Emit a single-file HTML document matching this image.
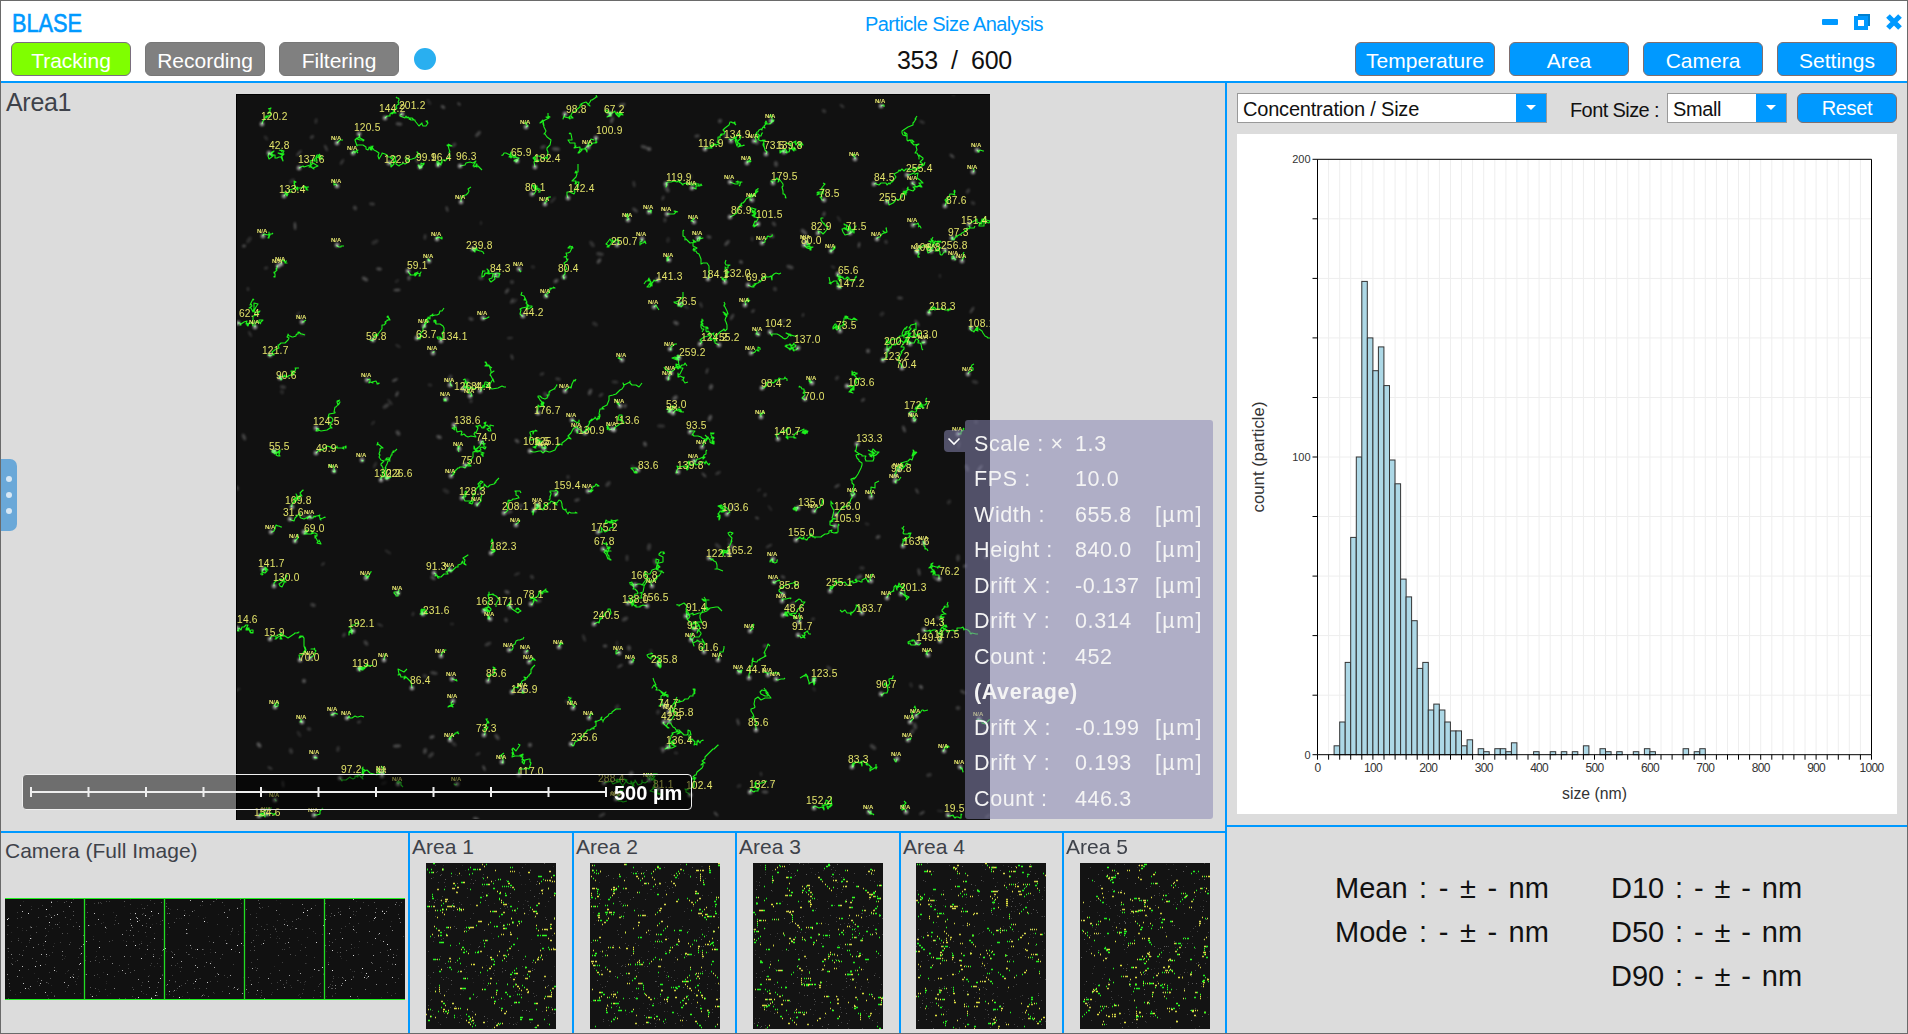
<!DOCTYPE html>
<html><head><meta charset="utf-8"><style>
*{margin:0;padding:0;box-sizing:border-box}
html,body{width:1908px;height:1034px;overflow:hidden;background:#dcdcdc;font-family:"Liberation Sans", sans-serif}
.a{position:absolute}
.t{position:absolute;white-space:pre;line-height:1}
.btn{position:absolute;border-radius:6px;color:#fff;font-size:21px;text-align:center;line-height:35px}
</style></head><body>
<div class="a" style="left:0;top:0;width:1908px;height:81px;background:#fff"></div><div class="a" style="left:0;top:81px;width:1908px;height:2px;background:#0099ff"></div><div class="t" style="left:12px;top:10.5px;font-size:25px;color:#0099ff;-webkit-text-stroke:0.6px #0099ff;transform:scaleX(0.87);transform-origin:0 0">BLASE</div><div class="t" style="left:865px;top:13.5px;font-size:20px;color:#0099ff;letter-spacing:-0.55px">Particle Size Analysis</div><div class="t" style="left:897px;top:48px;font-size:25px;color:#111;letter-spacing:-0.3px">353  /  600</div><div class="btn" style="left:11px;top:42px;width:120px;height:34px;background:#7fff00;border:1px solid #7a6e7e">Tracking</div><div class="btn" style="left:145px;top:42px;width:120px;height:34px;background:#808080;border:1px solid #777">Recording</div><div class="btn" style="left:279px;top:42px;width:120px;height:34px;background:#808080;border:1px solid #777">Filtering</div><div class="a" style="left:414px;top:48px;width:22px;height:22px;border-radius:50%;background:#29aff0"></div><div class="btn" style="left:1355px;top:42px;width:140px;height:34px;background:#0099ff;border:1px solid #806e6e">Temperature</div><div class="btn" style="left:1509px;top:42px;width:120px;height:34px;background:#0099ff;border:1px solid #806e6e">Area</div><div class="btn" style="left:1643px;top:42px;width:120px;height:34px;background:#0099ff;border:1px solid #806e6e">Camera</div><div class="btn" style="left:1777px;top:42px;width:120px;height:34px;background:#0099ff;border:1px solid #806e6e">Settings</div><div class="a" style="left:1822px;top:19px;width:16px;height:6px;border-radius:1px;background:#0099ff"></div><div class="a" style="left:1858px;top:14px;width:12px;height:12px;background:#0080d0"></div><div class="a" style="left:1854px;top:16px;width:14px;height:14px;background:#0099ff"></div><div class="a" style="left:1858px;top:20px;width:6px;height:6px;background:#fff"></div><svg class="a" style="left:1884px;top:12px" width="20" height="20"><path d="M4 4L16 16M16 4L4 16" stroke="#0099ff" stroke-width="5.2"/></svg><div class="t" style="left:6px;top:90px;font-size:25px;color:#3e424a;letter-spacing:-0.3px">Area1</div><div class="a" style="left:1px;top:459px;width:16px;height:72px;background:#6aa8d8;border-radius:0 7px 7px 0"></div><div class="a" style="left:6px;top:476px;width:6px;height:6px;border-radius:50%;background:#d8e8f5"></div><div class="a" style="left:6px;top:492px;width:6px;height:6px;border-radius:50%;background:#d8e8f5"></div><div class="a" style="left:6px;top:508px;width:6px;height:6px;border-radius:50%;background:#d8e8f5"></div><div class="a" id="img" style="left:236px;top:94px;width:754px;height:726px;background:#111;border-top:1px solid #000;border-left:1px solid #000;overflow:hidden"><svg width="754" height="725" style="position:absolute;left:-1px;top:-1px"><defs><filter id="bl" x="-50%" y="-50%" width="200%" height="200%"><feGaussianBlur stdDeviation="1.2"/></filter></defs><g fill="#fff" filter="url(#bl)"><ellipse cx="341" cy="406" rx="2.9" ry="1.5" transform="rotate(166 341 406)" opacity="0.22"/><ellipse cx="139" cy="371" rx="3.6" ry="1.1" transform="rotate(113 139 371)" opacity="0.16"/><ellipse cx="68" cy="587" rx="2.1" ry="2.0" transform="rotate(125 68 587)" opacity="0.29"/><ellipse cx="493" cy="446" rx="2.0" ry="1.5" transform="rotate(28 493 446)" opacity="0.11"/><ellipse cx="143" cy="175" rx="2.9" ry="1.4" transform="rotate(5 143 175)" opacity="0.27"/><ellipse cx="391" cy="464" rx="3.3" ry="1.5" transform="rotate(90 391 464)" opacity="0.16"/><ellipse cx="752" cy="722" rx="3.4" ry="1.3" transform="rotate(151 752 722)" opacity="0.15"/><ellipse cx="218" cy="51" rx="2.8" ry="1.8" transform="rotate(138 218 51)" opacity="0.18"/><ellipse cx="722" cy="614" rx="2.4" ry="1.9" transform="rotate(0 722 614)" opacity="0.19"/><ellipse cx="739" cy="288" rx="3.3" ry="1.8" transform="rotate(13 739 288)" opacity="0.15"/><ellipse cx="66" cy="241" rx="3.5" ry="1.1" transform="rotate(174 66 241)" opacity="0.15"/><ellipse cx="76" cy="43" rx="2.4" ry="1.6" transform="rotate(143 76 43)" opacity="0.19"/><ellipse cx="144" cy="531" rx="3.3" ry="1.1" transform="rotate(24 144 531)" opacity="0.18"/><ellipse cx="161" cy="196" rx="3.6" ry="1.3" transform="rotate(175 161 196)" opacity="0.28"/><ellipse cx="159" cy="286" rx="3.3" ry="1.1" transform="rotate(154 159 286)" opacity="0.30"/><ellipse cx="161" cy="187" rx="2.7" ry="1.3" transform="rotate(139 161 187)" opacity="0.11"/><ellipse cx="68" cy="422" rx="3.2" ry="1.4" transform="rotate(44 68 422)" opacity="0.19"/><ellipse cx="723" cy="351" rx="3.7" ry="1.2" transform="rotate(103 723 351)" opacity="0.13"/><ellipse cx="685" cy="593" rx="2.4" ry="1.7" transform="rotate(45 685 593)" opacity="0.29"/><ellipse cx="148" cy="689" rx="3.2" ry="1.4" transform="rotate(159 148 689)" opacity="0.12"/><ellipse cx="29" cy="698" rx="3.4" ry="1.3" transform="rotate(43 29 698)" opacity="0.26"/><ellipse cx="450" cy="213" rx="3.4" ry="1.1" transform="rotate(32 450 213)" opacity="0.15"/><ellipse cx="422" cy="618" rx="2.6" ry="1.9" transform="rotate(111 422 618)" opacity="0.14"/><ellipse cx="12" cy="195" rx="2.1" ry="1.2" transform="rotate(80 12 195)" opacity="0.17"/><ellipse cx="431" cy="95" rx="3.8" ry="2.0" transform="rotate(65 431 95)" opacity="0.23"/><ellipse cx="521" cy="424" rx="2.1" ry="1.0" transform="rotate(25 521 424)" opacity="0.28"/><ellipse cx="529" cy="698" rx="3.3" ry="1.5" transform="rotate(4 529 698)" opacity="0.25"/><ellipse cx="240" cy="725" rx="3.1" ry="1.7" transform="rotate(14 240 725)" opacity="0.28"/><ellipse cx="556" cy="510" rx="3.8" ry="1.4" transform="rotate(143 556 510)" opacity="0.24"/><ellipse cx="679" cy="632" rx="3.6" ry="1.9" transform="rotate(75 679 632)" opacity="0.21"/><ellipse cx="471" cy="277" rx="3.2" ry="1.1" transform="rotate(105 471 277)" opacity="0.23"/><ellipse cx="749" cy="638" rx="2.8" ry="1.7" transform="rotate(131 749 638)" opacity="0.22"/><ellipse cx="332" cy="608" rx="3.5" ry="1.0" transform="rotate(15 332 608)" opacity="0.22"/><ellipse cx="363" cy="167" rx="3.0" ry="1.6" transform="rotate(126 363 167)" opacity="0.28"/><ellipse cx="193" cy="8" rx="3.4" ry="1.2" transform="rotate(54 193 8)" opacity="0.13"/><ellipse cx="683" cy="478" rx="3.8" ry="1.3" transform="rotate(80 683 478)" opacity="0.23"/><ellipse cx="150" cy="312" rx="3.8" ry="1.9" transform="rotate(145 150 312)" opacity="0.18"/><ellipse cx="440" cy="229" rx="3.0" ry="1.8" transform="rotate(25 440 229)" opacity="0.27"/><ellipse cx="536" cy="689" rx="2.3" ry="1.5" transform="rotate(50 536 689)" opacity="0.16"/><ellipse cx="161" cy="300" rx="3.0" ry="1.3" transform="rotate(113 161 300)" opacity="0.27"/><ellipse cx="740" cy="328" rx="2.1" ry="1.9" transform="rotate(13 740 328)" opacity="0.11"/><ellipse cx="534" cy="414" rx="3.6" ry="1.0" transform="rotate(56 534 414)" opacity="0.13"/><ellipse cx="343" cy="18" rx="2.5" ry="1.1" transform="rotate(149 343 18)" opacity="0.11"/><ellipse cx="474" cy="324" rx="3.3" ry="1.8" transform="rotate(113 474 324)" opacity="0.29"/><ellipse cx="516" cy="145" rx="2.4" ry="1.0" transform="rotate(86 516 145)" opacity="0.19"/><ellipse cx="538" cy="130" rx="2.7" ry="1.7" transform="rotate(49 538 130)" opacity="0.20"/><ellipse cx="463" cy="548" rx="3.6" ry="1.9" transform="rotate(71 463 548)" opacity="0.12"/><ellipse cx="703" cy="524" rx="2.9" ry="1.6" transform="rotate(23 703 524)" opacity="0.28"/><ellipse cx="284" cy="412" rx="3.6" ry="1.9" transform="rotate(158 284 412)" opacity="0.19"/><ellipse cx="491" cy="149" rx="3.6" ry="1.6" transform="rotate(130 491 149)" opacity="0.24"/><ellipse cx="161" cy="652" rx="4.0" ry="1.5" transform="rotate(176 161 652)" opacity="0.26"/><ellipse cx="242" cy="660" rx="2.7" ry="1.1" transform="rotate(154 242 660)" opacity="0.19"/><ellipse cx="415" cy="557" rx="2.1" ry="1.8" transform="rotate(88 415 557)" opacity="0.11"/><ellipse cx="603" cy="125" rx="3.6" ry="1.1" transform="rotate(60 603 125)" opacity="0.13"/><ellipse cx="389" cy="525" rx="3.4" ry="1.9" transform="rotate(151 389 525)" opacity="0.20"/><ellipse cx="716" cy="62" rx="3.1" ry="1.3" transform="rotate(40 716 62)" opacity="0.25"/><ellipse cx="482" cy="379" rx="3.1" ry="1.3" transform="rotate(152 482 379)" opacity="0.18"/><ellipse cx="637" cy="653" rx="3.7" ry="2.0" transform="rotate(37 637 653)" opacity="0.20"/><ellipse cx="432" cy="146" rx="3.0" ry="1.6" transform="rotate(96 432 146)" opacity="0.11"/><ellipse cx="731" cy="374" rx="3.6" ry="1.6" transform="rotate(72 731 374)" opacity="0.20"/><ellipse cx="521" cy="48" rx="2.8" ry="2.0" transform="rotate(97 521 48)" opacity="0.28"/><ellipse cx="203" cy="343" rx="2.9" ry="1.8" transform="rotate(23 203 343)" opacity="0.28"/><ellipse cx="359" cy="230" rx="3.2" ry="1.9" transform="rotate(34 359 230)" opacity="0.13"/><ellipse cx="588" cy="17" rx="2.5" ry="1.7" transform="rotate(35 588 17)" opacity="0.16"/><ellipse cx="268" cy="449" rx="3.5" ry="1.1" transform="rotate(19 268 449)" opacity="0.20"/><ellipse cx="189" cy="143" rx="2.9" ry="1.4" transform="rotate(95 189 143)" opacity="0.18"/><ellipse cx="399" cy="116" rx="3.3" ry="1.6" transform="rotate(37 399 116)" opacity="0.21"/><ellipse cx="642" cy="443" rx="2.5" ry="1.7" transform="rotate(154 642 443)" opacity="0.26"/><ellipse cx="681" cy="229" rx="3.8" ry="1.2" transform="rotate(57 681 229)" opacity="0.30"/><ellipse cx="669" cy="97" rx="3.5" ry="1.3" transform="rotate(43 669 97)" opacity="0.12"/><ellipse cx="627" cy="306" rx="2.3" ry="1.4" transform="rotate(142 627 306)" opacity="0.24"/><ellipse cx="13" cy="146" rx="3.8" ry="2.0" transform="rotate(123 13 146)" opacity="0.12"/><ellipse cx="381" cy="550" rx="3.4" ry="1.2" transform="rotate(91 381 550)" opacity="0.11"/><ellipse cx="80" cy="27" rx="3.0" ry="1.6" transform="rotate(99 80 27)" opacity="0.13"/><ellipse cx="139" cy="148" rx="4.0" ry="1.9" transform="rotate(151 139 148)" opacity="0.12"/><ellipse cx="47" cy="690" rx="3.5" ry="1.3" transform="rotate(83 47 690)" opacity="0.19"/><ellipse cx="389" cy="312" rx="2.0" ry="1.7" transform="rotate(108 389 312)" opacity="0.27"/><ellipse cx="137" cy="329" rx="2.8" ry="1.2" transform="rotate(133 137 329)" opacity="0.13"/><ellipse cx="386" cy="11" rx="3.6" ry="1.7" transform="rotate(161 386 11)" opacity="0.27"/><ellipse cx="475" cy="293" rx="3.0" ry="2.0" transform="rotate(108 475 293)" opacity="0.26"/><ellipse cx="195" cy="661" rx="3.6" ry="1.8" transform="rotate(134 195 661)" opacity="0.18"/><ellipse cx="676" cy="638" rx="3.5" ry="1.8" transform="rotate(125 676 638)" opacity="0.18"/><ellipse cx="545" cy="51" rx="2.9" ry="1.0" transform="rotate(62 545 51)" opacity="0.17"/><ellipse cx="482" cy="452" rx="3.9" ry="1.7" transform="rotate(42 482 452)" opacity="0.17"/><ellipse cx="497" cy="413" rx="2.8" ry="2.0" transform="rotate(96 497 413)" opacity="0.23"/><ellipse cx="529" cy="552" rx="2.0" ry="1.6" transform="rotate(176 529 552)" opacity="0.25"/><ellipse cx="194" cy="291" rx="2.4" ry="1.4" transform="rotate(9 194 291)" opacity="0.12"/><ellipse cx="189" cy="657" rx="3.0" ry="2.0" transform="rotate(99 189 657)" opacity="0.21"/><ellipse cx="750" cy="463" rx="2.2" ry="1.6" transform="rotate(146 750 463)" opacity="0.25"/><ellipse cx="34" cy="674" rx="2.9" ry="1.2" transform="rotate(29 34 674)" opacity="0.20"/><ellipse cx="461" cy="42" rx="2.8" ry="1.5" transform="rotate(170 461 42)" opacity="0.22"/><ellipse cx="276" cy="207" rx="3.1" ry="1.3" transform="rotate(118 276 207)" opacity="0.24"/><ellipse cx="223" cy="10" rx="2.1" ry="1.2" transform="rotate(44 223 10)" opacity="0.25"/><ellipse cx="294" cy="651" rx="2.1" ry="2.0" transform="rotate(135 294 651)" opacity="0.29"/><ellipse cx="55" cy="657" rx="3.0" ry="2.0" transform="rotate(77 55 657)" opacity="0.15"/><ellipse cx="395" cy="680" rx="2.9" ry="2.0" transform="rotate(130 395 680)" opacity="0.26"/><ellipse cx="455" cy="83" rx="2.9" ry="1.2" transform="rotate(112 455 83)" opacity="0.11"/><ellipse cx="398" cy="90" rx="3.3" ry="1.5" transform="rotate(80 398 90)" opacity="0.15"/><ellipse cx="439" cy="304" rx="3.1" ry="2.0" transform="rotate(140 439 304)" opacity="0.29"/><ellipse cx="554" cy="173" rx="3.8" ry="1.8" transform="rotate(20 554 173)" opacity="0.22"/><ellipse cx="271" cy="197" rx="3.1" ry="1.6" transform="rotate(123 271 197)" opacity="0.23"/><ellipse cx="568" cy="138" rx="4.0" ry="1.9" transform="rotate(45 568 138)" opacity="0.28"/><ellipse cx="30" cy="44" rx="2.9" ry="1.6" transform="rotate(49 30 44)" opacity="0.12"/><ellipse cx="408" cy="53" rx="3.4" ry="1.6" transform="rotate(16 408 53)" opacity="0.23"/><ellipse cx="281" cy="347" rx="2.7" ry="1.7" transform="rotate(38 281 347)" opacity="0.27"/><ellipse cx="56" cy="87" rx="3.2" ry="1.8" transform="rotate(146 56 87)" opacity="0.14"/><ellipse cx="320" cy="187" rx="2.7" ry="1.7" transform="rotate(146 320 187)" opacity="0.30"/><ellipse cx="245" cy="398" rx="3.8" ry="1.4" transform="rotate(134 245 398)" opacity="0.17"/><ellipse cx="73" cy="635" rx="2.2" ry="1.6" transform="rotate(14 73 635)" opacity="0.20"/><ellipse cx="517" cy="217" rx="2.2" ry="1.2" transform="rotate(140 517 217)" opacity="0.23"/><ellipse cx="62" cy="220" rx="3.4" ry="1.3" transform="rotate(130 62 220)" opacity="0.13"/><ellipse cx="270" cy="526" rx="2.2" ry="1.7" transform="rotate(66 270 526)" opacity="0.21"/><ellipse cx="693" cy="681" rx="2.9" ry="1.8" transform="rotate(164 693 681)" opacity="0.16"/><ellipse cx="239" cy="290" rx="3.8" ry="1.2" transform="rotate(168 239 290)" opacity="0.17"/><ellipse cx="276" cy="263" rx="2.8" ry="1.2" transform="rotate(71 276 263)" opacity="0.21"/><ellipse cx="601" cy="392" rx="3.1" ry="1.2" transform="rotate(151 601 392)" opacity="0.25"/><ellipse cx="664" cy="204" rx="3.0" ry="1.5" transform="rotate(4 664 204)" opacity="0.21"/><ellipse cx="729" cy="472" rx="2.1" ry="1.5" transform="rotate(145 729 472)" opacity="0.26"/><ellipse cx="63" cy="59" rx="3.8" ry="1.1" transform="rotate(133 63 59)" opacity="0.23"/><ellipse cx="108" cy="541" rx="2.5" ry="1.2" transform="rotate(117 108 541)" opacity="0.25"/><ellipse cx="393" cy="554" rx="2.7" ry="2.0" transform="rotate(71 393 554)" opacity="0.23"/><ellipse cx="372" cy="390" rx="3.4" ry="1.9" transform="rotate(130 372 390)" opacity="0.18"/><ellipse cx="623" cy="483" rx="3.6" ry="1.8" transform="rotate(154 623 483)" opacity="0.28"/><ellipse cx="722" cy="464" rx="3.4" ry="1.8" transform="rotate(94 722 464)" opacity="0.18"/><ellipse cx="317" cy="106" rx="4.0" ry="1.4" transform="rotate(133 317 106)" opacity="0.13"/><ellipse cx="154" cy="308" rx="3.9" ry="1.1" transform="rotate(53 154 308)" opacity="0.16"/><ellipse cx="87" cy="470" rx="2.4" ry="1.1" transform="rotate(140 87 470)" opacity="0.19"/><ellipse cx="440" cy="659" rx="2.2" ry="1.2" transform="rotate(7 440 659)" opacity="0.14"/><ellipse cx="177" cy="520" rx="2.4" ry="1.2" transform="rotate(107 177 520)" opacity="0.16"/><ellipse cx="130" cy="549" rx="3.1" ry="1.8" transform="rotate(56 130 549)" opacity="0.20"/><ellipse cx="196" cy="643" rx="2.7" ry="1.5" transform="rotate(165 196 643)" opacity="0.29"/><ellipse cx="364" cy="160" rx="3.9" ry="1.8" transform="rotate(9 364 160)" opacity="0.18"/><ellipse cx="398" cy="374" rx="4.0" ry="1.7" transform="rotate(49 398 374)" opacity="0.15"/><ellipse cx="8" cy="343" rx="3.6" ry="1.7" transform="rotate(67 8 343)" opacity="0.22"/><ellipse cx="119" cy="114" rx="2.5" ry="1.9" transform="rotate(58 119 114)" opacity="0.20"/><ellipse cx="480" cy="720" rx="3.1" ry="1.2" transform="rotate(48 480 720)" opacity="0.25"/><ellipse cx="1" cy="596" rx="3.6" ry="1.1" transform="rotate(152 1 596)" opacity="0.15"/><ellipse cx="540" cy="70" rx="2.9" ry="2.0" transform="rotate(86 540 70)" opacity="0.22"/><ellipse cx="646" cy="220" rx="2.8" ry="1.9" transform="rotate(142 646 220)" opacity="0.12"/><ellipse cx="623" cy="151" rx="3.1" ry="1.2" transform="rotate(98 623 151)" opacity="0.27"/><ellipse cx="235" cy="225" rx="2.6" ry="1.5" transform="rotate(14 235 225)" opacity="0.24"/><ellipse cx="271" cy="498" rx="2.8" ry="1.5" transform="rotate(19 271 498)" opacity="0.29"/><ellipse cx="626" cy="474" rx="2.8" ry="1.7" transform="rotate(2 626 474)" opacity="0.15"/><ellipse cx="425" cy="332" rx="4.0" ry="1.8" transform="rotate(2 425 332)" opacity="0.14"/><ellipse cx="465" cy="211" rx="3.1" ry="1.3" transform="rotate(68 465 211)" opacity="0.17"/><ellipse cx="296" cy="483" rx="2.4" ry="1.7" transform="rotate(46 296 483)" opacity="0.17"/><ellipse cx="713" cy="408" rx="2.7" ry="1.8" transform="rotate(130 713 408)" opacity="0.12"/><ellipse cx="106" cy="68" rx="3.4" ry="1.2" transform="rotate(122 106 68)" opacity="0.18"/><ellipse cx="631" cy="430" rx="2.5" ry="1.2" transform="rotate(16 631 430)" opacity="0.12"/><ellipse cx="307" cy="53" rx="2.9" ry="1.5" transform="rotate(166 307 53)" opacity="0.23"/><ellipse cx="578" cy="595" rx="2.7" ry="1.4" transform="rotate(69 578 595)" opacity="0.10"/><ellipse cx="302" cy="507" rx="3.6" ry="1.7" transform="rotate(177 302 507)" opacity="0.22"/><ellipse cx="14" cy="240" rx="3.3" ry="1.1" transform="rotate(62 14 240)" opacity="0.18"/><ellipse cx="384" cy="572" rx="3.2" ry="1.2" transform="rotate(149 384 572)" opacity="0.25"/><ellipse cx="681" cy="397" rx="3.0" ry="1.1" transform="rotate(63 681 397)" opacity="0.24"/><ellipse cx="744" cy="374" rx="3.7" ry="1.2" transform="rotate(129 744 374)" opacity="0.29"/><ellipse cx="473" cy="143" rx="2.5" ry="1.6" transform="rotate(15 473 143)" opacity="0.24"/><ellipse cx="248" cy="674" rx="2.9" ry="1.1" transform="rotate(65 248 674)" opacity="0.29"/><ellipse cx="102" cy="655" rx="3.1" ry="1.6" transform="rotate(98 102 655)" opacity="0.15"/><ellipse cx="686" cy="719" rx="3.2" ry="1.1" transform="rotate(147 686 719)" opacity="0.26"/><ellipse cx="218" cy="650" rx="3.1" ry="1.8" transform="rotate(43 218 650)" opacity="0.14"/><ellipse cx="413" cy="55" rx="2.4" ry="2.0" transform="rotate(6 413 55)" opacity="0.29"/><ellipse cx="496" cy="223" rx="3.5" ry="1.4" transform="rotate(121 496 223)" opacity="0.22"/><ellipse cx="606" cy="12" rx="2.9" ry="1.1" transform="rotate(36 606 12)" opacity="0.18"/><ellipse cx="429" cy="126" rx="2.5" ry="1.6" transform="rotate(94 429 126)" opacity="0.17"/><ellipse cx="484" cy="27" rx="2.3" ry="2.0" transform="rotate(121 484 27)" opacity="0.22"/><ellipse cx="354" cy="298" rx="3.4" ry="1.8" transform="rotate(112 354 298)" opacity="0.25"/><ellipse cx="366" cy="721" rx="3.7" ry="1.4" transform="rotate(151 366 721)" opacity="0.19"/><ellipse cx="427" cy="656" rx="3.1" ry="1.4" transform="rotate(95 427 656)" opacity="0.28"/><ellipse cx="242" cy="40" rx="3.8" ry="1.7" transform="rotate(131 242 40)" opacity="0.22"/><ellipse cx="567" cy="221" rx="2.1" ry="1.1" transform="rotate(107 567 221)" opacity="0.19"/><ellipse cx="379" cy="288" rx="3.4" ry="1.5" transform="rotate(9 379 288)" opacity="0.15"/><ellipse cx="231" cy="287" rx="2.1" ry="1.9" transform="rotate(42 231 287)" opacity="0.29"/><ellipse cx="502" cy="628" rx="3.6" ry="1.2" transform="rotate(76 502 628)" opacity="0.25"/><ellipse cx="427" cy="655" rx="3.6" ry="1.1" transform="rotate(18 427 655)" opacity="0.21"/><ellipse cx="717" cy="0" rx="2.6" ry="1.3" transform="rotate(44 717 0)" opacity="0.11"/><ellipse cx="675" cy="591" rx="2.7" ry="1.6" transform="rotate(72 675 591)" opacity="0.11"/><ellipse cx="23" cy="651" rx="3.0" ry="1.9" transform="rotate(55 23 651)" opacity="0.30"/><ellipse cx="356" cy="150" rx="3.8" ry="1.9" transform="rotate(53 356 150)" opacity="0.14"/><ellipse cx="632" cy="257" rx="2.3" ry="1.9" transform="rotate(85 632 257)" opacity="0.30"/><ellipse cx="152" cy="458" rx="3.8" ry="1.1" transform="rotate(34 152 458)" opacity="0.12"/><ellipse cx="547" cy="227" rx="3.7" ry="1.7" transform="rotate(162 547 227)" opacity="0.13"/><ellipse cx="525" cy="680" rx="2.2" ry="1.2" transform="rotate(80 525 680)" opacity="0.16"/><ellipse cx="536" cy="142" rx="2.5" ry="1.7" transform="rotate(33 536 142)" opacity="0.26"/><ellipse cx="281" cy="480" rx="3.2" ry="1.2" transform="rotate(159 281 480)" opacity="0.16"/><ellipse cx="699" cy="484" rx="3.3" ry="1.1" transform="rotate(50 699 484)" opacity="0.30"/><ellipse cx="332" cy="383" rx="2.1" ry="1.6" transform="rotate(96 332 383)" opacity="0.16"/><ellipse cx="189" cy="582" rx="2.6" ry="1.8" transform="rotate(16 189 582)" opacity="0.15"/><ellipse cx="210" cy="397" rx="3.8" ry="2.0" transform="rotate(34 210 397)" opacity="0.11"/><ellipse cx="348" cy="544" rx="3.9" ry="1.5" transform="rotate(69 348 544)" opacity="0.14"/><ellipse cx="419" cy="468" rx="3.3" ry="1.8" transform="rotate(65 419 468)" opacity="0.20"/><ellipse cx="381" cy="613" rx="3.0" ry="2.0" transform="rotate(123 381 613)" opacity="0.13"/><ellipse cx="588" cy="120" rx="2.5" ry="1.4" transform="rotate(109 588 120)" opacity="0.25"/><ellipse cx="593" cy="574" rx="3.0" ry="1.2" transform="rotate(42 593 574)" opacity="0.22"/><ellipse cx="376" cy="26" rx="3.4" ry="1.6" transform="rotate(107 376 26)" opacity="0.27"/><ellipse cx="136" cy="110" rx="3.0" ry="1.4" transform="rotate(3 136 110)" opacity="0.19"/><ellipse cx="198" cy="579" rx="3.8" ry="1.6" transform="rotate(13 198 579)" opacity="0.21"/><ellipse cx="597" cy="173" rx="2.6" ry="1.0" transform="rotate(26 597 173)" opacity="0.16"/><ellipse cx="468" cy="381" rx="3.2" ry="1.1" transform="rotate(48 468 381)" opacity="0.26"/><ellipse cx="129" cy="185" rx="3.4" ry="1.8" transform="rotate(29 129 185)" opacity="0.26"/><ellipse cx="46" cy="298" rx="2.4" ry="2.0" transform="rotate(66 46 298)" opacity="0.11"/><ellipse cx="369" cy="552" rx="2.3" ry="1.5" transform="rotate(178 369 552)" opacity="0.25"/><ellipse cx="30" cy="174" rx="2.3" ry="1.4" transform="rotate(160 30 174)" opacity="0.16"/><ellipse cx="320" cy="55" rx="4.0" ry="1.8" transform="rotate(6 320 55)" opacity="0.25"/><ellipse cx="173" cy="184" rx="2.5" ry="1.5" transform="rotate(99 173 184)" opacity="0.29"/><ellipse cx="274" cy="244" rx="3.2" ry="1.0" transform="rotate(177 274 244)" opacity="0.18"/><ellipse cx="490" cy="42" rx="3.4" ry="1.9" transform="rotate(62 490 42)" opacity="0.22"/><ellipse cx="668" cy="335" rx="3.7" ry="1.4" transform="rotate(71 668 335)" opacity="0.26"/><ellipse cx="162" cy="252" rx="3.1" ry="1.2" transform="rotate(33 162 252)" opacity="0.14"/><ellipse cx="162" cy="339" rx="2.9" ry="2.0" transform="rotate(56 162 339)" opacity="0.24"/><ellipse cx="650" cy="148" rx="2.1" ry="1.7" transform="rotate(69 650 148)" opacity="0.17"/><ellipse cx="207" cy="13" rx="2.5" ry="1.4" transform="rotate(33 207 13)" opacity="0.28"/><ellipse cx="539" cy="195" rx="2.3" ry="1.9" transform="rotate(65 539 195)" opacity="0.17"/><ellipse cx="577" cy="525" rx="2.0" ry="1.3" transform="rotate(163 577 525)" opacity="0.18"/><ellipse cx="63" cy="640" rx="3.5" ry="1.5" transform="rotate(59 63 640)" opacity="0.11"/><ellipse cx="297" cy="173" rx="2.3" ry="1.6" transform="rotate(7 297 173)" opacity="0.11"/><ellipse cx="235" cy="307" rx="2.3" ry="1.7" transform="rotate(98 235 307)" opacity="0.15"/><ellipse cx="547" cy="483" rx="2.4" ry="1.3" transform="rotate(26 547 483)" opacity="0.24"/><ellipse cx="306" cy="280" rx="2.5" ry="1.3" transform="rotate(156 306 280)" opacity="0.17"/><ellipse cx="163" cy="30" rx="3.3" ry="1.6" transform="rotate(4 163 30)" opacity="0.26"/><ellipse cx="736" cy="216" rx="3.8" ry="1.2" transform="rotate(121 736 216)" opacity="0.24"/><ellipse cx="503" cy="692" rx="2.5" ry="1.6" transform="rotate(156 503 692)" opacity="0.12"/><ellipse cx="322" cy="285" rx="2.8" ry="1.3" transform="rotate(11 322 285)" opacity="0.20"/><ellipse cx="211" cy="115" rx="3.0" ry="1.2" transform="rotate(72 211 115)" opacity="0.23"/><ellipse cx="181" cy="67" rx="2.8" ry="1.2" transform="rotate(62 181 67)" opacity="0.22"/><ellipse cx="529" cy="401" rx="2.0" ry="1.4" transform="rotate(126 529 401)" opacity="0.17"/><ellipse cx="47" cy="293" rx="3.0" ry="1.6" transform="rotate(10 47 293)" opacity="0.19"/><ellipse cx="245" cy="184" rx="2.7" ry="1.9" transform="rotate(4 245 184)" opacity="0.21"/><ellipse cx="197" cy="484" rx="2.9" ry="1.6" transform="rotate(33 197 484)" opacity="0.29"/><ellipse cx="273" cy="418" rx="3.5" ry="1.6" transform="rotate(170 273 418)" opacity="0.22"/><ellipse cx="310" cy="301" rx="3.7" ry="1.9" transform="rotate(50 310 301)" opacity="0.18"/><ellipse cx="686" cy="28" rx="3.0" ry="1.3" transform="rotate(24 686 28)" opacity="0.17"/><ellipse cx="737" cy="109" rx="2.5" ry="1.7" transform="rotate(35 737 109)" opacity="0.15"/><ellipse cx="1" cy="394" rx="2.5" ry="1.5" transform="rotate(71 1 394)" opacity="0.23"/><ellipse cx="413" cy="453" rx="3.7" ry="2.0" transform="rotate(101 413 453)" opacity="0.17"/><ellipse cx="261" cy="643" rx="3.4" ry="1.7" transform="rotate(56 261 643)" opacity="0.24"/><ellipse cx="727" cy="598" rx="3.2" ry="1.5" transform="rotate(29 727 598)" opacity="0.21"/><ellipse cx="279" cy="207" rx="3.1" ry="1.2" transform="rotate(135 279 207)" opacity="0.15"/><ellipse cx="245" cy="129" rx="2.3" ry="1.1" transform="rotate(92 245 129)" opacity="0.11"/><ellipse cx="77" cy="511" rx="2.9" ry="1.8" transform="rotate(20 77 511)" opacity="0.20"/><ellipse cx="123" cy="628" rx="2.1" ry="1.3" transform="rotate(157 123 628)" opacity="0.20"/><ellipse cx="601" cy="284" rx="2.5" ry="1.7" transform="rotate(129 601 284)" opacity="0.17"/><ellipse cx="252" cy="550" rx="3.7" ry="1.6" transform="rotate(152 252 550)" opacity="0.18"/><ellipse cx="533" cy="452" rx="3.6" ry="1.1" transform="rotate(150 533 452)" opacity="0.18"/><ellipse cx="505" cy="168" rx="2.0" ry="1.6" transform="rotate(33 505 168)" opacity="0.29"/><ellipse cx="732" cy="97" rx="2.8" ry="1.6" transform="rotate(124 732 97)" opacity="0.18"/><ellipse cx="704" cy="717" rx="3.4" ry="1.1" transform="rotate(9 704 717)" opacity="0.11"/><ellipse cx="216" cy="530" rx="2.2" ry="1.3" transform="rotate(179 216 530)" opacity="0.11"/><ellipse cx="409" cy="350" rx="2.6" ry="1.8" transform="rotate(67 409 350)" opacity="0.27"/><ellipse cx="214" cy="284" rx="3.5" ry="2.0" transform="rotate(111 214 284)" opacity="0.18"/><ellipse cx="523" cy="396" rx="2.3" ry="1.2" transform="rotate(144 523 396)" opacity="0.12"/><ellipse cx="704" cy="182" rx="2.2" ry="1.3" transform="rotate(88 704 182)" opacity="0.10"/><ellipse cx="427" cy="104" rx="2.5" ry="1.2" transform="rotate(113 427 104)" opacity="0.20"/><ellipse cx="276" cy="188" rx="2.1" ry="1.9" transform="rotate(9 276 188)" opacity="0.16"/><ellipse cx="59" cy="132" rx="4.0" ry="1.2" transform="rotate(87 59 132)" opacity="0.27"/><ellipse cx="365" cy="301" rx="2.8" ry="1.1" transform="rotate(145 365 301)" opacity="0.21"/><ellipse cx="495" cy="452" rx="3.9" ry="1.9" transform="rotate(50 495 452)" opacity="0.30"/><ellipse cx="334" cy="604" rx="2.4" ry="1.0" transform="rotate(130 334 604)" opacity="0.13"/><ellipse cx="90" cy="54" rx="3.5" ry="1.3" transform="rotate(65 90 54)" opacity="0.20"/><ellipse cx="8" cy="152" rx="2.0" ry="1.5" transform="rotate(173 8 152)" opacity="0.26"/></g><path d="M26 30L27 27L28 26L29 24L31 22L32 22L30 24L29 23L31 23L30 22L32 23L31 22L31 22L32 22L31 22L31 23L30 23L31 22L32 22L35 21L35 20L35 20L33 18L32 19L34 18L34 15L35 14L32 15M33 59L32 62L33 65L37 62L36 60L36 59L38 57L36 58L35 59L36 62L34 60L38 61L36 62L33 59L35 61L39 61L39 64L41 64L43 63L46 63L47 67L45 63L48 60L42 59L46 61L47 59L48 57L45 56L46 58L46 57L43 56L43 56M63 74L67 72L68 73L74 71L75 72L73 73L76 73L75 73L78 75L77 74L82 72L77 69L75 71L74 67L77 66L78 66L79 65L79 64L79 65L78 67L79 67L81 67L80 63L81 61L83 61L82 63L82 63L83 64L82 63L81 63L85 65L86 65L86 63L85 63L85 63L84 61L83 63L83 61L83 61L84 60M48 102L50 99L48 98L51 100L52 100L51 102L50 100L53 98L56 98L54 98L53 98L53 96L57 95L58 95L59 92L58 87L60 88L58 89L59 93L60 94L61 95L61 94L62 96L61 94L61 96L61 93L62 94L65 94L68 93L70 93L68 92L70 94L70 95L71 96L72 96L71 96L71 95L71 95L71 96L70 95L71 94L71 93L73 93M123 40L124 44L128 46L127 47L127 46L124 46L121 45L123 43L123 44L121 44L119 46L121 52L121 51L127 51L130 53L130 55L132 56L133 54L133 53L135 54L135 54L134 55L137 52L137 52L135 56L134 55L135 54L135 53L135 52L136 56L136 53L138 56L140 57L143 59L142 62L143 65L146 60L146 59L149 60L151 61L152 63L154 63L156 65M149 24L151 22L154 22L154 20L156 19L155 19L158 18L160 19L158 19L157 19L157 18L156 20L157 19L158 17L157 16L158 16L160 15L161 14L160 14L160 13L161 11L163 10L161 11L163 10L162 8L163 6L163 5L162 4L162 4L161 4L160 3M166 20L166 20L164 21L164 22L169 24L170 22L171 24L172 23L174 25L173 25L175 26L173 24L173 24L176 24L178 26L176 26L179 26L179 27L183 32L186 29L186 30L187 32L190 32L190 32L192 29L190 27L192 27M153 69L155 70L155 71L155 73L156 72L158 70L157 68L158 67L156 64L157 62L160 63L159 65L160 67L158 68L160 67L160 67L160 70L163 72L163 72L164 71L164 71L166 70L166 70L167 69L169 70L171 69L173 67L173 67L173 66L172 66L171 66L171 64L171 64L169 64L171 64L173 65L172 66L176 65L179 64L182 61L184 61L183 60L181 58L182 58M184 73L186 72L186 73L185 71L185 69L187 70L188 69L188 70L187 71L186 72L186 73L185 74L184 74L183 71L182 71L183 73L184 75M202 71L203 70L203 70L202 72L201 69L201 69L201 67L202 68L203 68L202 70L203 69L205 71L205 69L206 67L206 69L206 67L206 66L205 66L208 66L209 67L212 64L213 63L214 62L213 58L214 58L213 55L212 51L211 51L212 52L213 51L214 52L215 52L216 52L214 51L212 50M224 72L229 71L230 69L234 68L237 69L240 67L237 72L238 72L241 73L241 71L240 70L241 70L240 72L241 71L238 73L239 72L242 72L246 76M281 67L280 68L282 66L280 67L278 67L279 66L282 65L283 64L278 63L278 64L278 62L277 61L278 61L280 62L279 63L275 63L274 62L276 62L275 64L274 62L276 63L273 63L274 62L274 62L274 61L275 58L275 61L274 61L270 59L268 59L267 61L266 61L266 62M299 73L298 68L299 66L299 63L300 67L303 66L301 68L297 64L300 62L303 62L308 65L310 63L311 65L312 58L311 56L311 54L314 51L315 46L311 43L309 40L308 40L309 39L310 37L308 33L307 29L307 30L308 32L307 26L304 29L306 28L309 26L313 24L312 24L310 23L314 23L312 22L312 19M296 100L298 100L300 97L299 96L302 95L302 94L301 95L299 96L301 92L297 92L296 91L296 91L299 95L298 94L301 93L298 91L298 94L299 94L303 95L304 95L304 98L304 98L302 98M332 104L331 101L331 100L331 98L334 98L335 98L334 98L338 100L339 98L338 96L340 95L340 96L342 93L341 93L342 92L343 88L342 88L341 88L340 90L339 90L340 87L337 87L336 87L340 83L341 80L340 77L339 79L342 78L342 75L342 73L342 70M329 20L329 20L328 22L327 25L328 22L328 22L329 23L333 24L334 22L333 23L334 25L333 24L337 24L335 22L335 21L336 19L338 18L341 16L340 16L344 13L344 11L346 11L345 10L347 9L347 9L350 8L351 9L353 11L354 12L353 11L352 11L354 8L355 6L356 6L359 4L360 3L361 3L360 1M374 20L375 19L374 18L371 19L369 17L371 16L372 18L375 21L374 22L371 23L374 21L375 22L375 20L379 17L379 18L380 20L383 20L387 21L385 19L386 19L383 23L380 20L381 19L384 19L385 20L384 17L384 18L383 19L383 20L383 21L383 21L383 22L383 23L384 20L383 19M360 44L360 48L359 49L357 49L360 49L361 48L360 49L360 49L357 49L354 52L352 51L349 55L351 56L351 58L349 54L349 55L347 55L345 55L346 56L343 59L342 59L344 56L344 53L338 54L340 52L339 52L339 51L339 49L334 49L332 46L336 46L336 45L335 40L334 39L333 40M430 90L431 91L430 93L431 90L430 89L432 88L435 88L438 87L438 87L441 88L442 87L444 86L444 87L443 88L445 89L446 90L447 91L447 90L450 89L452 91L452 89L453 89L455 89L456 89L456 90L456 91L455 91L458 91L458 90L460 90L460 89L459 90L461 90L463 90L463 91L462 92M469 55L470 54L473 54L473 54L476 54L474 52L476 51L476 52L477 52L477 50L478 51L479 51L478 50L477 50L479 50L480 51L483 50L483 49L481 48L482 48L482 46L482 43L484 43L484 44L484 42L486 41L484 42L485 40L488 40L489 38L487 36L489 34L493 31L494 28L496 28L495 28L497 29L499 29L499 30L499 29L497 29L499 28L498 29L500 31M495 47L494 45L493 45L495 46L499 44L501 46L499 46L500 49L501 52L502 49L500 46L498 42L500 44L501 42L503 40L505 43L504 45L501 48L504 50L505 52L502 53L504 52L503 51L506 52L508 51L508 52M530 60L531 58L529 56L528 52L528 53L527 51L528 50L528 51L527 50L528 49L527 47L529 46L529 47L527 46L525 47L523 46L522 45L523 44L523 44L523 42L524 42L522 40L521 40L519 41L520 40L521 38L522 38L523 36L525 35L526 36L526 35L527 33L529 34L529 34L528 32L531 29L531 29L530 27L529 29L530 30L533 30L535 29L534 30L536 28L538 27M548 58L544 57L544 56L544 59L547 56L548 56L547 56L548 57L549 55L550 56L551 58L551 59L549 58L553 58L554 55L553 55L558 54L558 53L559 55L558 54L558 53L558 56L560 56L556 54L558 57L556 55L555 51L553 50L551 49L550 49L553 50L556 49L560 47L559 49L560 51L561 49L563 48L566 50L566 49L564 49L563 51L563 51L565 53L565 50L567 51L566 50M537 89L535 87L539 87L539 86L541 84L543 87L542 88L543 86L541 85L542 85L544 86L547 90L547 92L546 93L547 97L547 100L548 100L548 100L549 101L550 104L549 103M588 106L586 106L585 104L584 103L586 103L585 100L583 100L581 101L583 99L582 98L581 99L582 98L586 98L587 97L587 100L586 99L587 98L588 95L585 95L588 91L589 90L587 89M638 90L640 89L640 90L643 91L645 89L646 89L650 89L651 91L653 89L654 90L656 87L656 88L656 88L657 87L660 83L658 80L660 79L662 78L663 76L664 77L666 75L668 77L670 75L673 75L673 76L677 75L678 73L679 75L679 76L681 75L680 76L680 76L681 76L681 74L681 74L682 73L682 74L684 74L684 73L687 71L686 72L688 71L689 68L689 68M671 81L673 81L678 79L679 76L684 74L687 70L684 68L687 65L687 64L683 61L683 65L683 63L681 59L679 59L681 56L680 52L683 50L678 51L675 48L678 48L678 48L676 46L673 46L675 47L674 46L672 47L671 46L671 45L671 40L668 38L670 42L667 41L666 39L666 37L672 33L677 31L677 29L678 28L680 25L679 25L681 22M651 108L650 107L650 106L652 106L653 111L657 109L659 107L660 105L663 106L665 103L666 103L666 101L671 98L669 99L668 97L667 99L670 100L670 97L670 97L667 98L667 98L669 98L670 99L670 101L669 98L670 97L672 96L672 93L671 95L674 96L677 97L679 95L677 93L681 93L683 92L686 93L684 90L683 89L687 89L684 86L681 84L682 79L679 80L679 80L679 81M709 112L710 109L712 109L712 109L712 107L712 105L712 106L711 106L710 108L709 106L709 106L713 103L714 100L715 100L716 100L716 100L719 101L718 100L719 98L718 98L718 98L719 97L718 97L719 96M733 130L738 127L741 125L741 128L744 129L745 130L746 130L745 128L749 128L753 129L754 127L754 127L754 127L750 126L750 126L749 123L748 126L747 125L746 125L745 129L743 131L743 132L748 132L748 127L748 127L748 127L746 126L748 125L748 127L749 127M716 144L717 145L717 145L716 143L716 143L716 146L717 144L717 145L717 145L718 146L720 142L721 143L721 142L725 140L726 139L728 138L729 136L729 137L730 137L731 134L733 135L734 133L733 132L734 134L736 134L738 134L739 132M494 123L498 121L499 120L501 119L501 115L502 115L503 115L504 112L504 112L504 111L506 112L505 110L506 109L506 109L507 109L509 107L510 105L513 103L515 100L516 101L519 101L515 102L516 103L519 100L520 96L522 95L522 94M522 130L518 133L519 131L519 131L517 132L519 127L520 128L522 125L522 124L519 123L520 123L520 123L518 123L520 119L516 116L514 114L516 114L519 115L519 115L520 115L518 118L516 117L516 118L519 120L517 121L516 121L517 122L519 121L519 118L519 119L519 115L519 117M582 139L583 139L582 137L585 138L586 139L587 140L589 138L592 134L589 131L588 129L588 130L587 129L585 126L585 124L587 124L585 124M614 139L615 136L615 138L615 138L616 138L613 140L609 141L607 138L606 135L610 134L612 137L610 135L611 131L611 131L609 131L608 130L613 133L613 134L614 132L613 135L609 135L608 134L610 135L609 135L611 136L613 137L614 133L615 136L618 135L620 132L618 135L618 139L618 138L616 138L617 136M568 151L570 153L571 153L572 153L577 153L575 154L575 154L574 156L575 156L574 155L571 154L570 153L574 152L574 155L575 155L574 153M381 151L383 150L382 148L383 148L382 146L382 145L379 147L375 147L374 145L371 149L370 150L373 152L372 152L373 153L373 153L371 153L374 151L376 148L377 148L379 148L379 147L377 147L376 145M237 155L236 155L239 154L240 156L241 154L240 154L241 155L239 155L239 158L237 156L239 156L242 156L241 156L244 157L245 157L247 158L248 160M172 177L173 179L175 181L174 181L178 181L179 179L180 181L181 180L179 182L179 179L180 179L182 178L180 179L180 179L184 180L185 178L184 180L184 182L183 182L184 181M260 181L259 180L257 180L256 184L253 185L254 187L255 188L255 188L259 185L259 185L258 182L261 183L263 183L263 180L263 182L264 180L263 179L264 180L261 179L258 180L256 179L253 180L249 179L252 179L252 176L251 175L253 177L253 180L251 179L249 179L248 182L249 180L248 182L246 183L246 180L247 177L249 177L246 177M328 183L328 185L327 182L328 181L329 180L329 177L329 176L331 175L330 173L328 169L331 167L332 165L331 166L330 163L328 163L331 162L330 159L330 159L332 159L334 158L335 156L336 154L332 154L332 154L334 152L336 153L336 154L337 154L336 152M422 186L419 187L418 186L417 188L416 189L416 192L415 191L415 189L414 190L413 190L414 191L415 191L414 193L411 193L412 192L414 189L415 188L414 187L413 187L413 187L413 186L412 186L413 184L413 185L414 186L411 187L410 187L408 190M472 185L473 181L473 177L473 172L471 169L470 169L467 169L465 170L465 165L463 160L461 159L460 157L458 157L458 154L457 156L458 156L461 154L457 152L457 149L458 147L457 146L457 146L460 148L454 149L453 148L450 145L449 145L449 146L449 143L447 142L447 139L447 137L448 136M489 188L488 186L488 185L486 184L486 183L486 185L487 186L490 186L490 182L491 181L489 182L491 182L491 183L491 180L489 179L491 179L493 178L491 177L491 177L492 179L492 179L489 176L489 175L490 174L489 173L489 173L490 174L492 174L492 172L494 171L490 171L489 169L490 166L490 166M512 191L514 192L516 193L518 193L517 192L517 192L517 191L517 193L519 191L520 190L518 190L522 189L524 187L523 188L523 188L523 188L524 188L525 187L526 185L527 184L528 183L527 184L529 183L529 184L528 184L530 182L530 183L533 183L535 182L536 186L536 182L538 180L540 179L543 180L545 179M602 180L601 182L602 182L602 183L604 183L603 182L605 182L604 182L605 183L604 183L603 182L603 184L603 186L604 188L604 185L602 185L604 184L604 185L604 185L604 185L604 184L607 183L606 183L606 183L608 185L609 185L610 185L611 183L612 183L610 184L613 184L613 186L614 186L616 187L619 186L619 186L619 184L620 183L620 182L620 183L620 183L621 183M603 193L603 192L605 194L601 192L603 192L603 191L603 191L602 189L601 190L601 188L601 189L601 187L598 187L595 189L593 189L595 190L595 189L594 188L593 183M681 157L681 157L682 159L682 159L682 156L684 154L685 155L684 154L683 152L684 153L685 154L685 153L688 151L691 154L692 154L691 155L692 155L692 155L691 156L692 159L694 158L695 157L696 154L695 156L696 157L696 157L696 156L694 156L692 154L693 152L693 150L695 149L695 148L693 147L693 148M709 156L710 158L708 158L706 161L705 161L704 160L704 159L704 158L702 154L702 157L699 157L703 154L705 154L702 152L700 150L701 151L702 149L702 148L703 148L705 148L704 147L704 148L702 147L701 148L699 147L698 150L697 152L696 151L698 151L697 151L697 150L697 150L697 149L697 147L695 145L697 147L695 147L697 143M693 219L692 218L694 219L693 216L694 216L696 216L697 215L699 216L696 214L695 213L696 215L698 213L700 215L700 215L704 215L707 215L706 214L706 214L707 215L709 216L713 216L713 216L713 216L715 215L713 215L712 217L712 216L712 216L714 216L713 216M735 234L735 233L734 233L734 235L736 237L737 237L738 238L739 236L741 235L742 237L739 236L741 233L742 233L741 235L743 235L746 237L747 239L749 242L751 243L752 244L755 244L755 243M2 229L4 229L5 231L4 231L5 230L8 228L11 227L10 230L13 229L12 232L11 231L14 229L17 229L17 232L16 229L17 226L17 223L17 222L21 221L24 217L19 219L18 217L19 215L20 213L22 210L18 209L18 215L17 217L17 218L15 214L13 214L16 212L15 210L14 211L17 205L18 206M137 246L134 246L137 247L137 244L140 243L142 241L141 242L138 241L142 240L146 235L146 231L148 231L148 231L150 229L150 229L149 228L152 226L151 226L154 226L153 224L151 223L152 222L153 225L153 226L151 226M181 244L182 245L182 244L184 245L185 242L183 244L186 242L183 240L185 239L187 237L187 237L187 235L187 233L189 233L189 231L191 228L193 228L191 225L191 225L192 224L192 223L194 225L194 222L196 221L197 220L196 222L199 221L201 221L203 220L204 217L206 217L206 217L208 214M205 247L205 245L205 244L204 243L203 243L203 243L201 243L201 243L202 245L205 245L205 245L204 244L205 245L207 244L207 243L206 239L208 237L208 234L207 232L204 230L203 230L200 230L199 228L200 227L200 229L199 228L200 227L199 226L198 227L198 228L198 226M287 222L286 222L284 220L285 216L284 215L286 214L291 213L291 210L292 213L290 215L292 215L294 214L296 213L296 212L294 212L293 212L290 209L291 208L289 205L289 204L288 206L290 206L288 202L285 201L286 198M444 210L443 211L446 208L447 211L445 213L445 212L444 212L442 212L442 210L439 209L438 208L440 208L442 207L447 203L447 201L447 198M464 250L466 248L464 246L468 243L472 242L474 241L474 244L475 244L475 246L474 245L478 245L477 245L480 245L480 242L484 238L487 236L488 235L489 237L491 235L491 231L490 228L490 228L489 226L490 223L491 222L489 221L489 219L487 218L491 221L488 220L492 220L491 217L488 211L488 212L489 210L488 208M483 251L479 249L479 247L478 247L480 245L481 247L480 246L480 245L479 243L477 240L478 239L476 240L476 240L474 240L474 239L473 240L473 241L474 239L472 237L471 238L470 237L470 234L470 234L471 233L472 234L472 235L470 233L468 233L466 231L466 229L466 227L466 227L467 227L466 226L467 226L466 226L466 225L466 227L465 228L467 230L465 230L465 233L466 235L468 235L466 238M534 238L534 239L536 242L536 240L541 240L543 241L546 243L547 244L549 245L551 244L554 240L555 242L550 239L558 242L560 242L562 241M562 254L560 256L557 256L558 257L557 254L555 254L555 252L554 250L556 252L558 249L558 251L560 251L559 253L558 253L556 254L555 253L555 254L555 255L552 254L553 254L553 255L555 255L556 255L555 254L556 254L557 254L557 255L557 254L557 253L557 255L555 254L554 256L553 254L552 254L549 252L550 252L550 253L550 251L551 252L551 251L553 251L554 250M604 237L604 233L601 236L600 235L601 232L600 231L600 230L599 230L597 233L597 235L600 232L599 234L601 234L602 232L606 232L608 229L608 232L608 230L607 228L608 226L608 224L611 224L609 223L609 222L610 225L610 222L612 223L611 224L613 225L614 225L616 226L618 224L621 226L617 225M651 256L651 255L651 251L651 246L651 245L650 248L653 249L653 248L654 250L654 249L653 248L655 246L657 245L661 245L664 242L668 242L668 244L668 241L670 241L670 239L667 242L667 242L666 240L667 237L669 234L670 235L669 235L671 233L671 232M674 250L673 250L673 250L675 249L673 247L670 246L671 243L674 241L673 241L675 239L672 241L673 240L672 237L669 238L671 239L673 240L673 237L675 235L675 234L673 234L675 231L679 230L680 229L680 232L680 236L678 235L679 239L680 241L683 240L685 239L682 241L683 240L681 241L680 241L682 241L682 241L680 242M647 266L646 266L646 265L647 266L651 263L651 260L651 257L652 257L653 256L652 255L654 254L655 254L654 253L653 253L655 253L656 251L657 251L660 250L660 250L659 251L662 249L664 246L667 248L668 249L669 248L669 247L670 246L670 244L672 244L672 245L673 242L674 242L674 242L675 243L677 242L679 243L679 243L681 242L679 243M666 274L665 270L663 269L663 266L663 265L662 264L664 262L666 258L665 258L668 255L668 253L665 253L667 250L670 245L671 246L671 248L673 248L672 247L673 248L672 246L670 247L670 248L671 246L672 249L672 248L676 249L678 249L680 245L681 245L683 247L682 248L682 249L684 249L685 250L686 255L687 256M34 261L32 261L34 262L36 261L38 260L38 261L37 260L36 258L40 255L43 254L42 251L43 251L45 249L48 249L49 249L50 248L52 246L53 244L51 243L52 241L52 240L53 242L54 242L56 243L57 243L60 242L60 242L60 241L61 240L62 240L62 238L62 238L63 239L63 238L64 239L65 240L66 240L69 241M44 284L45 286L46 285L43 283L44 282L46 283L48 282L49 281L48 282L49 283L49 282L52 283L52 282L55 281L56 281L57 281L56 281L57 281L58 280L58 278L56 280L56 279L55 277L59 277L60 274L59 274L63 274M443 264L443 263L444 263L441 262L442 261L443 262L444 263L441 263L442 264L439 264L441 266L436 264L439 263L441 264L441 265L443 266L442 265L443 271L440 270L440 274L440 271L442 273L443 273L443 271L444 273L445 272L443 273L445 274L447 274L444 280L442 281L442 282L443 283L442 281L442 281L442 279L442 283L444 282L448 284L448 283L447 286L446 286L447 286L449 289L452 288M227 295L229 292L230 295L229 293L228 292L228 289L232 288L231 293L231 293L232 293L235 295L235 293L239 295L241 293L243 294L249 293L252 293L256 295L262 294L266 292L268 293L270 293M244 297L245 297L247 291L248 293L249 288L250 288L253 289L252 290L254 292L254 293L250 290L252 292L254 291L254 290L257 285L258 288L255 282L254 281L255 279L258 277L255 279L255 277L253 271L251 271L250 268L249 268L251 270L249 272L253 272L256 274M526 294L528 294L531 291L530 289L533 288L535 288L537 289L540 287L539 286L542 286L543 284L545 285L547 285L548 285L549 283L549 284L549 284L551 285L551 287M611 292L612 292L614 293L617 292L618 294L617 294L618 292L618 292L618 296L616 296L615 295L614 297L613 298L615 298L617 299L614 298L617 295L616 295L616 294L616 295L618 292L619 291L621 288L619 288L620 285L624 284L623 285L620 286L621 285L621 285L620 283L618 281L619 281L616 281L616 277L617 281L620 280L621 279L621 280L618 278L616 281M569 305L569 306L566 304L569 301L569 300L567 299L568 298L569 297L568 297L568 295L566 295L566 295L565 293L563 293L564 293L563 292M675 320L675 322L674 321L673 319L676 317L678 318L679 318L679 318L680 318L681 315L679 315L680 313L681 313L682 314L683 313L682 314L682 313L681 313L681 313L683 311L684 310L684 309L685 311L684 312L686 311L685 309L686 312L686 312L685 312L685 313L688 314L687 313L686 312L684 313L682 313L682 311L683 312L686 311L687 311L689 311L691 309L690 307L690 305L691 304M434 317L436 315L438 312L434 313L433 315L433 315L433 316L434 317L432 318L434 318L432 315L435 316L436 316L437 315L437 315L435 316L433 316L430 315M218 331L219 336L216 334L220 333L221 338L221 338L225 337L226 338L225 341L226 341L228 340L230 342L232 343L232 343L235 342L240 343L238 340L239 338L240 339L242 334L240 332L243 332L242 332L244 331L246 334L248 334L247 333L248 333L248 332L249 333L249 331L249 330L248 329L250 328L249 331L252 332L251 331L253 333L254 333L254 334L255 337L253 337L251 335L254 334L254 331L258 332M302 319L301 318L302 315L302 311L304 313L305 312L307 312L308 313L308 313L307 310L308 309L307 308L306 311L305 310L306 308L305 307L304 306L303 304L302 303L302 302L302 302L304 302L306 304L309 305L311 304L312 302L311 301L313 301L313 298L314 298L313 298L313 298L314 297L318 295L319 295L318 295L319 294L321 291L320 291M80 334L83 335L81 335L80 337L82 337L82 336L85 337L91 336L94 334L96 334L94 332L95 331L95 330L95 329L92 329L96 328L97 326L96 324L94 323L92 324L93 320L99 319L99 318L98 318L99 313L100 313L104 308L103 310L102 311L101 308L103 307L101 307L104 306M378 336L379 334L378 335L379 334L378 334L381 332L384 330L388 329L387 327L384 325L385 327L386 324L386 321L383 321L382 326L385 326M454 338L454 337L455 337L459 337L456 341L457 340L457 339L457 341L458 342L460 342L460 342L462 342L465 343L466 344L468 345L469 345L468 347L470 346L470 345L472 343L473 345L474 346L474 348L475 349L475 349L478 350L477 350L477 349L478 350L478 347L477 347L478 350L477 348L476 349L476 347L477 345L478 344L477 343L475 344L477 344L476 343L475 341L475 339L477 340L478 339L474 339M542 345L540 341L540 340L541 341L545 338L549 337L550 336L553 334L551 335L551 337L551 338L551 342L552 345L550 343L553 343L557 343L560 344L558 344L558 341L561 338L564 337L568 335L568 337L572 337L569 340L567 339L567 337L566 339L570 339L569 337L570 338L568 338L570 336L570 339L572 339M621 350L620 356L619 357L622 359L626 361L626 362L628 362L630 362L629 364L630 367L634 367L637 367L638 364L638 364L637 361L634 362L636 363L633 360L637 360L638 362L636 361L638 362L640 361L643 358L639 358L640 358L637 355L636 357L639 360L637 359L634 357L632 356M38 357L37 357L37 356L36 357L36 358L38 359L38 358L39 356L40 358L39 359L41 359L43 358L41 358L42 358L44 356L43 359L43 361L44 357L43 361L44 362L42 362L40 361L41 359L38 360M80 359L83 356L85 356L84 356L85 355L86 356L87 356L86 356L88 355L91 352L95 353L94 353L95 354L97 355L99 354L101 353L101 353L101 352L101 354L104 354L106 354L108 355L107 353L109 353L110 352L110 354L109 354M245 348L247 347L248 350L245 349L244 352L240 355L242 354L241 355L239 356L239 355L238 352L238 352L238 355L240 355L239 358L240 356L242 357L248 359L245 360L246 361L247 362L247 360L247 361L247 363M294 357L297 358L299 358L303 357L305 357L307 359L309 357L310 357L313 358L314 358L319 356L320 354L321 352L323 351L322 350L324 350L326 351L326 349L330 346L332 344L335 345L334 344L332 342L335 339L336 337L337 335L338 334L341 333L341 332L342 335L343 335L345 336L347 339L347 338L347 339L349 337L349 338L352 335L354 336L353 334L354 334L355 336M304 351L301 351L299 354L298 353L298 353L300 354L297 353L298 353L300 352L300 349L300 349L301 348L301 348L300 347L300 347L304 346L304 347L303 347L301 350L303 350L301 349L300 351L300 351L301 350L301 346L302 348L303 347L304 346L300 345L298 345L296 346L294 346L294 343L295 342L294 339L294 338L294 338L297 337L297 339L297 340L298 337L301 337L299 336M349 339L350 335L351 332L352 332L354 328L353 328L356 325L355 327L359 324L359 323L361 326L362 324L361 325L363 325L364 322L362 323L362 323L364 321L363 320L364 315L368 315L366 314L367 313L371 311L373 306L373 302L377 301L380 300L382 298L382 298L384 296L386 295L388 292L387 289L388 291L392 289L394 288L394 287L394 287L394 289L396 291L400 291L403 293L406 289M229 371L231 371L231 371L233 370L234 371L235 372L232 372L232 370L234 367L235 366L237 363L237 360L237 358L240 357L241 358L242 358L242 357L245 356L244 354L246 353L249 355L250 353L248 353L248 351L247 350L249 350L249 349M402 376L400 374L396 374L398 374L397 374L398 374L395 374L397 376L399 379L398 378L401 378L401 379L399 379L399 378L401 378L399 377M442 378L440 379L441 376L442 375L441 372L443 373L444 373L448 372L449 372L452 373L452 375L451 376L450 373L452 374L453 371L453 370L454 370L452 369L452 368L451 369L453 369L453 367L454 370L456 371L458 370L458 370L457 372L457 370L459 369L460 371L463 370L465 368L468 368L469 370L470 367L471 369L473 371L474 369M659 382L659 379L659 380L660 379L660 379L660 378L661 376L661 374L664 371L664 372L667 372L667 373L667 371L665 369L672 367L674 365L676 366L677 363L678 359L680 358L677 358L678 358L677 356L678 357L677 359L676 362L677 362L677 362L679 360L681 358M145 386L145 386L145 385L145 383L145 384L146 383L149 381L150 378L151 378L149 378L149 377L150 374L149 374L150 372L151 370L152 367L154 367L153 366L154 365L150 366L150 366L149 366L151 366L150 365L151 364L154 364L155 362L155 361L156 361L156 359L156 359L158 358L157 358L158 357L157 358L157 357L157 357L159 357L161 355M151 384L149 384L155 383L151 385L150 385L150 382L147 383L146 378L148 379L147 378L147 374L146 372L145 371L145 370L148 367L145 366L143 363L144 361L143 360L144 357L144 355L145 354L147 354L142 350L141 351L142 348L142 348M320 400L319 402L321 400L321 399L321 399L321 400L322 398L320 396L319 397L319 397L317 397L314 397L314 398L315 399L315 400L314 403L314 402L314 403L314 405L313 406L314 406M56 413L55 412L56 412L56 410L59 407L59 408L61 406L61 406L61 405L60 405L60 406L61 405L62 403L60 400L61 402L60 404L61 406L60 405L58 404L58 408L59 408L60 407L60 405L62 404L64 405L63 402L65 402L65 401L64 401L66 402L64 399L65 398L67 396L67 397M54 425L55 426L58 427L58 427L59 424L62 421L64 419L64 422L64 423L65 424L68 425L74 422L75 424L77 424L78 422L79 423L80 422L81 422L84 421L83 422L85 426L84 425L87 424L89 423L89 424L89 424M68 438L70 437L71 439L71 436L71 437L70 436L72 437L68 440L71 440L75 440L77 437L74 437L76 437L77 439L75 440L78 439L79 439L81 440L81 442L81 441L79 444L79 441L80 444L82 448L81 449L85 450L83 446L83 448M226 404L227 403L229 403L230 402L229 400L229 398L229 398L230 397L231 399L229 400L227 403L229 407L233 407L236 407L233 409L236 410L237 408L237 400L239 399L239 401L240 395L243 392L242 390L245 387L247 388L244 390L244 393L244 396L249 391L248 390L251 393L252 393L254 391L254 391L258 390L260 388L259 388L260 388L260 387L263 384M268 419L270 418L272 416L272 415L271 412L271 410L272 409L272 407L273 406L274 407L273 407L276 406L277 405L279 405L282 404L283 404L282 402L280 401L280 398L279 397L281 397L284 397L285 399M298 416L297 421L297 417L296 418L297 417L299 415L301 413L301 413L301 414L304 414L306 415L307 416L309 411L308 410L309 411L310 411L310 412L310 413L310 411L312 411L312 410L313 409L314 409L315 407L317 408L320 410L321 411L319 410L317 408L321 409L323 406L325 407L326 410L326 412L327 415L329 416L330 415L330 417L332 420L333 418L335 419L339 419L341 419L339 418M491 420L494 418L491 414L488 412L486 414L485 415L485 412L485 414L483 412L486 412L486 411L484 413L485 411L482 412L487 415L487 415L487 414L488 416L487 417L486 417L489 416L488 415L485 418L487 418L489 417L490 416L488 417L484 417L483 419L482 420L483 421L483 426L484 424L484 421L481 423M562 414L561 415L562 413L559 414L560 414L559 414L559 416L559 414L560 414L559 416L559 414L558 416L559 413L557 415L560 416L560 415L560 417L561 416L558 414M600 421L601 420L602 419L604 416L605 415L606 413L608 413L607 414L608 413L610 412L613 412L613 411L613 408L614 408L615 405L616 404L616 402L619 400L617 398L617 398L616 398L618 396L617 395L618 391L618 391L616 389L616 386L615 386L615 385L618 384L617 385L618 385L620 383L622 380L623 378L625 374L626 371L626 369L623 367L623 366L621 364L620 361L623 360L622 361M599 432L599 432L598 432L594 431L594 427L597 427L595 428L595 427L597 425L600 425L596 424L597 421L598 416L597 415L595 411L595 408L597 410L595 408L595 407L595 410M362 438L363 438L366 438L365 433L369 438L373 436L374 434L377 433L377 434L376 428L376 426L375 426L377 427L375 427L382 426L381 426L381 426L379 428L374 429L374 428L373 428L370 429L369 430L370 426L371 427L375 428L376 428L373 428L374 429M367 455L370 457L368 458L370 460L372 465L374 465L375 466L374 466L373 464L373 462L372 461L370 456L372 458L372 457L375 457L372 457L373 455L374 453L374 454L371 455L373 453L371 453L371 452L370 450L367 449L369 450L371 450L370 448M255 459L258 458L259 457L259 456L259 457L256 457L256 457L257 457L256 456L258 458L258 455L258 457L255 455L255 454L255 453L257 448L256 445L256 446L255 448L256 445M560 446L563 444L564 443L564 443L563 444L565 444L566 445L568 443L567 445L569 445L571 446L570 446L571 446L572 444L574 443L574 441L576 440L574 440L574 441L577 443L577 442L578 443L579 443L579 444L579 443L582 443L585 443L586 442L589 440L591 440L593 439L593 437L596 436L595 438L598 439L601 439L598 439L602 438L602 437L602 436L602 432L603 431L602 430M667 452L666 451L667 449L667 447L668 447L669 446L667 445L667 446L670 447L670 446L669 445L671 444L674 443L673 442L673 442L674 442L674 441L675 439L674 439L674 440L673 439L672 440L668 440L667 439L668 436L666 434L667 434L668 432M198 479L198 479L200 480L199 482L201 481L202 484L203 484L202 484L201 482L204 483L205 483L208 480L212 480L211 478L210 478L212 477L214 476L215 478L215 476L216 477L216 477L218 475L219 474L220 473L222 473L222 471L225 470L226 468L227 467L226 469L228 469L229 470L230 471L228 470L229 466L227 464L232 461L229 463M27 475L27 476L26 478L29 479L31 477L30 477L29 475L29 473L29 473L29 473L30 475L31 474L28 475L32 476L30 475L28 475L26 477L26 480L27 480L26 481L26 479L26 480L25 480L24 480M38 492L38 489L40 487L43 486L45 485L50 488L48 488L48 489L46 493L44 492L43 490L47 487L48 486L49 484L51 482L50 481M473 464L475 465L476 466L477 465L477 465L475 466L476 465L478 467L480 468L481 471L481 475L479 475L482 475L481 475L482 475L487 477M493 460L492 459L490 458L491 459L488 458L487 462L487 458L486 458L485 458L485 457L491 457L493 457L488 459L488 459L485 459L487 456L491 457L492 455L494 451L496 447L495 448L496 444L493 441L492 439L494 438L497 439L495 441M703 485L703 481L702 481L701 481L699 481L699 481L699 478L698 477L698 476L697 477L696 478L696 477L695 478L697 478L699 480L699 479L698 478L697 481L697 480L698 478L697 476L694 473L693 474L694 473L697 469L695 470L695 474L697 472L695 471L697 472L700 473L701 473L701 473L702 474L702 473L703 472L704 472L701 474M399 491L402 490L404 490L408 491L406 491L409 487L410 485L413 485L408 481L408 481L409 481L409 477L410 480L409 480L414 480L416 476L422 474L424 473L422 471L422 472L422 476L420 475L421 471L423 466L423 466L420 465L420 469L422 469L421 469L423 469L427 468L427 467L427 463L423 461L423 460L423 460L425 458L428 458L427 460L429 459L429 459M594 497L594 495L597 493L596 495L594 493L596 492L597 493L596 494L596 494L598 492L599 489L600 486L601 489L602 489L602 488L606 489L604 488L605 488L606 489L609 488L611 491L610 491L613 491L615 491L615 491L614 491L614 487L615 488L617 487L616 487L617 488L617 489L621 488L619 486L620 485L621 487L623 487L625 488L626 488L626 487L626 486L630 484L632 488L633 488L632 486M665 500L665 500L664 498L667 500L671 504L670 506L671 505L673 503L671 502L669 501L669 499L668 494L666 494L665 493L664 492L661 494L661 496L660 493L661 492L661 492L662 493L663 489L664 491L665 493L667 493L668 490M547 500L546 499L545 499L543 497L543 496L545 494L546 493L545 494L547 494L548 492L553 490L557 489L559 488L559 487L559 488L559 491L559 492L563 490L563 490M295 510L296 511L298 507L297 507L297 507L299 505L301 507L299 506L298 504L298 505L296 504L296 502L297 504L294 505L298 504L301 503L302 502L303 499L303 499L304 498L306 498L305 498L306 500L307 499L303 499L303 498L303 497L305 499L309 496L310 495L309 496L312 498L308 498L310 498M248 517L249 515L249 514L253 513L251 514L251 513L251 514L249 517L252 517L252 517L251 516L252 518L248 516L247 515L248 515L251 516L250 517L252 518L251 517L253 517L251 515L251 515L253 518L255 516L255 515L252 512L252 508L254 506L253 505L252 501L253 500L253 498L253 501L257 500L256 500L257 500L258 501L257 501L258 501L260 502L263 505L261 508L260 510L260 513M274 513L273 511L275 507L272 511L271 512L274 510L274 512L276 515L282 519L283 518L285 517L281 514L281 514L280 516L280 515L280 515L281 515L283 514M392 509L390 508L392 508L395 509L398 507L400 507L400 505L402 504L406 504L405 502L406 500L406 499L404 499L407 498L408 493L408 492L411 487L415 487L419 487L421 484L420 484L422 482L421 482L423 482L425 479L425 478L426 477L423 477L425 477L428 479M411 512L407 511L405 512L404 512L404 513L400 513L400 511L399 512L396 509L396 508L396 507L396 507L395 508L396 509L395 510L395 509L396 509L396 512L397 510L397 509L398 509L398 506L396 508L394 508L395 505L393 504L394 505L398 503L399 500L401 500L402 499L401 497L399 495L397 495L398 493L395 490L394 490L395 490L395 491L398 491L396 489L396 488L393 489M450 522L451 524L451 523L451 523L450 517L452 518L453 521L454 520L455 520L457 519L457 521L463 519L463 519L465 519L471 517L471 516L472 514L469 515L472 516L474 514L480 513L482 513L484 515L486 517L486 517M187 520L188 520L190 518L189 518L189 515L189 515L188 515L186 516L187 519L186 521L185 518L185 517L185 516L186 516L187 516L188 516L186 517L186 517L187 518L186 517L185 516L186 515L187 517L185 518L186 517L186 518L186 519L184 520L188 520L189 519L191 520L191 520L190 520L191 517M358 530L362 528L363 529L364 525L364 523L364 525L365 525L366 524L366 522L368 522L369 519L372 517L372 515L374 515L375 519L374 521M626 519L626 519L625 518L624 517L624 514L621 511L620 511L621 512L621 511L619 516L616 519L615 518L615 521L614 519L611 519L609 516L606 518L604 516M547 521L550 521L550 521L548 520L548 520L549 520L553 518L551 518L549 519L551 522L552 522L551 520L550 522L549 519L549 518L552 518L554 521L558 522L559 525L560 523L554 520L558 519L559 520L560 519L561 517L562 515L565 513L569 508L566 508L565 506L563 505L559 508M459 535L460 533L460 534L460 532L462 532L463 531L460 533L458 535L456 535L457 533L458 533L457 534L457 535L456 533L455 532L455 532L456 530L455 531L454 529L453 527L451 525L453 524L454 522L451 520L453 520L452 520L452 518L451 518L450 515L451 512L448 509L444 511L443 512L444 511L441 511L441 510M1 534L-0 535L-1 535L2 537L3 537L2 536L3 534L5 536L6 533L8 533L10 531L12 531L10 535L12 534L13 534L13 534L10 536L13 536L12 534L11 536L13 534L13 534L13 535L14 538L15 539L17 539L17 536L15 536L14 538L17 539M34 545L35 543L35 543L36 542L38 542L40 542L40 545L39 545L40 545L42 543L44 542L45 541L44 540L42 541L44 540L46 539L45 542L44 545L46 545L44 542L46 542L48 542L47 541L49 542L52 544L55 542L58 540L59 539L61 539L63 538L61 539L62 539L61 539L61 539M117 537L115 538L116 537L116 536L117 537L113 539L113 541L113 541L113 538L115 536L116 540L116 538L116 536L114 533L113 533L115 533L116 531L119 531L120 529L123 530L122 527M562 541L562 542L564 542L565 544L567 543L569 544L568 543L566 541L567 542L568 542L568 541L568 543L569 541L569 540L568 539L572 537L571 537L573 540L575 540L575 540M688 536L689 537L692 537L692 537L694 536L694 537L695 539L694 538L694 538L695 537L697 536L700 536L702 539L705 541L705 539L705 540L707 537L708 536L709 534L709 535L711 536L711 538L713 537L717 536L718 537L719 537L721 537L721 534L722 534L722 534L725 534L725 534L727 533L728 536L728 535L729 535L732 536L734 538L734 539L735 540L736 539L740 540L742 540M704 547L704 547L703 547L705 546L704 545L704 544L707 540L705 540L703 539L705 536L704 536L705 535L706 533L706 533L708 535L707 534L707 533L710 531L711 533L710 533L707 530L706 525L704 523L705 522L707 524L708 523L705 523L705 521L708 520L710 520L708 519L706 517L706 516L708 514L709 512L708 513L712 513L712 511L711 511L712 508M681 549L679 551L675 551L674 549L672 549L673 550L673 550L672 548L674 547L675 547L677 547L676 546L678 546L680 550L683 551L685 549M468 558L465 554L468 554L468 551L469 549L468 549L466 545L468 548L464 548L461 546L461 547L457 549L458 552L456 546L458 543L463 543L465 540L465 539L462 535L462 536L461 539L464 534L463 531L461 529L457 528L460 530L457 530L458 528L462 528L465 528L466 529L464 524L464 521L466 518L468 514L472 514L470 513L470 507L468 507L466 505L469 506L470 506L473 506L470 506L468 503M64 566L63 561L65 561L67 560L67 559L69 556L70 559L69 558L70 556L69 553L69 555L68 552L68 548L68 546L68 544L67 543L67 542L63 544L64 542L66 542L64 542L64 542L64 543L67 542M123 575L125 573L122 574L124 577L123 576L126 574L126 573L129 574L128 573L127 574L127 576L126 574L125 574L125 574L125 575L126 576L126 576L127 575L127 574L128 575L128 575L129 574L130 572L131 570L130 570L131 572L133 572L131 572L130 573L130 571L132 571L134 572L134 572L137 571M422 570L422 572L424 571L423 573L422 570L421 569L423 565L423 566L425 570L424 573L424 574L424 574L425 571L425 573L422 570L421 568L422 569L424 566L424 566L425 570L424 566L423 564L420 563L416 562L416 563L418 562L415 563L415 565L412 563L411 561L413 560L415 560L415 559L417 560M252 587L253 585L253 584L253 583L254 582L252 581L252 581L254 581L257 581L259 579L258 576L259 575L259 576L259 577L259 574L257 573L258 575L258 574L259 574M276 598L276 597L278 594L279 593L282 594L282 592L283 590L285 592L284 590L285 590L286 587L288 586L290 585L289 586L289 584L288 583L291 584L292 582L293 582L293 581L295 579L295 576L295 575L296 575L296 574L299 571M176 594L175 588L173 586L170 583L169 584L168 585L169 582L169 583L165 583L164 580L162 581L163 581L163 580L162 575L166 577L168 578L171 575M513 584L513 580L514 579L514 576L514 577L513 576L514 574L514 573L516 572L516 570L516 569L517 566L517 564L516 567L520 568L521 568L522 566L523 566L524 566L523 566L524 565L528 563L528 563L529 562L528 563L530 562L529 561L529 559L528 559L529 557L531 553L532 550L534 552M578 586L577 586L580 584L579 584L577 584L577 587L578 591L579 589L578 590L579 586L578 587L576 588L574 589L573 590L573 588L572 585L571 582L568 582L571 582L572 583L570 580L569 581L564 584M645 600L646 602L646 601L648 599L651 599L652 596L651 592L650 589L649 589L648 591L652 591L652 592L654 589L653 587L653 585L657 584L656 585L657 582L658 582M428 612L429 611L424 611L424 612L423 612L425 611L426 610L426 607L425 606L425 602L427 601L426 599L425 598L428 600L429 599L429 600L432 601L432 603L428 600L429 601L428 602L428 601L428 600L430 598L429 599L427 599L426 598L423 596L420 596L421 594L418 591L416 594L418 591L420 591L418 587L417 584M428 628L427 629L430 632L433 634L432 634L430 632L431 631L432 629L435 629L435 629L435 630L437 633L439 634L440 636L443 636L446 639L448 641L451 641L452 640L452 638L452 636L454 637L455 641L453 641L453 645L453 646L455 646L456 645L459 648L458 651L460 650L461 651L461 648L461 647L462 648L462 646L464 649L465 647L467 646L467 647M433 627L435 626L436 625L437 623L440 619L439 618L437 615L438 617L436 618L437 615L439 613L439 612L440 611L438 609L444 608L444 607L443 606L443 608L447 607L449 605L450 605L452 605L454 602L455 602L457 602L457 600L458 600L459 599L458 598L459 597L459 595L457 595L458 596L458 599L459 596M520 636L520 633L519 631L521 629L519 626L517 624L516 623L518 623L517 620L515 617L515 615L518 614L519 613L518 610L519 605L522 603L524 605L525 606L529 604L533 604L535 604L532 600L532 601L530 599L530 596L530 597L532 599L532 602L529 602L525 600L525 600L524 598L526 596L530 597L528 594M248 641L249 640L249 636L248 635L248 635L251 635L252 633L250 633L250 631L249 632L250 631L252 627L253 629L252 629L252 629L250 625L252 625M335 650L337 652L338 651L339 648L341 647L344 645L346 643L347 642L348 641L348 640L349 639L351 637L351 636L354 636L355 635L356 635L356 634L357 634L358 635L358 633L360 632L360 631L360 630L360 627L359 628L359 628L364 626L365 625L366 623L365 624L366 626L367 626L367 628L367 627L369 624L372 622L373 620L376 619L376 618L380 615L380 615L381 615L383 615L385 615M432 653L429 655L432 654L436 654L440 652L439 652L437 651L436 651L437 649L437 650L436 650L435 648L438 646L438 651L435 648L436 649L434 649L433 652L434 653L433 648L434 646L435 643L435 642L437 640L436 639L440 638L442 638L444 639L441 640L443 639L444 639L444 638L443 638L441 637L440 638L443 638L444 638M616 673L618 671L617 673L616 671L617 669L623 668L618 669L617 671L620 668L624 669L625 668L626 672L626 670L626 667L629 668L632 670L630 669L630 670L631 671L632 671L633 671L636 674L634 674L634 677L635 676L637 675L640 673L640 675L641 673L640 675L640 670M104 684L106 687L106 686L110 686L114 683L115 684L117 685L119 684L119 682L122 683L121 683L121 681L122 683L122 680L127 685L126 683L127 682L127 681L128 677L127 680L127 682L128 680L126 680L127 673L126 675L129 676L128 676L127 675L129 677L127 678L131 676L132 677L133 678L134 679L141 681L141 679L143 676L141 674M283 681L283 676L284 675L290 675L291 674L293 675L295 669L294 668L294 665L293 665L289 666L288 670L286 668L288 666L286 665L286 666L287 663L285 663L285 661L287 660L287 661L285 662L286 662L284 661L284 662L283 662L279 662L276 663L277 658L276 659L276 659L278 661L278 661L276 655L276 656L277 654L280 657L282 654L284 651L282 650M368 689L371 688L372 688L375 687L377 690L379 689L383 688L379 686L384 686L381 685L381 687L383 688L384 686L385 684L384 688L387 692L388 690L391 686L388 685L392 689L395 690L395 687L396 690L397 692L397 688L398 692L397 691L395 694L394 694L398 692L397 690L399 688L399 686L402 691L405 690L406 689L406 686L406 688L409 689L412 687M454 701L452 699L450 698L450 696L449 695L452 696L452 695L454 694L458 693L458 687L459 685L456 685L460 684L457 683L459 681L460 681L461 678L466 674L467 672L467 670L466 670L465 671L467 669L469 669L466 667L469 665L469 663L470 662L472 660L475 657L477 655L478 655L482 651L482 652M422 695L421 698L422 700L425 701L424 700L423 699L421 700L423 700L418 698L414 697L418 694L417 693L417 694L419 694L419 691L419 689L420 689L419 689L419 685L418 686L415 686L418 683L417 680L421 680L421 680L422 681M514 698L515 695L515 695L516 697L518 698L519 697L522 697L522 696L523 694L523 695L522 694L522 695L518 693L520 691L519 690L519 689L520 688L519 689L522 690L523 690L525 689L526 689L531 687M578 714L577 713L579 712L583 714L586 713L587 714L588 716L588 714L587 713L588 711L588 712L586 711L589 711L589 710L590 707L590 706L592 707L593 710L590 711L592 709L595 710L592 715L591 713L591 712L593 713L594 713L596 711L595 706L595 703L595 704M23 722L24 720L26 719L27 720L28 719L29 720L29 723L28 721L25 720L24 722L27 722L27 720L28 719L30 716L30 715L31 714L33 715L34 714L36 714M712 721L712 722L715 722L714 722L717 721L717 722L717 721L718 723L719 724L720 723L722 723L724 724L725 724L725 721L725 720L726 721M515 259L517 259L519 258L520 256L521 256L522 257L522 257L522 257L523 257L522 256L522 253L524 254L524 256M722 340L724 340L725 340L725 338L728 335L727 334M518 47L520 48L520 46L520 46L519 43L522 43L523 42L525 42L526 39L527 39M509 211L510 210L510 210L509 208L509 207L510 207L512 206L512 204L512 207L513 207L512 206L511 206L512 208L514 206M466 353L466 353L468 350L467 348L470 347L472 344L470 342L469 341M651 504L651 503L652 502L652 501L653 500L655 498L658 497L657 497L658 495L658 493L660 491M726 167L727 164L728 163L727 160L728 158M692 561L691 560L690 560L691 559L691 560L690 557L691 558L692 557L693 557L691 556M456 94L458 94L460 95L460 90L460 92L464 92L465 90L466 92M413 118L412 117L415 118L415 119L415 117L414 116L416 117M532 581L531 579L531 579L532 579L528 578L529 578L531 579L534 579L539 579L540 578L540 579L543 579L542 580M482 566L483 563L483 562L484 558L487 558L488 554L488 552M434 255L435 256L435 253L439 250L441 250M66 228L67 228L68 228L67 228L70 226M458 367L458 366L459 368L460 367L461 365L463 365L465 364L467 363L469 363L467 365L467 364L468 361L470 360L470 357L471 356M39 706L39 705L40 707L40 706M462 144L461 147L463 147L463 147L464 144L463 143L464 143L463 143L465 143L463 144L464 145L467 144L466 144M341 336L341 337L342 339L341 338L341 339L341 338L341 337L341 338M619 65L619 63L617 62L616 60L619 61L619 60M241 410L241 412L242 410L245 407L245 406L245 403L246 401M39 613L42 612L42 611L42 611L42 608L42 608L41 608L39 610L39 610L39 610L38 612L40 610M514 537L514 537L515 536L516 535L517 535L515 533L516 533L516 532L518 531L517 530M677 131L679 130L681 130L682 129L683 132L684 132L685 134L684 132L682 133L682 133M688 248L686 249L687 249L686 248L687 249L689 248M737 78L738 77L738 76L737 74M708 657L707 657L708 656L709 653L713 653L712 652L710 652L709 653L711 654L710 652M254 525L253 522L253 523L252 525L254 525L252 525L252 524L252 524L252 522L252 520L252 520M406 145L406 147L404 148L404 151L404 150L405 150L406 149L406 149L407 149L409 148L408 148L409 147L410 150L410 150M383 559L383 558L380 560L380 559L380 557L382 556M576 289L576 289L575 287L573 286L574 286L573 287L574 288L576 288L574 289L574 288L573 286M724 673L725 674L726 674L725 675L726 674L727 678L727 677M526 149L529 148L529 146L531 144L531 143L532 142L532 142L534 143L536 142L536 141L537 141M395 568L397 568L397 566L398 566L398 566L397 567L397 565L398 565M131 286L134 285L134 288L133 288L133 289L134 288L137 289L136 288L140 287L141 289L141 290L141 289L142 290L143 289L143 290M352 397L355 398L357 396L354 397L355 396L357 393L357 392L357 393L359 392L360 390L363 392L361 392L362 392M201 145L200 144L202 143L202 144L203 143L206 145L206 143L205 143M695 157L696 154L693 152L693 153L693 153L695 154L697 154L697 151L697 150L697 150L699 149L697 148L696 147L697 147L697 146M525 323L525 321L524 321L525 319L526 320L527 319L528 319L527 317M309 110L309 108L310 108L311 107L310 104L311 105L313 103L315 103M337 614L339 612L337 611L336 610L335 609L335 608L336 607L335 607L333 606L334 605L335 604L334 604L334 604L332 603M670 718L669 715L666 716L666 712L667 711L668 713L668 711L669 710L670 709L670 709L669 708L668 707L668 707M384 312L383 311L381 309L382 309L383 310L383 309L380 307L380 306L378 305M214 476L213 477L212 476L214 473M352 53L353 50L352 50L353 48L354 47L355 45L358 46M633 718L632 717L634 719L635 718L635 719L635 720L634 720L634 720L634 719L635 717L635 719L636 720L637 720L638 721M455 546L455 544L454 545L454 543L456 540L456 539L457 540L457 540M205 562L206 559L207 558L208 558L209 556L210 556L208 556M672 646L671 646L673 645L673 645L674 645L674 645L674 645L675 644L674 646M511 69L512 67L515 67L514 68L512 67L512 68L511 67L512 68L514 66L514 64L514 65L514 63L513 63M645 12L647 11L648 11L648 13L648 13M215 382L218 380L218 379L219 378L219 378L217 379L220 376L222 374L223 374L224 373L224 373L227 373L229 374L231 371M130 484L132 484L130 481L129 482L131 482L132 483L133 482L133 481L135 478L135 477M234 302L236 302L235 299L232 299L233 298L232 294L230 293L230 293L231 291L231 290L229 288L230 288L229 285L227 286M59 447L59 446L59 448L59 447L62 444L61 443L62 440M578 417L579 418L579 418L579 417L581 414L584 413L586 410L586 409L587 408L586 407L587 405M280 431L280 430L280 430L282 429L283 427L283 427L284 426M433 618L434 618L435 613L438 609L439 607L440 605L441 603M302 411L301 412L302 412L300 411L301 410L304 412L302 413L301 415L300 415M308 355L310 354L310 353L309 352L309 353L307 354L306 354L306 352L305 350L304 350L304 348L306 348L306 347L306 347L307 347M681 158L680 157L679 157L680 156L681 157L683 160L683 159L683 160L682 161L682 163L683 163L684 163M494 88L499 90L500 90L502 90L502 87L500 88L502 88L506 88L505 88L504 90L504 89L504 91L503 92M66 628L65 628L65 627L66 628L64 628L65 627L65 625M663 376L663 376L663 377L663 374L666 374L666 375L668 373L669 372L670 370L670 370L671 369L672 370L675 371L675 371M595 157L595 156L595 157L595 158L596 156L594 157L594 157L597 156L599 154L599 152L599 152L599 154L597 154L598 153M42 172L41 172L41 174L40 175L41 176L41 176L40 177L38 179L38 178L39 180L39 183L39 183L38 183L38 182M416 492L415 490L415 490L415 487L417 487L419 485M78 721L81 721L84 720L84 717L86 715L87 714M353 624L355 620L356 619L357 621M392 126L391 126L393 125L391 123L392 123L392 120L391 122L390 120L392 122L392 122L393 122L393 122M148 566L148 565L149 562L149 560L150 560M266 668L266 668L267 669L267 667L267 665L266 662L264 662L268 659L268 659M732 280L733 278L735 277L737 276L737 275L737 274L735 273L736 271L738 270M45 170L46 166L47 166L50 169L51 169L49 169L50 167L51 167M435 279L434 277L435 278L438 276L438 274L441 273L442 275L443 274L445 272L446 271L448 271L449 269L451 272M433 166L433 166L431 167L431 165L431 165L431 164L432 166L431 166L433 166L433 166L432 165L431 163L431 165L432 164L433 162M659 387L660 389L659 388L660 388L660 386L663 386L665 383M216 585L217 585L221 587L220 585M677 89L676 89L677 90L679 91L679 93L679 93L682 92L684 91L685 93L683 92M413 686L414 684L412 684L411 681L411 680L413 680L413 682L415 682L415 684L417 685L419 682L417 684M214 291L215 291L216 292L214 289L215 287M19 233L19 230L19 229L19 228L23 228L23 226L24 226L27 226L25 228L24 229L23 228L25 230M101 151L101 152L103 153L105 153L105 152L107 152L108 152M432 284L433 285L432 286L433 282L434 281L434 279L432 277L432 277L432 277L430 276L430 276L432 277L431 276L429 275L428 273M563 528L564 526L564 525L565 525L564 524L563 519M217 607L215 609L216 611L216 612L215 611L213 612L212 613L215 612L217 613L216 611L216 611L218 610M661 665L661 665L660 668L660 668L659 667L658 665L659 666M74 423L73 423L71 423L73 423L71 425M431 120L438 120L440 118L438 117L439 117L442 118M146 682L146 681L148 680L147 676L148 675L146 673L146 673L145 672M743 625L741 626L742 625L742 625L743 626L745 626L746 626L746 629L749 630L749 628L750 629L752 627L753 626L756 625L754 625M678 326L678 327L679 327L680 325L678 325L677 324L679 323L678 322L677 321M741 56L743 58L742 58L744 56L747 57L748 57M290 558L291 557L292 557L291 556M98 377L98 378L97 377L99 378L99 377L99 377L98 375L98 372L96 372L94 373L93 371L95 371M329 297L329 297L331 295L331 295L332 294L334 293L334 293L335 294L336 290L337 288L338 286L339 287L340 285M74 564L77 562L78 560L78 560L80 557L78 555L75 555L78 555L79 554M537 465L536 465L534 467L534 467L534 468L535 466L537 466L536 467L538 468L536 468L536 468L539 469L541 468L541 466L542 466M688 449L689 450L689 449L688 449L687 447L687 447L688 450L688 452L689 453L689 455L689 454L690 455L691 455L692 457M290 33L292 32L290 30L289 29L291 28L291 28M193 167L192 166L194 167L192 165L192 166L193 165M221 690L219 691L220 691L218 690L219 690M210 305L209 306L208 305L208 306L210 307L210 306L209 305L208 307L209 306L210 306M538 488L537 488L538 489L539 489L539 488L543 486L543 487L544 486M674 628L675 627L677 625L677 623L676 620L676 618L678 618L679 616L680 615L679 613L679 612L678 614M570 148L571 147L571 151L573 151L574 150L572 150L573 151M718 164L716 165L716 162L718 162L717 162L719 165L719 166L720 165M162 499L162 502L160 502L160 501L158 499L158 498L162 498L163 496L162 499L161 499L162 499L164 500M197 259L197 258L198 258L198 257M188 232L189 229L190 229L189 226L191 225L190 226L189 226L191 226L192 225L192 224M376 335L373 336L373 334L373 335L372 333L371 334L372 334L372 333L372 331L371 333L372 334L371 336M27 142L27 141L28 140L28 140L32 141L33 140L33 138L33 142L32 144L33 144L33 143L34 141L34 140L36 140L37 139M635 487L634 485L635 481L637 480M293 568L293 567L295 567L296 565L297 566L297 566L297 564L299 566L299 567M101 92L101 92L100 90L98 91L98 86M617 401L616 402L615 400L615 399L615 400M97 620L95 621L97 621L96 621L99 619L101 620L102 620M516 106L514 106L514 105L514 102L515 103L514 102L514 102L515 101L519 102L518 102L520 99L521 98L522 97L520 97M535 27L537 27L538 26L536 27L537 27L536 26L536 24L536 22L534 22L534 23L534 22L535 20M522 240L522 240L523 241L521 240L520 240L521 239L521 238L520 236M287 596L286 599L287 599L288 599L287 598M79 663L81 664L79 664L78 663M214 646L214 646L214 643L213 645L215 644L215 643L216 642L219 640L219 639L221 639L222 638L221 638L223 640M437 319L439 317L439 316L443 317L445 318L444 317L444 316L445 316L443 315L444 316L441 315L443 315L444 315L446 318L448 318M273 556L276 556L277 554L277 551L279 550L280 547L282 546L284 546L286 545L287 545L288 543M101 49L103 47L104 46L107 46M458 128L456 127L455 127L458 125L457 124M111 624L112 624L113 622L114 624L116 624L119 622L121 623L122 623L125 622L128 623L128 623M386 266L385 265L382 264L384 265L383 263M35 438L35 438L36 438L38 437L39 435L38 436L39 435L39 435L40 431L42 432L43 432L45 433L46 433M31 720L31 721L31 721L31 720L35 719L35 719L39 721L38 720L40 719M323 553L323 552L325 550L324 550L325 550L324 549L324 548L325 549L327 550L324 548M336 326L336 327L337 326L340 328L340 328L342 329L342 328L343 328L343 326L343 328L343 327M680 622L680 621L682 620L683 619L684 619L686 616L687 616L688 617L692 616M641 145L641 144L643 143L643 143L644 143L646 140L648 139L649 138L648 138L648 138L647 137L649 139L651 138L650 134L651 134M381 704L381 704L381 703L382 702L383 701L385 699L384 697L384 696L385 696L386 697L387 696L386 697M380 705L381 706L380 705L383 707L385 707L387 708L391 707M283 175L284 177L285 177L284 178M247 224L248 225L251 224L253 223L252 223M503 578L505 577L503 578L502 577L504 577L506 576L505 579L505 578L504 578L501 576M225 108L225 106L226 102L228 102L229 101L230 101L232 99L233 97L232 95L235 93L235 93M546 507L547 506L546 505L550 505L554 504L555 504L554 505M635 403L636 402L635 399L635 399L635 399L634 398L635 396L635 393L635 393L639 394L639 392L639 389L643 387L643 387M146 679L144 678L144 679L142 680M540 585L541 586L542 586L545 585L548 585L549 584M418 213L420 211L421 213L423 216M117 59L117 59L116 59L117 58L118 57L119 59L120 57L122 56L121 57L121 58L122 59M223 355L222 353L224 353L222 352L222 356L223 358M126 366L126 367L127 367L127 366M162 690L163 688L163 688L163 687L161 688L161 689L163 689L164 688L163 689L165 688L165 691L166 692L167 693M310 202L311 202L311 203L309 201L310 200L311 200L313 198L313 197L314 196L314 195L314 194L315 195L316 194L319 194L317 193" stroke="#1cf01c" stroke-width="1.1" fill="none" stroke-linejoin="round"/><g fill="#fff" filter="url(#bl)"><circle cx="26" cy="30" r="2.2" opacity="0.6"/><circle cx="33" cy="59" r="2.2" opacity="0.6"/><circle cx="63" cy="74" r="2.2" opacity="0.6"/><circle cx="48" cy="102" r="2.2" opacity="0.6"/><circle cx="123" cy="40" r="2.2" opacity="0.6"/><circle cx="149" cy="24" r="2.2" opacity="0.6"/><circle cx="166" cy="20" r="2.2" opacity="0.6"/><circle cx="153" cy="69" r="2.2" opacity="0.6"/><circle cx="184" cy="73" r="2.2" opacity="0.6"/><circle cx="202" cy="71" r="2.2" opacity="0.6"/><circle cx="224" cy="72" r="2.2" opacity="0.6"/><circle cx="281" cy="67" r="2.2" opacity="0.6"/><circle cx="299" cy="73" r="2.2" opacity="0.6"/><circle cx="296" cy="100" r="2.2" opacity="0.6"/><circle cx="332" cy="104" r="2.2" opacity="0.6"/><circle cx="329" cy="20" r="2.2" opacity="0.6"/><circle cx="374" cy="20" r="2.2" opacity="0.6"/><circle cx="360" cy="44" r="2.2" opacity="0.6"/><circle cx="430" cy="90" r="2.2" opacity="0.6"/><circle cx="469" cy="55" r="2.2" opacity="0.6"/><circle cx="495" cy="47" r="2.2" opacity="0.6"/><circle cx="530" cy="60" r="2.2" opacity="0.6"/><circle cx="548" cy="58" r="2.2" opacity="0.6"/><circle cx="537" cy="89" r="2.2" opacity="0.6"/><circle cx="588" cy="106" r="2.2" opacity="0.6"/><circle cx="638" cy="90" r="2.2" opacity="0.6"/><circle cx="671" cy="81" r="2.2" opacity="0.6"/><circle cx="651" cy="108" r="2.2" opacity="0.6"/><circle cx="709" cy="112" r="2.2" opacity="0.6"/><circle cx="733" cy="130" r="2.2" opacity="0.6"/><circle cx="716" cy="144" r="2.2" opacity="0.6"/><circle cx="494" cy="123" r="2.2" opacity="0.6"/><circle cx="522" cy="130" r="2.2" opacity="0.6"/><circle cx="582" cy="139" r="2.2" opacity="0.6"/><circle cx="614" cy="139" r="2.2" opacity="0.6"/><circle cx="568" cy="151" r="2.2" opacity="0.6"/><circle cx="381" cy="151" r="2.2" opacity="0.6"/><circle cx="237" cy="155" r="2.2" opacity="0.6"/><circle cx="172" cy="177" r="2.2" opacity="0.6"/><circle cx="260" cy="181" r="2.2" opacity="0.6"/><circle cx="328" cy="183" r="2.2" opacity="0.6"/><circle cx="422" cy="186" r="2.2" opacity="0.6"/><circle cx="472" cy="185" r="2.2" opacity="0.6"/><circle cx="489" cy="188" r="2.2" opacity="0.6"/><circle cx="512" cy="191" r="2.2" opacity="0.6"/><circle cx="602" cy="180" r="2.2" opacity="0.6"/><circle cx="603" cy="193" r="2.2" opacity="0.6"/><circle cx="681" cy="157" r="2.2" opacity="0.6"/><circle cx="709" cy="156" r="2.2" opacity="0.6"/><circle cx="693" cy="219" r="2.2" opacity="0.6"/><circle cx="735" cy="234" r="2.2" opacity="0.6"/><circle cx="2" cy="229" r="2.2" opacity="0.6"/><circle cx="137" cy="246" r="2.2" opacity="0.6"/><circle cx="181" cy="244" r="2.2" opacity="0.6"/><circle cx="205" cy="247" r="2.2" opacity="0.6"/><circle cx="287" cy="222" r="2.2" opacity="0.6"/><circle cx="444" cy="210" r="2.2" opacity="0.6"/><circle cx="464" cy="250" r="2.2" opacity="0.6"/><circle cx="483" cy="251" r="2.2" opacity="0.6"/><circle cx="534" cy="238" r="2.2" opacity="0.6"/><circle cx="562" cy="254" r="2.2" opacity="0.6"/><circle cx="604" cy="237" r="2.2" opacity="0.6"/><circle cx="651" cy="256" r="2.2" opacity="0.6"/><circle cx="674" cy="250" r="2.2" opacity="0.6"/><circle cx="647" cy="266" r="2.2" opacity="0.6"/><circle cx="666" cy="274" r="2.2" opacity="0.6"/><circle cx="34" cy="261" r="2.2" opacity="0.6"/><circle cx="44" cy="284" r="2.2" opacity="0.6"/><circle cx="443" cy="264" r="2.2" opacity="0.6"/><circle cx="227" cy="295" r="2.2" opacity="0.6"/><circle cx="244" cy="297" r="2.2" opacity="0.6"/><circle cx="526" cy="294" r="2.2" opacity="0.6"/><circle cx="611" cy="292" r="2.2" opacity="0.6"/><circle cx="569" cy="305" r="2.2" opacity="0.6"/><circle cx="675" cy="320" r="2.2" opacity="0.6"/><circle cx="434" cy="317" r="2.2" opacity="0.6"/><circle cx="218" cy="331" r="2.2" opacity="0.6"/><circle cx="302" cy="319" r="2.2" opacity="0.6"/><circle cx="80" cy="334" r="2.2" opacity="0.6"/><circle cx="378" cy="336" r="2.2" opacity="0.6"/><circle cx="454" cy="338" r="2.2" opacity="0.6"/><circle cx="542" cy="345" r="2.2" opacity="0.6"/><circle cx="621" cy="350" r="2.2" opacity="0.6"/><circle cx="38" cy="357" r="2.2" opacity="0.6"/><circle cx="80" cy="359" r="2.2" opacity="0.6"/><circle cx="245" cy="348" r="2.2" opacity="0.6"/><circle cx="294" cy="357" r="2.2" opacity="0.6"/><circle cx="304" cy="351" r="2.2" opacity="0.6"/><circle cx="349" cy="339" r="2.2" opacity="0.6"/><circle cx="229" cy="371" r="2.2" opacity="0.6"/><circle cx="402" cy="376" r="2.2" opacity="0.6"/><circle cx="442" cy="378" r="2.2" opacity="0.6"/><circle cx="659" cy="382" r="2.2" opacity="0.6"/><circle cx="145" cy="386" r="2.2" opacity="0.6"/><circle cx="151" cy="384" r="2.2" opacity="0.6"/><circle cx="320" cy="400" r="2.2" opacity="0.6"/><circle cx="56" cy="413" r="2.2" opacity="0.6"/><circle cx="54" cy="425" r="2.2" opacity="0.6"/><circle cx="68" cy="438" r="2.2" opacity="0.6"/><circle cx="226" cy="404" r="2.2" opacity="0.6"/><circle cx="268" cy="419" r="2.2" opacity="0.6"/><circle cx="298" cy="416" r="2.2" opacity="0.6"/><circle cx="491" cy="420" r="2.2" opacity="0.6"/><circle cx="562" cy="414" r="2.2" opacity="0.6"/><circle cx="600" cy="421" r="2.2" opacity="0.6"/><circle cx="599" cy="432" r="2.2" opacity="0.6"/><circle cx="362" cy="438" r="2.2" opacity="0.6"/><circle cx="367" cy="455" r="2.2" opacity="0.6"/><circle cx="255" cy="459" r="2.2" opacity="0.6"/><circle cx="560" cy="446" r="2.2" opacity="0.6"/><circle cx="667" cy="452" r="2.2" opacity="0.6"/><circle cx="198" cy="479" r="2.2" opacity="0.6"/><circle cx="27" cy="475" r="2.2" opacity="0.6"/><circle cx="38" cy="492" r="2.2" opacity="0.6"/><circle cx="473" cy="464" r="2.2" opacity="0.6"/><circle cx="493" cy="460" r="2.2" opacity="0.6"/><circle cx="703" cy="485" r="2.2" opacity="0.6"/><circle cx="399" cy="491" r="2.2" opacity="0.6"/><circle cx="594" cy="497" r="2.2" opacity="0.6"/><circle cx="665" cy="500" r="2.2" opacity="0.6"/><circle cx="547" cy="500" r="2.2" opacity="0.6"/><circle cx="295" cy="510" r="2.2" opacity="0.6"/><circle cx="248" cy="517" r="2.2" opacity="0.6"/><circle cx="274" cy="513" r="2.2" opacity="0.6"/><circle cx="392" cy="509" r="2.2" opacity="0.6"/><circle cx="411" cy="512" r="2.2" opacity="0.6"/><circle cx="450" cy="522" r="2.2" opacity="0.6"/><circle cx="187" cy="520" r="2.2" opacity="0.6"/><circle cx="358" cy="530" r="2.2" opacity="0.6"/><circle cx="626" cy="519" r="2.2" opacity="0.6"/><circle cx="547" cy="521" r="2.2" opacity="0.6"/><circle cx="459" cy="535" r="2.2" opacity="0.6"/><circle cx="1" cy="534" r="2.2" opacity="0.6"/><circle cx="34" cy="545" r="2.2" opacity="0.6"/><circle cx="117" cy="537" r="2.2" opacity="0.6"/><circle cx="562" cy="541" r="2.2" opacity="0.6"/><circle cx="688" cy="536" r="2.2" opacity="0.6"/><circle cx="704" cy="547" r="2.2" opacity="0.6"/><circle cx="681" cy="549" r="2.2" opacity="0.6"/><circle cx="468" cy="558" r="2.2" opacity="0.6"/><circle cx="64" cy="566" r="2.2" opacity="0.6"/><circle cx="123" cy="575" r="2.2" opacity="0.6"/><circle cx="422" cy="570" r="2.2" opacity="0.6"/><circle cx="252" cy="587" r="2.2" opacity="0.6"/><circle cx="276" cy="598" r="2.2" opacity="0.6"/><circle cx="176" cy="594" r="2.2" opacity="0.6"/><circle cx="513" cy="584" r="2.2" opacity="0.6"/><circle cx="578" cy="586" r="2.2" opacity="0.6"/><circle cx="645" cy="600" r="2.2" opacity="0.6"/><circle cx="428" cy="612" r="2.2" opacity="0.6"/><circle cx="428" cy="628" r="2.2" opacity="0.6"/><circle cx="433" cy="627" r="2.2" opacity="0.6"/><circle cx="520" cy="636" r="2.2" opacity="0.6"/><circle cx="248" cy="641" r="2.2" opacity="0.6"/><circle cx="335" cy="650" r="2.2" opacity="0.6"/><circle cx="432" cy="653" r="2.2" opacity="0.6"/><circle cx="616" cy="673" r="2.2" opacity="0.6"/><circle cx="104" cy="684" r="2.2" opacity="0.6"/><circle cx="283" cy="681" r="2.2" opacity="0.6"/><circle cx="368" cy="689" r="2.2" opacity="0.6"/><circle cx="454" cy="701" r="2.2" opacity="0.6"/><circle cx="422" cy="695" r="2.2" opacity="0.6"/><circle cx="514" cy="698" r="2.2" opacity="0.6"/><circle cx="578" cy="714" r="2.2" opacity="0.6"/><circle cx="23" cy="722" r="2.2" opacity="0.6"/><circle cx="712" cy="721" r="2.2" opacity="0.6"/><circle cx="515" cy="259" r="2.2" opacity="0.6"/><circle cx="722" cy="340" r="2.2" opacity="0.6"/><circle cx="518" cy="47" r="2.2" opacity="0.6"/><circle cx="509" cy="211" r="2.2" opacity="0.6"/><circle cx="466" cy="353" r="2.2" opacity="0.6"/><circle cx="651" cy="504" r="2.2" opacity="0.6"/><circle cx="726" cy="167" r="2.2" opacity="0.6"/><circle cx="692" cy="561" r="2.2" opacity="0.6"/><circle cx="456" cy="94" r="2.2" opacity="0.6"/><circle cx="413" cy="118" r="2.2" opacity="0.6"/><circle cx="532" cy="581" r="2.2" opacity="0.6"/><circle cx="482" cy="566" r="2.2" opacity="0.6"/><circle cx="434" cy="255" r="2.2" opacity="0.6"/><circle cx="66" cy="228" r="2.2" opacity="0.6"/><circle cx="458" cy="367" r="2.2" opacity="0.6"/><circle cx="39" cy="706" r="2.2" opacity="0.6"/><circle cx="462" cy="144" r="2.2" opacity="0.6"/><circle cx="341" cy="336" r="2.2" opacity="0.6"/><circle cx="619" cy="65" r="2.2" opacity="0.6"/><circle cx="241" cy="410" r="2.2" opacity="0.6"/><circle cx="39" cy="613" r="2.2" opacity="0.6"/><circle cx="514" cy="537" r="2.2" opacity="0.6"/><circle cx="677" cy="131" r="2.2" opacity="0.6"/><circle cx="688" cy="248" r="2.2" opacity="0.6"/><circle cx="737" cy="78" r="2.2" opacity="0.6"/><circle cx="708" cy="657" r="2.2" opacity="0.6"/><circle cx="254" cy="525" r="2.2" opacity="0.6"/><circle cx="406" cy="145" r="2.2" opacity="0.6"/><circle cx="383" cy="559" r="2.2" opacity="0.6"/><circle cx="576" cy="289" r="2.2" opacity="0.6"/><circle cx="724" cy="673" r="2.2" opacity="0.6"/><circle cx="526" cy="149" r="2.2" opacity="0.6"/><circle cx="395" cy="568" r="2.2" opacity="0.6"/><circle cx="131" cy="286" r="2.2" opacity="0.6"/><circle cx="352" cy="397" r="2.2" opacity="0.6"/><circle cx="201" cy="145" r="2.2" opacity="0.6"/><circle cx="695" cy="157" r="2.2" opacity="0.6"/><circle cx="525" cy="323" r="2.2" opacity="0.6"/><circle cx="309" cy="110" r="2.2" opacity="0.6"/><circle cx="337" cy="614" r="2.2" opacity="0.6"/><circle cx="670" cy="718" r="2.2" opacity="0.6"/><circle cx="384" cy="312" r="2.2" opacity="0.6"/><circle cx="214" cy="476" r="2.2" opacity="0.6"/><circle cx="352" cy="53" r="2.2" opacity="0.6"/><circle cx="633" cy="718" r="2.2" opacity="0.6"/><circle cx="455" cy="546" r="2.2" opacity="0.6"/><circle cx="205" cy="562" r="2.2" opacity="0.6"/><circle cx="672" cy="646" r="2.2" opacity="0.6"/><circle cx="511" cy="69" r="2.2" opacity="0.6"/><circle cx="645" cy="12" r="2.2" opacity="0.6"/><circle cx="215" cy="382" r="2.2" opacity="0.6"/><circle cx="130" cy="484" r="2.2" opacity="0.6"/><circle cx="234" cy="302" r="2.2" opacity="0.6"/><circle cx="59" cy="447" r="2.2" opacity="0.6"/><circle cx="578" cy="417" r="2.2" opacity="0.6"/><circle cx="280" cy="431" r="2.2" opacity="0.6"/><circle cx="433" cy="618" r="2.2" opacity="0.6"/><circle cx="302" cy="411" r="2.2" opacity="0.6"/><circle cx="308" cy="355" r="2.2" opacity="0.6"/><circle cx="681" cy="158" r="2.2" opacity="0.6"/><circle cx="494" cy="88" r="2.2" opacity="0.6"/><circle cx="66" cy="628" r="2.2" opacity="0.6"/><circle cx="663" cy="376" r="2.2" opacity="0.6"/><circle cx="595" cy="157" r="2.2" opacity="0.6"/><circle cx="42" cy="172" r="2.2" opacity="0.6"/><circle cx="416" cy="492" r="2.2" opacity="0.6"/><circle cx="78" cy="721" r="2.2" opacity="0.6"/><circle cx="353" cy="624" r="2.2" opacity="0.6"/><circle cx="392" cy="126" r="2.2" opacity="0.6"/><circle cx="148" cy="566" r="2.2" opacity="0.6"/><circle cx="266" cy="668" r="2.2" opacity="0.6"/><circle cx="732" cy="280" r="2.2" opacity="0.6"/><circle cx="45" cy="170" r="2.2" opacity="0.6"/><circle cx="435" cy="279" r="2.2" opacity="0.6"/><circle cx="433" cy="166" r="2.2" opacity="0.6"/><circle cx="659" cy="387" r="2.2" opacity="0.6"/><circle cx="216" cy="585" r="2.2" opacity="0.6"/><circle cx="677" cy="89" r="2.2" opacity="0.6"/><circle cx="413" cy="686" r="2.2" opacity="0.6"/><circle cx="214" cy="291" r="2.2" opacity="0.6"/><circle cx="19" cy="233" r="2.2" opacity="0.6"/><circle cx="101" cy="151" r="2.2" opacity="0.6"/><circle cx="432" cy="284" r="2.2" opacity="0.6"/><circle cx="563" cy="528" r="2.2" opacity="0.6"/><circle cx="217" cy="607" r="2.2" opacity="0.6"/><circle cx="661" cy="665" r="2.2" opacity="0.6"/><circle cx="74" cy="423" r="2.2" opacity="0.6"/><circle cx="431" cy="120" r="2.2" opacity="0.6"/><circle cx="146" cy="682" r="2.2" opacity="0.6"/><circle cx="743" cy="625" r="2.2" opacity="0.6"/><circle cx="678" cy="326" r="2.2" opacity="0.6"/><circle cx="741" cy="56" r="2.2" opacity="0.6"/><circle cx="290" cy="558" r="2.2" opacity="0.6"/><circle cx="98" cy="377" r="2.2" opacity="0.6"/><circle cx="329" cy="297" r="2.2" opacity="0.6"/><circle cx="74" cy="564" r="2.2" opacity="0.6"/><circle cx="537" cy="465" r="2.2" opacity="0.6"/><circle cx="688" cy="449" r="2.2" opacity="0.6"/><circle cx="290" cy="33" r="2.2" opacity="0.6"/><circle cx="193" cy="167" r="2.2" opacity="0.6"/><circle cx="221" cy="690" r="2.2" opacity="0.6"/><circle cx="210" cy="305" r="2.2" opacity="0.6"/><circle cx="538" cy="488" r="2.2" opacity="0.6"/><circle cx="674" cy="628" r="2.2" opacity="0.6"/><circle cx="570" cy="148" r="2.2" opacity="0.6"/><circle cx="718" cy="164" r="2.2" opacity="0.6"/><circle cx="162" cy="499" r="2.2" opacity="0.6"/><circle cx="197" cy="259" r="2.2" opacity="0.6"/><circle cx="188" cy="232" r="2.2" opacity="0.6"/><circle cx="376" cy="335" r="2.2" opacity="0.6"/><circle cx="27" cy="142" r="2.2" opacity="0.6"/><circle cx="635" cy="487" r="2.2" opacity="0.6"/><circle cx="293" cy="568" r="2.2" opacity="0.6"/><circle cx="101" cy="92" r="2.2" opacity="0.6"/><circle cx="617" cy="401" r="2.2" opacity="0.6"/><circle cx="97" cy="620" r="2.2" opacity="0.6"/><circle cx="516" cy="106" r="2.2" opacity="0.6"/><circle cx="535" cy="27" r="2.2" opacity="0.6"/><circle cx="522" cy="240" r="2.2" opacity="0.6"/><circle cx="287" cy="596" r="2.2" opacity="0.6"/><circle cx="79" cy="663" r="2.2" opacity="0.6"/><circle cx="214" cy="646" r="2.2" opacity="0.6"/><circle cx="437" cy="319" r="2.2" opacity="0.6"/><circle cx="273" cy="556" r="2.2" opacity="0.6"/><circle cx="101" cy="49" r="2.2" opacity="0.6"/><circle cx="458" cy="128" r="2.2" opacity="0.6"/><circle cx="111" cy="624" r="2.2" opacity="0.6"/><circle cx="386" cy="266" r="2.2" opacity="0.6"/><circle cx="35" cy="438" r="2.2" opacity="0.6"/><circle cx="31" cy="720" r="2.2" opacity="0.6"/><circle cx="323" cy="553" r="2.2" opacity="0.6"/><circle cx="336" cy="326" r="2.2" opacity="0.6"/><circle cx="680" cy="622" r="2.2" opacity="0.6"/><circle cx="641" cy="145" r="2.2" opacity="0.6"/><circle cx="381" cy="704" r="2.2" opacity="0.6"/><circle cx="380" cy="705" r="2.2" opacity="0.6"/><circle cx="283" cy="175" r="2.2" opacity="0.6"/><circle cx="247" cy="224" r="2.2" opacity="0.6"/><circle cx="503" cy="578" r="2.2" opacity="0.6"/><circle cx="225" cy="108" r="2.2" opacity="0.6"/><circle cx="546" cy="507" r="2.2" opacity="0.6"/><circle cx="635" cy="403" r="2.2" opacity="0.6"/><circle cx="146" cy="679" r="2.2" opacity="0.6"/><circle cx="540" cy="585" r="2.2" opacity="0.6"/><circle cx="418" cy="213" r="2.2" opacity="0.6"/><circle cx="117" cy="59" r="2.2" opacity="0.6"/><circle cx="223" cy="355" r="2.2" opacity="0.6"/><circle cx="126" cy="366" r="2.2" opacity="0.6"/><circle cx="162" cy="690" r="2.2" opacity="0.6"/><circle cx="310" cy="202" r="2.2" opacity="0.6"/></g><g fill="#e4e46a" font-family="Liberation Sans" font-size="10.2" letter-spacing="0.2"><text x="25" y="26">120.2</text><text x="33" y="55">42.8</text><text x="62" y="69">137.6</text><text x="43" y="99">133.4</text><text x="118" y="37">120.5</text><text x="143" y="18">144.2</text><text x="163" y="15">201.2</text><text x="148" y="69">122.8</text><text x="180" y="67">99.1</text><text x="195" y="67">96.4</text><text x="220" y="66">96.3</text><text x="275" y="62">65.9</text><text x="298" y="68">182.4</text><text x="289" y="97">80.1</text><text x="332" y="98">142.4</text><text x="330" y="19">98.8</text><text x="368" y="19">67.2</text><text x="360" y="40">100.9</text><text x="430" y="87">119.9</text><text x="462" y="53">116.9</text><text x="488" y="44">134.9</text><text x="528" y="55">73.5</text><text x="540" y="55">139.8</text><text x="535" y="86">179.5</text><text x="583" y="103">78.5</text><text x="638" y="87">84.5</text><text x="670" y="78">255.4</text><text x="643" y="107">255.0</text><text x="710" y="110">87.6</text><text x="725" y="130">151.4</text><text x="712" y="142">97.3</text><text x="495" y="120">86.9</text><text x="520" y="124">101.5</text><text x="575" y="136">82.9</text><text x="610" y="136">71.5</text><text x="565" y="150">80.0</text><text x="375" y="151">250.7</text><text x="230" y="155">239.8</text><text x="171" y="175">59.1</text><text x="254" y="178">84.3</text><text x="322" y="178">80.4</text><text x="420" y="186">141.3</text><text x="466" y="184">184.1</text><text x="488" y="183">132.0</text><text x="510" y="187">69.8</text><text x="602" y="180">65.6</text><text x="602" y="193">147.2</text><text x="678" y="157">196.8</text><text x="705" y="155">256.8</text><text x="693" y="216">218.3</text><text x="732" y="233">108.1</text><text x="3" y="223">62.4</text><text x="130" y="246">59.8</text><text x="180" y="244">63.7</text><text x="205" y="246">134.1</text><text x="287" y="222">44.2</text><text x="440" y="211">76.5</text><text x="465" y="247">124.2</text><text x="483" y="247">55.2</text><text x="529" y="233">104.2</text><text x="558" y="249">137.0</text><text x="600" y="235">73.5</text><text x="648" y="251">200.7</text><text x="675" y="244">103.0</text><text x="647" y="266">123.2</text><text x="660" y="274">70.4</text><text x="26" y="260">121.7</text><text x="40" y="285">90.6</text><text x="443" y="262">259.2</text><text x="218" y="296">126.4</text><text x="235" y="296">84.4</text><text x="525" y="293">98.4</text><text x="612" y="292">103.6</text><text x="568" y="306">70.0</text><text x="668" y="315">172.7</text><text x="430" y="314">53.0</text><text x="218" y="330">138.6</text><text x="298" y="320">176.7</text><text x="77" y="331">124.5</text><text x="378" y="330">113.6</text><text x="450" y="335">93.5</text><text x="538" y="341">140.7</text><text x="620" y="348">133.3</text><text x="33" y="356">55.5</text><text x="80" y="358">49.9</text><text x="240" y="347">74.0</text><text x="287" y="351">106.5</text><text x="298" y="351">125.1</text><text x="342" y="340">130.9</text><text x="225" y="370">75.0</text><text x="402" y="375">83.6</text><text x="441" y="375">139.8</text><text x="655" y="378">93.8</text><text x="138" y="383">130.2</text><text x="150" y="383">226.6</text><text x="318" y="395">159.4</text><text x="49" y="410">169.8</text><text x="47" y="422">31.6</text><text x="68" y="438">69.0</text><text x="223" y="401">128.3</text><text x="266" y="416">208.1</text><text x="296" y="416">113.1</text><text x="486" y="417">103.6</text><text x="562" y="412">135.0</text><text x="598" y="416">126.0</text><text x="598" y="428">105.9</text><text x="355" y="437">175.2</text><text x="358" y="451">67.8</text><text x="254" y="456">182.3</text><text x="552" y="442">155.0</text><text x="667" y="451">163.6</text><text x="190" y="476">91.3</text><text x="22" y="473">141.7</text><text x="37" y="487">130.0</text><text x="470" y="463">122.1</text><text x="490" y="460">165.2</text><text x="703" y="481">76.2</text><text x="395" y="485">166.8</text><text x="590" y="492">255.1</text><text x="664" y="497">201.3</text><text x="543" y="495">85.8</text><text x="287" y="504">78.1</text><text x="240" y="511">163.1</text><text x="266" y="511">71.0</text><text x="386" y="509">138.0</text><text x="406" y="507">156.5</text><text x="450" y="517">91.4</text><text x="187" y="520">231.6</text><text x="357" y="525">240.5</text><text x="620" y="518">183.7</text><text x="548" y="518">48.6</text><text x="451" y="535">91.9</text><text x="-4" y="529">114.6</text><text x="28" y="542">15.9</text><text x="112" y="533">192.1</text><text x="556" y="536">91.7</text><text x="688" y="532">94.3</text><text x="698" y="544">117.5</text><text x="680" y="547">149.8</text><text x="462" y="557">61.6</text><text x="63" y="567">70.0</text><text x="116" y="573">119.0</text><text x="415" y="569">235.8</text><text x="250" y="583">85.6</text><text x="275" y="599">125.9</text><text x="174" y="590">86.4</text><text x="510" y="579">44.7</text><text x="575" y="583">123.5</text><text x="640" y="594">90.7</text><text x="422" y="613">74.7</text><text x="425" y="626">42.5</text><text x="431" y="622">165.8</text><text x="512" y="632">85.6</text><text x="240" y="638">73.3</text><text x="335" y="647">235.6</text><text x="430" y="650">136.4</text><text x="612" y="669">83.3</text><text x="105" y="679">97.2</text><text x="282" y="681">117.0</text><text x="362" y="688">288.4</text><text x="450" y="695">102.4</text><text x="417" y="694">81.1</text><text x="513" y="694">132.7</text><text x="570" y="710">152.2</text><text x="18" y="722">154.6</text><text x="708" y="718">19.5</text></g><g fill="#e8e870" font-family="Liberation Sans" font-size="6" font-weight="bold"><text x="509" y="256">N/A</text><text x="716" y="337">N/A</text><text x="512" y="44">N/A</text><text x="503" y="208">N/A</text><text x="460" y="350">N/A</text><text x="645" y="501">N/A</text><text x="720" y="164">N/A</text><text x="686" y="558">N/A</text><text x="450" y="91">N/A</text><text x="407" y="115">N/A</text><text x="526" y="578">N/A</text><text x="476" y="563">N/A</text><text x="428" y="252">N/A</text><text x="60" y="225">N/A</text><text x="452" y="364">N/A</text><text x="33" y="703">N/A</text><text x="456" y="141">N/A</text><text x="335" y="333">N/A</text><text x="613" y="62">N/A</text><text x="235" y="407">N/A</text><text x="33" y="610">N/A</text><text x="508" y="534">N/A</text><text x="671" y="128">N/A</text><text x="682" y="245">N/A</text><text x="731" y="75">N/A</text><text x="702" y="654">N/A</text><text x="248" y="522">N/A</text><text x="400" y="142">N/A</text><text x="377" y="556">N/A</text><text x="570" y="286">N/A</text><text x="718" y="670">N/A</text><text x="520" y="146">N/A</text><text x="389" y="565">N/A</text><text x="125" y="283">N/A</text><text x="346" y="394">N/A</text><text x="195" y="142">N/A</text><text x="689" y="154">N/A</text><text x="519" y="320">N/A</text><text x="303" y="107">N/A</text><text x="331" y="611">N/A</text><text x="664" y="715">N/A</text><text x="378" y="309">N/A</text><text x="208" y="473">N/A</text><text x="346" y="50">N/A</text><text x="627" y="715">N/A</text><text x="449" y="543">N/A</text><text x="199" y="559">N/A</text><text x="666" y="643">N/A</text><text x="505" y="66">N/A</text><text x="639" y="9">N/A</text><text x="209" y="379">N/A</text><text x="124" y="481">N/A</text><text x="228" y="299">N/A</text><text x="53" y="444">N/A</text><text x="572" y="414">N/A</text><text x="274" y="428">N/A</text><text x="427" y="615">N/A</text><text x="296" y="408">N/A</text><text x="302" y="352">N/A</text><text x="675" y="155">N/A</text><text x="488" y="85">N/A</text><text x="60" y="625">N/A</text><text x="657" y="373">N/A</text><text x="589" y="154">N/A</text><text x="36" y="169">N/A</text><text x="410" y="489">N/A</text><text x="72" y="718">N/A</text><text x="347" y="621">N/A</text><text x="386" y="123">N/A</text><text x="142" y="563">N/A</text><text x="260" y="665">N/A</text><text x="726" y="277">N/A</text><text x="39" y="167">N/A</text><text x="429" y="276">N/A</text><text x="427" y="163">N/A</text><text x="653" y="384">N/A</text><text x="210" y="582">N/A</text><text x="671" y="86">N/A</text><text x="407" y="683">N/A</text><text x="208" y="288">N/A</text><text x="13" y="230">N/A</text><text x="95" y="148">N/A</text><text x="426" y="281">N/A</text><text x="557" y="525">N/A</text><text x="211" y="604">N/A</text><text x="655" y="662">N/A</text><text x="68" y="420">N/A</text><text x="425" y="117">N/A</text><text x="140" y="679">N/A</text><text x="737" y="622">N/A</text><text x="672" y="323">N/A</text><text x="735" y="53">N/A</text><text x="284" y="555">N/A</text><text x="92" y="374">N/A</text><text x="323" y="294">N/A</text><text x="68" y="561">N/A</text><text x="531" y="462">N/A</text><text x="682" y="446">N/A</text><text x="284" y="30">N/A</text><text x="187" y="164">N/A</text><text x="215" y="687">N/A</text><text x="204" y="302">N/A</text><text x="532" y="485">N/A</text><text x="668" y="625">N/A</text><text x="564" y="145">N/A</text><text x="712" y="161">N/A</text><text x="156" y="496">N/A</text><text x="191" y="256">N/A</text><text x="182" y="229">N/A</text><text x="370" y="332">N/A</text><text x="21" y="139">N/A</text><text x="629" y="484">N/A</text><text x="287" y="565">N/A</text><text x="95" y="89">N/A</text><text x="611" y="398">N/A</text><text x="91" y="617">N/A</text><text x="510" y="103">N/A</text><text x="529" y="24">N/A</text><text x="516" y="237">N/A</text><text x="281" y="593">N/A</text><text x="73" y="660">N/A</text><text x="208" y="643">N/A</text><text x="431" y="316">N/A</text><text x="267" y="553">N/A</text><text x="95" y="46">N/A</text><text x="452" y="125">N/A</text><text x="105" y="621">N/A</text><text x="380" y="263">N/A</text><text x="29" y="435">N/A</text><text x="25" y="717">N/A</text><text x="317" y="550">N/A</text><text x="330" y="323">N/A</text><text x="674" y="619">N/A</text><text x="635" y="142">N/A</text><text x="375" y="701">N/A</text><text x="374" y="702">N/A</text><text x="277" y="172">N/A</text><text x="241" y="221">N/A</text><text x="497" y="575">N/A</text><text x="219" y="105">N/A</text><text x="540" y="504">N/A</text><text x="629" y="400">N/A</text><text x="140" y="676">N/A</text><text x="534" y="582">N/A</text><text x="412" y="210">N/A</text><text x="111" y="56">N/A</text><text x="217" y="352">N/A</text><text x="120" y="363">N/A</text><text x="156" y="687">N/A</text><text x="304" y="199">N/A</text></g></svg></div><div class="a" style="left:1225px;top:83px;width:2px;height:951px;background:#0099ff"></div><div class="a" style="left:0;top:831px;width:1226px;height:2px;background:#0099ff"></div><div class="a" style="left:1226px;top:825px;width:1682px;height:2px;background:#0099ff"></div><div class="a" style="left:944px;top:430px;width:21px;height:22px;background:rgba(137,135,180,0.54);border-radius:4px 0 0 4px"></div><svg class="a" style="left:944px;top:430px" width="22" height="22"><path d="M4.5 8.5L10 14L15.5 8.5" stroke="#fff" stroke-width="1.6" fill="none"/></svg><div class="a" style="left:965px;top:420px;width:248px;height:399px;background:rgba(137,135,180,0.54);border-radius:3px"></div><div class="t" style="left:974px;top:434.0px;font-size:21.5px;color:#f4f4f4;letter-spacing:0.6px;">Scale : ×</div><div class="t" style="left:1075px;top:434.0px;font-size:21.5px;color:#f4f4f4;letter-spacing:0.6px">1.3</div><div class="t" style="left:974px;top:469.4px;font-size:21.5px;color:#f4f4f4;letter-spacing:0.6px;">FPS :</div><div class="t" style="left:1075px;top:469.4px;font-size:21.5px;color:#f4f4f4;letter-spacing:0.6px">10.0</div><div class="t" style="left:974px;top:504.9px;font-size:21.5px;color:#f4f4f4;letter-spacing:0.6px;">Width :</div><div class="t" style="left:1075px;top:504.9px;font-size:21.5px;color:#f4f4f4;letter-spacing:0.6px">655.8</div><div class="t" style="left:1155px;top:504.9px;font-size:21.5px;color:#f4f4f4;letter-spacing:1.4px">[µm]</div><div class="t" style="left:974px;top:540.4px;font-size:21.5px;color:#f4f4f4;letter-spacing:0.6px;">Height :</div><div class="t" style="left:1075px;top:540.4px;font-size:21.5px;color:#f4f4f4;letter-spacing:0.6px">840.0</div><div class="t" style="left:1155px;top:540.4px;font-size:21.5px;color:#f4f4f4;letter-spacing:1.4px">[µm]</div><div class="t" style="left:974px;top:575.8px;font-size:21.5px;color:#f4f4f4;letter-spacing:0.6px;">Drift X :</div><div class="t" style="left:1075px;top:575.8px;font-size:21.5px;color:#f4f4f4;letter-spacing:0.6px">-0.137</div><div class="t" style="left:1155px;top:575.8px;font-size:21.5px;color:#f4f4f4;letter-spacing:1.4px">[µm]</div><div class="t" style="left:974px;top:611.2px;font-size:21.5px;color:#f4f4f4;letter-spacing:0.6px;">Drift Y :</div><div class="t" style="left:1075px;top:611.2px;font-size:21.5px;color:#f4f4f4;letter-spacing:0.6px">0.314</div><div class="t" style="left:1155px;top:611.2px;font-size:21.5px;color:#f4f4f4;letter-spacing:1.4px">[µm]</div><div class="t" style="left:974px;top:646.7px;font-size:21.5px;color:#f4f4f4;letter-spacing:0.6px;">Count :</div><div class="t" style="left:1075px;top:646.7px;font-size:21.5px;color:#f4f4f4;letter-spacing:0.6px">452</div><div class="t" style="left:974px;top:682.2px;font-size:21.5px;color:#f4f4f4;letter-spacing:0.6px;font-weight:bold;">(Average)</div><div class="t" style="left:974px;top:717.6px;font-size:21.5px;color:#f4f4f4;letter-spacing:0.6px;">Drift X :</div><div class="t" style="left:1075px;top:717.6px;font-size:21.5px;color:#f4f4f4;letter-spacing:0.6px">-0.199</div><div class="t" style="left:1155px;top:717.6px;font-size:21.5px;color:#f4f4f4;letter-spacing:1.4px">[µm]</div><div class="t" style="left:974px;top:753.0px;font-size:21.5px;color:#f4f4f4;letter-spacing:0.6px;">Drift Y :</div><div class="t" style="left:1075px;top:753.0px;font-size:21.5px;color:#f4f4f4;letter-spacing:0.6px">0.193</div><div class="t" style="left:1155px;top:753.0px;font-size:21.5px;color:#f4f4f4;letter-spacing:1.4px">[µm]</div><div class="t" style="left:974px;top:788.5px;font-size:21.5px;color:#f4f4f4;letter-spacing:0.6px;">Count :</div><div class="t" style="left:1075px;top:788.5px;font-size:21.5px;color:#f4f4f4;letter-spacing:0.6px">446.3</div><div class="a" style="left:22px;top:774px;width:670px;height:36px;background:rgba(0,0,0,0.5);border:1.5px solid #f0f0f0;border-radius:4px"></div><svg class="a" style="left:0;top:0" width="700" height="830"><path d="M31 792H606M31.0 787V797M88.5 787V797M146.0 787V797M203.5 787V797M261.0 787V797M318.5 787V797M376.0 787V797M433.5 787V797M491.0 787V797M548.5 787V797M606.0 787V797" stroke="#eee" stroke-width="2" fill="none"/></svg><div class="t" style="left:614px;top:783px;font-size:20px;font-weight:bold;color:#fff">500 µm</div><div class="a" style="left:1237px;top:93px;width:310px;height:30px;background:#fff;border:1px solid #999"></div><div class="a" style="left:1516px;top:94px;width:30px;height:28px;background:#0099ff"></div><div class="a" style="left:1526px;top:105px;width:0;height:0;border-left:5px solid transparent;border-right:5px solid transparent;border-top:5px solid #fff"></div><div class="t" style="left:1243px;top:99px;font-size:20px;color:#111;letter-spacing:-0.2px">Concentration / Size</div><div class="t" style="left:1570px;top:99.5px;font-size:20px;color:#111;letter-spacing:-0.6px">Font Size :</div><div class="a" style="left:1667px;top:93px;width:120px;height:30px;background:#fff;border:1px solid #999"></div><div class="a" style="left:1756px;top:94px;width:30px;height:28px;background:#0099ff"></div><div class="a" style="left:1766px;top:105px;width:0;height:0;border-left:5px solid transparent;border-right:5px solid transparent;border-top:5px solid #fff"></div><div class="t" style="left:1673px;top:99px;font-size:20px;color:#111;letter-spacing:-0.4px">Small</div><div class="btn" style="left:1797px;top:93px;width:100px;height:30px;background:#0099ff;border:1px solid #806e6e;line-height:29px;font-size:20px;letter-spacing:-0.3px">Reset</div><div class="a" style="left:1237px;top:134px;width:660px;height:680px;background:#fff"><svg width="660" height="680" style="position:absolute;left:0;top:0"><path d="M91.6 25.3V620.7M102.7 25.3V620.7M113.7 25.3V620.7M124.8 25.3V620.7M135.9 25.3V620.7M147.0 25.3V620.7M158.1 25.3V620.7M169.1 25.3V620.7M180.2 25.3V620.7M191.3 25.3V620.7M202.4 25.3V620.7M213.5 25.3V620.7M224.5 25.3V620.7M235.6 25.3V620.7M246.7 25.3V620.7M257.8 25.3V620.7M268.9 25.3V620.7M279.9 25.3V620.7M291.0 25.3V620.7M302.1 25.3V620.7M313.2 25.3V620.7M324.3 25.3V620.7M335.3 25.3V620.7M346.4 25.3V620.7M357.5 25.3V620.7M368.6 25.3V620.7M379.7 25.3V620.7M390.7 25.3V620.7M401.8 25.3V620.7M412.9 25.3V620.7M424.0 25.3V620.7M435.1 25.3V620.7M446.1 25.3V620.7M457.2 25.3V620.7M468.3 25.3V620.7M479.4 25.3V620.7M490.5 25.3V620.7M501.5 25.3V620.7M512.6 25.3V620.7M523.7 25.3V620.7M534.8 25.3V620.7M545.9 25.3V620.7M556.9 25.3V620.7M568.0 25.3V620.7M579.1 25.3V620.7M590.2 25.3V620.7M601.3 25.3V620.7M612.3 25.3V620.7M623.4 25.3V620.7M80.5 561.2H634.5M80.5 501.6H634.5M80.5 442.1H634.5M80.5 382.5H634.5M80.5 323.0H634.5M80.5 263.5H634.5M80.5 203.9H634.5M80.5 144.4H634.5M80.5 84.8H634.5" stroke="#eeeeee" stroke-width="1" fill="none"/><g fill="#add8e6" stroke="#333" stroke-width="1"><rect x="97.1" y="611.8" width="5.5" height="8.9"/><rect x="102.7" y="588.0" width="5.5" height="32.7"/><rect x="108.2" y="528.4" width="5.5" height="92.3"/><rect x="113.7" y="403.4" width="5.5" height="217.3"/><rect x="119.3" y="323.0" width="5.5" height="297.7"/><rect x="124.8" y="147.4" width="5.5" height="473.3"/><rect x="130.4" y="203.9" width="5.5" height="416.8"/><rect x="135.9" y="236.7" width="5.5" height="384.0"/><rect x="141.4" y="212.9" width="5.5" height="407.8"/><rect x="147.0" y="251.6" width="5.5" height="369.1"/><rect x="152.5" y="326.0" width="5.5" height="294.7"/><rect x="158.1" y="349.8" width="5.5" height="270.9"/><rect x="163.6" y="445.1" width="5.5" height="175.6"/><rect x="169.1" y="462.9" width="5.5" height="157.8"/><rect x="174.7" y="486.7" width="5.5" height="134.0"/><rect x="180.2" y="534.4" width="5.5" height="86.3"/><rect x="185.8" y="528.4" width="5.5" height="92.3"/><rect x="191.3" y="576.0" width="5.5" height="44.7"/><rect x="196.8" y="570.1" width="5.5" height="50.6"/><rect x="202.4" y="576.0" width="5.5" height="44.7"/><rect x="207.9" y="588.0" width="5.5" height="32.7"/><rect x="213.5" y="596.9" width="5.5" height="23.8"/><rect x="219.0" y="596.9" width="5.5" height="23.8"/><rect x="224.5" y="611.8" width="5.5" height="8.9"/><rect x="230.1" y="605.8" width="5.5" height="14.9"/><rect x="241.2" y="614.7" width="5.5" height="6.0"/><rect x="246.7" y="617.7" width="5.5" height="3.0"/><rect x="257.8" y="614.7" width="5.5" height="6.0"/><rect x="263.3" y="614.7" width="5.5" height="6.0"/><rect x="268.9" y="617.7" width="5.5" height="3.0"/><rect x="274.4" y="608.8" width="5.5" height="11.9"/><rect x="296.6" y="617.7" width="5.5" height="3.0"/><rect x="313.2" y="617.7" width="5.5" height="3.0"/><rect x="324.3" y="617.7" width="5.5" height="3.0"/><rect x="335.3" y="617.7" width="5.5" height="3.0"/><rect x="346.4" y="611.8" width="5.5" height="8.9"/><rect x="363.0" y="614.7" width="5.5" height="6.0"/><rect x="368.6" y="617.7" width="5.5" height="3.0"/><rect x="379.7" y="617.7" width="5.5" height="3.0"/><rect x="396.3" y="617.7" width="5.5" height="3.0"/><rect x="407.4" y="614.7" width="5.5" height="6.0"/><rect x="412.9" y="617.7" width="5.5" height="3.0"/><rect x="446.1" y="614.7" width="5.5" height="6.0"/><rect x="457.2" y="617.7" width="5.5" height="3.0"/><rect x="462.8" y="614.7" width="5.5" height="6.0"/></g><path d="M80.5 25.3H634.5V620.7H80.5Z" stroke="#000" stroke-width="1" fill="none"/><path d="M80.5 620.7v5M91.6 620.7v5M102.7 620.7v5M113.7 620.7v5M124.8 620.7v5M135.9 620.7v5M147.0 620.7v5M158.1 620.7v5M169.1 620.7v5M180.2 620.7v5M191.3 620.7v5M202.4 620.7v5M213.5 620.7v5M224.5 620.7v5M235.6 620.7v5M246.7 620.7v5M257.8 620.7v5M268.9 620.7v5M279.9 620.7v5M291.0 620.7v5M302.1 620.7v5M313.2 620.7v5M324.3 620.7v5M335.3 620.7v5M346.4 620.7v5M357.5 620.7v5M368.6 620.7v5M379.7 620.7v5M390.7 620.7v5M401.8 620.7v5M412.9 620.7v5M424.0 620.7v5M435.1 620.7v5M446.1 620.7v5M457.2 620.7v5M468.3 620.7v5M479.4 620.7v5M490.5 620.7v5M501.5 620.7v5M512.6 620.7v5M523.7 620.7v5M534.8 620.7v5M545.9 620.7v5M556.9 620.7v5M568.0 620.7v5M579.1 620.7v5M590.2 620.7v5M601.3 620.7v5M612.3 620.7v5M623.4 620.7v5M634.5 620.7v5M80.5 620.7h-5M80.5 561.2h-5M80.5 501.6h-5M80.5 442.1h-5M80.5 382.5h-5M80.5 323.0h-5M80.5 263.5h-5M80.5 203.9h-5M80.5 144.4h-5M80.5 84.8h-5M80.5 25.3h-5" stroke="#000" stroke-width="1" fill="none"/><text x="80.5" y="637.7" text-anchor="middle" font-size="12" letter-spacing="-0.7" fill="#333" font-family="Liberation Sans">0</text><text x="135.9" y="637.7" text-anchor="middle" font-size="12" letter-spacing="-0.7" fill="#333" font-family="Liberation Sans">100</text><text x="191.3" y="637.7" text-anchor="middle" font-size="12" letter-spacing="-0.7" fill="#333" font-family="Liberation Sans">200</text><text x="246.7" y="637.7" text-anchor="middle" font-size="12" letter-spacing="-0.7" fill="#333" font-family="Liberation Sans">300</text><text x="302.1" y="637.7" text-anchor="middle" font-size="12" letter-spacing="-0.7" fill="#333" font-family="Liberation Sans">400</text><text x="357.5" y="637.7" text-anchor="middle" font-size="12" letter-spacing="-0.7" fill="#333" font-family="Liberation Sans">500</text><text x="412.9" y="637.7" text-anchor="middle" font-size="12" letter-spacing="-0.7" fill="#333" font-family="Liberation Sans">600</text><text x="468.3" y="637.7" text-anchor="middle" font-size="12" letter-spacing="-0.7" fill="#333" font-family="Liberation Sans">700</text><text x="523.7" y="637.7" text-anchor="middle" font-size="12" letter-spacing="-0.7" fill="#333" font-family="Liberation Sans">800</text><text x="579.1" y="637.7" text-anchor="middle" font-size="12" letter-spacing="-0.7" fill="#333" font-family="Liberation Sans">900</text><text x="634.5" y="637.7" text-anchor="middle" font-size="12" letter-spacing="-0.7" fill="#333" font-family="Liberation Sans">1000</text><text x="73.5" y="624.7" text-anchor="end" font-size="11" fill="#333" font-family="Liberation Sans">0</text><text x="73.5" y="327.0" text-anchor="end" font-size="11" fill="#333" font-family="Liberation Sans">100</text><text x="73.5" y="29.3" text-anchor="end" font-size="11" fill="#333" font-family="Liberation Sans">200</text><text x="357.5" y="664.7" text-anchor="middle" font-size="15.8" fill="#333" font-family="Liberation Sans">size (nm)</text><text transform="translate(27 323.0) rotate(-90)" text-anchor="middle" font-size="16.8" fill="#333" font-family="Liberation Sans">count (particle)</text></svg></div><div class="t" style="left:5px;top:840px;font-size:21px;color:#3e424a">Camera (Full Image)</div><svg class="a" style="left:5px;top:898px" width="400" height="102"><rect x="0" y="0" width="400" height="102" fill="#111"/><path d="M130 16h1M16 44h1M170 84h1M219 7h1M206 63h1M26 8h1M136 6h1M186 49h1M10 96h1M91 53h1M381 37h1M161 96h1M140 56h1M209 3h1M49 45h1M62 73h1M79 33h1M17 79h1M108 14h1M45 17h1M200 19h1M162 36h1M29 75h1M18 3h1M250 69h1M31 28h1M297 31h1M93 91h1M145 44h1M100 28h1M301 65h1M180 15h1M155 23h1M353 49h1M383 71h1M267 94h1M136 43h1M318 75h1M86 98h1M75 95h1M80 76h1M353 100h1M299 86h1M295 21h1M159 100h1M17 30h1M88 38h1M102 61h1M6 34h1M345 101h1M321 98h1M376 99h1M10 63h1M305 79h1M38 45h1M144 77h1M125 1h1M54 24h1M90 59h1M296 46h1M351 3h1M138 15h1M365 95h1M139 71h1M105 95h1M281 85h1M100 34h1M79 65h1M262 26h1M94 79h1M222 27h1M197 7h1M305 11h1M165 11h1M52 3h1M285 87h1M102 97h1M243 69h1M191 60h1M161 53h1M327 97h1M81 19h1M43 33h1M193 18h1M271 2h1M251 15h1M24 91h1M191 30h1M322 35h1M364 23h1M73 78h1M324 59h1M293 42h1M205 54h1M386 23h1M101 83h1M230 53h1M347 73h1M197 51h1M60 58h1M253 37h1M173 51h1M213 16h1M118 42h1M171 92h1M390 84h1M205 51h1M336 60h1M245 82h1M176 63h1M194 80h1M202 24h1M147 26h1M227 32h1M119 8h1M293 72h1M17 32h1M174 69h1M333 79h1M341 62h1M299 84h1M387 65h1M25 37h1M47 30h1M145 18h1M174 20h1M261 26h1M232 9h1M177 98h1M176 20h1M225 36h1M46 87h1M235 9h1M42 84h1M294 96h1M271 40h1M3 59h1M184 100h1M98 24h1M227 31h1M281 23h1M241 87h1M293 97h1M323 89h1M132 10h1M209 95h1M40 18h1M275 5h1M60 75h1M110 19h1M151 25h1M321 53h1M272 38h1M149 35h1M81 58h1M287 28h1M149 68h1M307 78h1M32 83h1M24 44h1M344 8h1M269 68h1M18 85h1M233 33h1M319 99h1M239 55h1M138 95h1M72 80h1M141 38h1M349 49h1M355 9h1M238 79h1M375 42h1M98 74h1M138 15h1M101 85h1M3 50h1M356 74h1M59 60h1M350 17h1" stroke="#fff" stroke-opacity="0.1" stroke-width="1" transform="translate(0 0.5)"/><path d="M214 38h1M251 96h1M73 59h1M272 44h1M167 77h1M349 32h1M190 67h1M155 68h1M327 87h1M71 24h1M235 27h1M157 41h1M245 16h1M345 71h1M12 29h1M101 30h1M168 93h1M3 81h1M290 57h1M222 79h1M245 52h1M65 44h1M222 45h1M315 98h1M60 93h1M37 7h1M101 3h1M137 84h1M113 25h1M124 37h1M190 51h1M3 27h1M286 89h1M393 16h1M293 82h1M233 90h1M93 4h1M43 85h1M318 76h1M263 8h1M295 99h1M257 9h1M25 28h1M270 30h1M390 95h1M327 98h1M85 96h1M2 50h1M287 6h1M370 14h1M262 31h1M137 10h1M228 90h1M166 53h1M109 26h1M44 16h1M94 93h1M52 26h1M46 8h1M199 68h1M198 20h1M266 96h1M265 39h1M68 1h1M298 91h1M382 63h1M155 26h1M328 78h1M39 51h1M94 43h1M336 30h1M62 89h1M377 12h1M26 11h1M255 10h1M125 58h1M184 17h1M256 92h1M149 51h1M208 94h1M88 41h1M335 13h1M251 32h1M170 67h1M189 12h1M205 6h1M315 94h1M84 27h1M47 54h1M43 100h1M255 99h1M2 36h1M98 16h1M348 79h1M6 65h1M100 91h1M80 62h1M325 18h1M4 85h1M93 5h1M278 86h1M297 95h1M175 73h1M277 64h1M253 84h1M128 43h1M113 73h1M279 51h1M251 37h1M152 89h1M265 75h1M309 59h1M353 25h1M42 97h1M393 80h1M277 51h1M57 61h1M362 44h1M256 46h1M252 26h1M196 98h1M41 58h1M164 96h1M142 7h1M6 43h1M141 28h1M323 64h1M91 97h1M327 83h1M340 28h1M171 20h1M113 25h1M172 65h1M315 85h1M4 85h1M266 85h1M383 9h1M133 99h1M358 4h1M136 87h1M210 78h1M330 41h1M133 33h1M254 79h1M353 56h1M246 64h1M272 22h1M309 92h1M328 80h1M121 43h1M256 94h1M367 46h1M61 3h1M195 7h1M146 65h1M281 84h1M390 84h1M172 90h1M2 27h1M324 88h1M73 71h1M398 38h1M314 17h1M346 50h1M363 7h1M49 97h1M256 97h1M89 5h1M346 90h1M107 42h1M335 34h1M332 54h1M33 10h1M110 22h1M147 17h1M3 53h1M279 21h1M330 95h1M310 35h1M325 86h1M382 94h1M256 28h1M217 93h1M123 66h1M382 52h1M228 66h1M184 56h1M125 25h1M154 60h1M344 25h1M26 40h1M62 35h1M199 97h1M313 88h1M181 47h1M156 57h1M314 86h1M74 31h1M215 101h1M274 40h1M141 96h1M40 38h1M212 83h1M354 43h1M123 70h1M199 56h1M213 101h1M308 33h1M233 36h1M198 96h1M224 12h1M141 25h1M95 4h1M63 72h1M321 17h1M348 13h1M109 78h1M71 86h1M44 57h1M51 73h1M54 29h1M265 36h1M65 21h1M335 58h1M299 10h1M295 84h1M23 71h1M281 82h1M125 15h1M96 25h1M219 77h1M25 29h1M179 12h1M396 76h1M391 57h1M96 5h1M198 51h1M114 67h1M361 17h1M324 7h1M12 20h1M35 67h1M167 54h1M212 26h1M91 58h1M176 87h1M310 7h1M7 60h1M272 84h1M46 94h1M75 56h1M236 5h1M187 59h1M268 28h1M348 78h1M295 52h1M220 42h1M130 100h1M4 88h1M121 32h1M104 3h1M368 22h1M259 42h1M24 42h1M134 50h1M394 7h1M215 60h1M240 34h1M308 99h1M12 14h1M392 51h1M44 74h1M161 87h1M90 26h1M120 100h1M300 83h1M194 90h1M5 92h1M127 89h1M55 44h1M18 52h1M145 2h1M349 73h1M168 98h1M243 94h1M277 33h1M127 98h1M94 64h1M284 40h1M271 33h1M189 73h1M70 83h1M62 26h1M158 101h1M149 5h1M285 31h1M324 36h1M302 39h1M360 77h1M189 90h1M205 83h1M161 5h1M301 57h1M284 49h1M348 16h1M3 100h1M204 43h1M81 6h1M186 50h1M21 32h1M274 16h1M152 65h1M38 47h1M134 46h1M238 47h1M40 66h1M351 13h1M48 48h1M203 38h1M195 80h1M92 76h1M13 40h1M300 65h1M338 80h1M324 43h1M247 30h1M182 82h1M145 67h1M157 76h1M304 30h1M152 97h1M317 36h1M125 6h1M386 97h1M377 21h1M44 27h1" stroke="#fff" stroke-opacity="0.2" stroke-width="1" transform="translate(0 0.5)"/><path d="M390 6h1M291 30h1M259 100h1M144 89h1M137 27h1M174 88h1M279 89h1M224 95h1M169 92h1M125 32h1M76 48h1M187 13h1M57 53h1M2 76h1M370 72h1M120 75h1M26 29h1M201 64h1M330 87h1M387 32h1M381 13h1M15 7h1M323 66h1M329 17h1M162 86h1M197 97h1M302 17h1M297 6h1M6 56h1M107 65h1M41 11h1M344 10h1M169 56h1M241 91h1M81 76h1M36 82h1M208 44h1M313 72h1M337 85h1M49 17h1M144 20h1M12 78h1M383 57h1M28 49h1M66 4h1M63 87h1M210 54h1M153 84h1M191 81h1M346 81h1M335 16h1M364 33h1M271 12h1M109 90h1M394 20h1" stroke="#fff" stroke-opacity="0.5" stroke-width="1" transform="translate(0 0.5)"/><path d="M58 13h1M98 58h1M68 13h1M52 26h1M33 46h1M41 37h1M217 4h1M67 78h1M79 21h1M335 49h1M300 49h1M387 66h1M104 43h1M142 47h1M181 54h1M352 98h1M249 52h1M30 95h1M34 87h1M182 35h1M327 44h1M157 52h1M64 46h1M388 56h1M57 35h1M41 84h1M68 17h1M235 1h1M376 73h1M183 56h1M89 77h1M21 48h1M127 29h1M14 56h1M346 46h1M164 29h1M291 21h1M170 83h1M50 26h1M254 9h1M292 82h1M326 15h1M16 19h1M272 91h1M348 57h1M246 44h1M249 48h1M163 25h1M351 34h1M252 70h1M188 85h1M85 63h1M59 4h1M27 60h1M327 90h1M13 42h1M3 50h1M74 50h1M33 80h1M140 34h1M156 4h1M169 24h1M248 42h1M157 77h1M375 54h1M157 22h1M371 86h1M362 79h1M253 2h1M361 80h1M243 79h1M212 75h1M197 51h1M12 62h1M203 98h1M49 98h1M293 20h1M251 72h1M125 74h1M176 69h1M227 30h1M326 90h1M340 82h1M139 10h1M208 3h1M223 88h1M314 72h1M270 31h1M15 94h1M285 56h1M128 91h1M348 28h1M129 72h1M162 15h1M335 54h1M114 100h1M252 61h1M254 5h1M41 18h1M68 28h1M23 90h1M371 86h1M326 31h1M287 23h1M161 8h1M333 14h1M151 97h1M251 19h1M45 80h1M373 36h1M57 57h1M367 65h1M148 56h1M136 45h1M259 31h1M68 76h1M241 11h1M46 3h1M137 16h1M320 5h1M31 34h1M105 58h1M396 4h1M375 69h1M33 19h1M143 78h1M60 19h1M320 47h1M239 46h1M85 89h1M119 3h1M136 93h1M391 4h1M172 11h1M217 56h1M341 52h1M90 62h1M333 10h1M226 33h1M182 94h1M166 67h1M371 10h1M369 4h1M224 11h1M69 95h1M82 14h1M201 90h1M183 25h1M274 72h1M163 10h1M134 22h1M280 45h1M49 69h1M90 90h1M211 1h1M31 63h1M146 99h1M273 57h1M111 17h1M385 28h1M180 85h1" stroke="#fff" stroke-opacity="0.3" stroke-width="1" transform="translate(0 0.5)"/><path d="M181 31h1M17 68h1M148 58h1M59 84h1M100 29h1M35 85h1M234 54h1M18 85h1M192 69h1M149 40h1M252 92h1M121 47h1M125 21h1M370 40h1M318 27h1M221 45h1M385 51h1M83 27h1M213 76h1M309 71h1M65 79h1M205 65h1M3 20h1M263 80h1M17 13h1M232 91h1M40 94h1M387 79h1M36 56h1M246 86h1M348 1h1M282 27h1M378 43h1M345 98h1M46 19h1M283 44h1M78 46h1M153 15h1M337 40h1M374 35h1M76 55h1M185 2h1M164 93h1M93 21h1M89 15h1M81 43h1M126 27h1M320 21h1M117 72h1M368 101h1M140 17h1M348 31h1M158 51h1M41 56h1M151 94h1M390 66h1" stroke="#fff" stroke-opacity="0.7" stroke-width="1" transform="translate(0 0.5)"/><path d="M232 47h1M146 13h1M132 23h1M382 46h1M199 23h1M94 49h1M190 83h1M379 15h1M2 21h1M179 17h1M23 15h1M146 100h1M174 99h1M357 70h1M75 65h1M327 72h1M130 47h1M345 19h1M41 11h1M192 51h1M298 14h1" stroke="#fff" stroke-opacity="0.9" stroke-width="1" transform="translate(0 0.5)"/><path d="M359 79h1M340 82h1M35 67h1M52 16h1M30 68h1M160 50h1M202 84h1M327 52h1M150 97h1M25 40h1M370 19h1M258 45h1M20 90h1M46 4h1M132 20h1M40 43h1M155 80h1M311 44h1M324 35h1M49 72h1M44 24h1M226 51h1M363 78h1M239 47h1M68 79h1M302 12h1M348 57h1M145 29h1M87 98h1M369 20h1M167 59h1M133 99h1M361 75h1M236 45h1M377 13h1M317 69h1M136 60h1M130 15h1" stroke="#fff" stroke-opacity="0.8" stroke-width="1" transform="translate(0 0.5)"/><path d="M133 81h1M225 77h1M14 72h1M293 101h1M143 83h1M388 59h1M74 66h1M219 14h1M237 95h1M102 76h1M181 35h1M197 3h1M25 88h1M64 8h1M295 75h1M232 10h1M229 89h1M176 63h1M279 26h1M131 19h1M336 87h1M119 58h1M306 10h1M284 77h1M190 67h1M222 19h1M142 51h1M185 47h1M368 57h1M117 36h1M247 70h1M74 28h1M209 69h1" stroke="#fff" stroke-opacity="0.6" stroke-width="1" transform="translate(0 0.5)"/><path d="M381 86h1M78 37h1M164 82h1M366 64h1M128 37h1M17 57h1M355 10h1M7 66h1M360 91h1M40 30h1M290 30h1M323 89h1M370 14h1M275 82h1M395 24h1M164 15h1M337 79h1M330 90h1M99 61h1M324 47h1" stroke="#fff" stroke-opacity="0.4" stroke-width="1" transform="translate(0 0.5)"/><path d="M0 0.5H400M0 101.5H400" stroke="#22ee22" stroke-width="1"/><path d="M79.5 0V102" stroke="#22dd22" stroke-width="1.3"/><path d="M159.5 0V102" stroke="#22dd22" stroke-width="1.3"/><path d="M239.5 0V102" stroke="#22dd22" stroke-width="1.3"/><path d="M319.5 0V102" stroke="#22dd22" stroke-width="1.3"/></svg><div class="a" style="left:408px;top:833px;width:2px;height:201px;background:#0099ff"></div><div class="t" style="left:412px;top:836px;font-size:21px;color:#3e424a">Area 1</div><div class="a" style="left:572px;top:833px;width:2px;height:201px;background:#0099ff"></div><div class="t" style="left:576px;top:836px;font-size:21px;color:#3e424a">Area 2</div><div class="a" style="left:735px;top:833px;width:2px;height:201px;background:#0099ff"></div><div class="t" style="left:739px;top:836px;font-size:21px;color:#3e424a">Area 3</div><div class="a" style="left:899px;top:833px;width:2px;height:201px;background:#0099ff"></div><div class="t" style="left:903px;top:836px;font-size:21px;color:#3e424a">Area 4</div><div class="a" style="left:1062px;top:833px;width:2px;height:201px;background:#0099ff"></div><div class="t" style="left:1066px;top:836px;font-size:21px;color:#3e424a">Area 5</div><svg class="a" style="left:426px;top:863px" width="130" height="166"><rect width="130" height="166" fill="#131313"/><path d="M41 25h1M61 92h1M97 45h1M81 43h1M5 136h1M31 12h1M97 112h1M83 160h1M89 128h1M121 123h1M51 133h1M24 144h1M86 95h1M87 124h1M116 148h1M17 116h1M8 74h1M14 37h1M44 55h1M108 133h1M81 120h1M52 84h1M104 159h1M127 12h1M17 75h1M91 75h1M25 121h1M57 33h1M25 44h1M90 161h1M122 152h1M2 142h1M81 44h1M20 128h1M14 93h1M126 72h1M107 130h1M6 147h1M9 53h1M114 80h1M49 17h1M16 33h1M76 105h1M57 11h1M7 78h1M84 114h1M18 150h1M106 105h1M87 154h1M104 27h1M72 136h1M10 9h1M84 34h1M14 161h1M45 16h1M47 50h1M15 114h1M67 75h1M88 140h1M39 57h1M84 154h1M108 164h1M35 41h1M119 54h1M40 103h1M68 107h1M2 43h1M128 29h1M89 114h1M33 159h1M76 108h1M9 2h1M18 19h1M39 67h1M110 132h1M117 26h1M49 108h1M102 42h1M103 47h1M28 63h1M30 5h1M15 76h1M12 19h1M22 38h1M15 11h1M61 155h1M9 37h1M34 152h1M94 12h1M41 34h1M61 122h1M30 82h1M122 38h1M66 156h1M42 67h1M86 4h1M78 43h1M19 23h1M30 28h1M35 155h1M125 144h1M31 109h1M74 30h1M33 39h1M96 103h1M61 112h1M101 38h1M124 34h1M95 59h1M18 67h1M74 59h1M56 29h1M48 159h1M108 106h1M2 88h1M30 44h1M43 86h1M12 103h1M34 131h1M20 114h1M103 16h1M55 88h1M38 106h1M20 37h1M93 9h1M11 8h1M65 86h1M14 12h1M62 42h1M29 53h1M92 127h1M80 17h1M9 124h1M56 14h1M22 126h1M61 158h1M37 77h1" stroke="#fff" stroke-opacity="0.2" stroke-width="1" transform="translate(0 0.5)"/><path d="M118 87h1M46 155h1M104 18h1M17 56h1M102 138h1M79 45h1M78 136h1M27 37h1M46 115h1M108 54h1M81 23h1M28 131h1M4 128h1M65 70h1M24 66h1M93 10h1M39 7h1M59 17h1M61 136h1M27 42h1M17 2h1M76 63h1M87 118h1M104 6h1M31 154h1M119 43h1M2 125h1M126 117h1M38 65h1M105 76h1M110 140h1M99 1h1M108 118h1M57 117h1M69 159h1M89 160h1M97 41h1M4 114h1M90 50h1M125 113h1M99 29h1M57 120h1M4 137h1M36 2h1M76 109h1M29 11h1M47 119h1M67 18h1M99 37h1M68 40h1M112 35h1M62 30h1M84 85h1M47 149h1M11 36h1M57 23h1M52 112h1M128 103h1M21 137h1M72 117h1M75 146h1M7 151h1M2 48h1M84 85h1M68 112h1M87 132h1M124 149h1M99 21h1M28 44h1M2 112h1M91 159h1M99 50h1M113 97h1M35 12h1M22 115h1M127 3h1M121 160h1M54 79h1M7 14h1M44 81h1M120 92h1M102 38h1M86 93h1M25 96h1M82 40h1M4 120h1M79 149h1M40 109h1M102 51h1M60 33h1M82 46h1M127 150h1M60 102h1M12 159h1M37 127h1M14 12h1M69 137h1M44 20h1M125 19h1M95 21h1M44 41h1M61 163h1" stroke="#fff" stroke-opacity="0.1" stroke-width="1" transform="translate(0 0.5)"/><path d="M67 110h1M53 83h1M74 45h1M106 107h1M87 161h1M104 7h1M29 143h1M21 104h1M46 148h1M128 150h1M117 117h1M50 134h1M27 40h1M8 39h1M30 65h1M5 15h1M14 130h1M118 0h1M80 98h1M96 4h1M19 100h1M79 107h1M95 131h1M113 30h1M12 73h1M3 38h1M100 147h1M69 17h1M121 67h1M27 47h1M120 56h1M19 16h1M110 21h1M83 78h1M7 109h1M73 144h1M111 18h1M47 20h1M84 24h1M122 122h1M29 99h1M97 96h1M108 33h1M59 37h1M31 20h1M58 67h1M85 142h1M68 140h1M103 148h1M25 13h1M84 30h1M10 96h1M106 99h1M92 38h1M25 117h1M107 118h1M20 154h1M92 87h1M58 153h1M96 147h1M124 18h1" stroke="#fff" stroke-opacity="0.3" stroke-width="1" transform="translate(0 0.5)"/><path d="M109 53h1M43 135h2M86 8h1M88 8h1M30 145h1M127 85h1M30 29h2M115 92h1M52 58h2M19 142h1M15 138h2M120 66h2M35 86h1M19 38h2M2 146h1M11 26h2M50 42h2M86 24h2M101 129h2M128 70h1M132 74h1M33 10h1M122 75h1M128 18h1M109 99h1M123 17h2M13 124h1M13 128h1M54 88h2M64 168h1M11 96h1M56 1h1M26 25h2M99 115h2M68 48h2M127 86h2M129 86h1M62 61h1M16 6h2M84 69h1M106 46h1M24 98h1M120 144h1M77 92h2M132 32h1M70 131h1M70 129h1M125 129h1M121 133h2M100 126h2M71 92h1M83 61h1M0 151h1M15 37h1M56 104h1M88 47h2M93 60h1M89 121h2M126 125h2M124 61h2M77 49h2M118 113h2M77 41h2M111 162h2M83 85h2M21 43h2M23 43h2M99 104h1M116 66h1M75 71h1M112 40h2M82 91h1M59 77h2" stroke="#c8c840" stroke-opacity="1" stroke-width="1.6" transform="translate(0 0.5)"/><path d="M7 0h2M5 6h1M5 6h1M103 156h2M105 156h2M2 157h2M34 145h1M128 55h1M60 32h2M17 140h2M94 156h2M73 36h1M15 42h1M62 120h1M88 26h1M85 55h1M49 6h1M51 6h1M94 154h2M68 138h2M10 65h1M72 16h1M74 16h1M123 161h1M86 59h2M14 47h1M127 12h2M68 63h1M70 63h2M95 134h1M56 21h1M9 96h1M111 96h1M111 96h1M54 109h1M84 111h2M88 107h1M123 86h1M64 59h1M50 62h1M16 6h1M37 89h2M19 148h2M70 127h2M17 79h1M15 79h2M125 133h1M116 72h2M118 72h2M88 110h2M119 133h1M51 89h2M98 124h1M92 58h2M16 46h1M58 80h1M40 64h1M6 33h1M84 4h1M81 121h1M95 58h1M11 47h1M73 35h1M40 88h1M38 86h1M36 84h2M109 48h2M83 133h2M79 129h2M79 32h2M67 101h2M73 30h2M33 95h1M75 51h2M1 6h1M109 164h2M38 125h2M122 25h1M99 104h2M88 139h2M20 71h1M80 93h1M76 97h1" stroke="#33ff22" stroke-opacity="1" stroke-width="1.6" transform="translate(0 0.5)"/><path d="M79 65h2M99 93h1M32 108h1M43 135h2M46 10h1M42 153h2M40 151h1M128 30h2M77 62h2M5 9h2M3 9h1M33 45h1M33 47h1M91 45h1M89 47h1M128 55h1M60 32h1M17 40h1M4 146h1M25 10h1M5 43h1M1 43h2M81 18h2M84 22h2M34 100h1M114 94h1M35 19h2M47 6h2M96 154h1M112 13h2M114 13h2M24 82h1M24 82h1M14 69h2M86 59h2M54 34h2M75 135h1M29 22h1M130 18h1M18 26h1M66 96h2M68 98h1M54 39h1M107 97h1M58 83h1M9 128h1M13 122h1M12 148h1M52 88h1M42 6h1M44 4h1M66 166h1M72 73h1M60 21h2M58 21h1M7 96h2M13 96h1M84 43h2M66 48h2M91 75h1M86 109h1M90 105h1M111 72h2M111 72h2M20 46h1M20 46h1M20 46h1M67 20h1M16 6h2M115 18h1M117 16h1M40 68h1M104 44h1M22 98h1M122 144h1M37 115h2M41 115h1M79 92h1M82 23h1M80 23h1M78 23h1M76 23h1M130 32h1M15 144h1M13 79h2M4 153h1M4 153h2M114 72h1M120 72h1M43 11h1M49 89h1M122 84h1M14 72h2M96 122h1M67 25h2M16 46h2M101 111h1M103 113h1M22 149h1M25 106h1M23 104h2M81 61h1M70 120h1M26 42h1M42 64h2M58 126h2M6 35h2M6 31h1M33 80h1M86 4h1M86 47h1M124 63h1M20 64h2M4 73h1M67 134h1M74 160h1M77 39h1M128 146h2M81 131h1M79 30h1M61 107h1M124 127h1M128 123h2M47 131h1M116 85h2M71 161h1M73 161h1M118 156h1M31 97h1M75 145h2M44 26h1M73 53h1M43 156h2M45 158h1M47 160h1M49 162h1M60 1h1M1 6h1M108 140h2M46 163h1M13 108h2M36 125h2M81 87h1M85 83h1M87 81h2M87 123h1M89 121h1M28 154h1M28 152h1M92 139h2M110 146h1M57 15h1M57 15h1M110 65h1M33 46h2M110 42h2M57 77h1M61 77h1M91 131h1M93 131h1" stroke="#22ee22" stroke-opacity="1" stroke-width="1.6" transform="translate(0 0.5)"/><path d="M77 65h2M84 8h1M47 101h2M45 101h1M112 94h1M46 157h2M28 145h2M32 145h1M115 92h1M128 55h1M18 51h1M60 32h1M54 58h2M17 148h1M3 43h1M46 154h1M115 27h2M80 148h1M43 65h1M82 20h2M85 55h1M37 19h2M130 72h2M68 140h1M41 146h1M74 29h1M27 20h2M126 18h1M132 18h2M64 94h2M11 54h1M9 128h1M121 17h1M13 126h1M68 164h1M111 96h2M70 48h1M64 48h1M125 86h1M20 46h1M38 68h1M108 48h1M128 32h1M21 150h1M17 146h2M90 110h2M123 133h2M102 128h1M16 46h1M22 147h1M46 64h2M56 126h1M124 65h2M24 64h1M120 147h1M6 71h1M65 134h1M76 160h1M79 41h2M107 48h2M63 105h2M65 103h1M91 123h2M93 125h1M95 127h1M71 28h1M110 62h1M75 147h1M33 45h1M87 116h2M58 3h1M75 39h1M110 140h2M42 159h2M118 135h1M34 125h2M104 108h1M102 9h2M69 7h1M112 67h1M77 71h1M37 46h1M35 46h1M31 46h1" stroke="#e0e040" stroke-opacity="1" stroke-width="1.6" transform="translate(0 0.5)"/><path d="M34 108h2M44 155h1M130 28h1M77 62h1M77 62h1M7 9h1M20 72h2M116 27h1M128 55h1M21 36h1M16 49h1M118 66h2M7 43h2M64 120h1M78 150h2M119 124h1M116 96h1M53 6h2M123 8h2M61 14h1M8 63h1M12 67h2M124 77h2M86 59h1M125 14h1M31 24h2M119 17h1M70 162h2M62 21h2M28 25h1M111 96h1M65 96h1M101 115h1M65 18h1M16 6h1M26 140h2M113 20h1M84 71h2M110 50h2M116 30h1M39 115h1M64 115h2M125 131h1M57 159h2M4 153h1M125 133h1M12 72h1M23 95h2M73 88h1M44 64h2M9 154h1M91 62h1M22 64h1M19 36h2M9 47h1M72 160h1M75 37h1M42 90h1M126 146h1M114 87h1M35 47h1M40 157h1M44 161h1M15 106h1M102 108h2M25 43h1M27 43h2M18 132h1M122 25h1M90 139h1M98 50h1M49 151h1M78 95h1" stroke="#d8d850" stroke-opacity="1" stroke-width="1.6" transform="translate(0 0.5)"/></svg><svg class="a" style="left:590px;top:863px" width="130" height="166"><rect width="130" height="166" fill="#131313"/><path d="M128 120h1M88 15h1M48 109h1M59 71h1M85 94h1M31 103h1M128 54h1M64 84h1M10 36h1M39 149h1M68 123h1M18 54h1M16 13h1M111 66h1M60 26h1M122 149h1M104 92h1M89 71h1M48 82h1M28 34h1M72 79h1M112 95h1M76 114h1M84 82h1M42 128h1M98 132h1M109 47h1M53 47h1M98 68h1M59 147h1M88 152h1M85 160h1M103 43h1M47 105h1M119 82h1M32 43h1M48 10h1M30 85h1M45 80h1M115 157h1M67 25h1M39 96h1M65 160h1M25 92h1M70 49h1M94 10h1M16 87h1M118 68h1M68 45h1M4 105h1M35 80h1M116 72h1M65 163h1M52 22h1M23 128h1M23 15h1M27 67h1M82 24h1M72 34h1M117 121h1M15 123h1M67 156h1M35 1h1M54 9h1M34 49h1M30 110h1M104 130h1M45 135h1M55 36h1M90 1h1M115 15h1M109 120h1M121 29h1M109 74h1M26 143h1M118 113h1M94 48h1M27 100h1M57 145h1M129 135h1M77 23h1M38 82h1M96 93h1M74 4h1M112 13h1M112 32h1M70 133h1M101 91h1M78 117h1M100 14h1M74 108h1M74 148h1M4 61h1M18 157h1M75 27h1M115 107h1M38 29h1M48 130h1M78 75h1M12 124h1M81 143h1M79 25h1M23 155h1M41 9h1M68 113h1M71 97h1M81 114h1M110 142h1M119 6h1M77 109h1M91 91h1M64 151h1M84 107h1M75 88h1M28 71h1M66 118h1M31 40h1M50 120h1M59 141h1M13 156h1M30 61h1M78 54h1M118 64h1M122 146h1M40 36h1M0 36h1M33 55h1M10 88h1M83 12h1M92 63h1M117 125h1M6 10h1M68 76h1M13 158h1M101 140h1M30 29h1M104 154h1M32 102h1M103 136h1M70 21h1M76 112h1M58 154h1M75 19h1M61 26h1M58 88h1M12 93h1M110 14h1M53 161h1M18 143h1M111 83h1M29 138h1M60 67h1" stroke="#fff" stroke-opacity="0.2" stroke-width="1" transform="translate(0 0.5)"/><path d="M128 51h1M29 51h1M129 121h1M105 9h1M10 121h1M27 15h1M48 162h1M98 11h1M47 45h1M80 53h1M90 152h1M84 99h1M38 114h1M51 4h1M118 32h1M76 159h1M94 107h1M66 157h1M66 70h1M67 135h1M54 103h1M30 41h1M25 86h1M6 57h1M27 128h1M63 81h1M59 159h1M99 56h1M47 13h1M104 76h1M24 29h1M44 96h1M68 140h1M121 109h1M27 142h1M36 14h1M120 60h1M110 88h1M67 23h1M30 38h1M60 78h1M19 113h1M81 11h1M67 85h1M57 53h1M64 29h1M5 93h1M57 19h1M121 126h1M76 73h1M125 120h1M112 3h1M19 162h1M22 135h1M110 162h1M127 127h1M87 123h1M124 15h1M87 115h1M35 101h1M124 85h1M3 10h1M125 84h1M57 30h1M17 53h1M111 3h1M122 43h1M97 45h1M59 108h1M39 117h1M36 151h1M118 89h1M0 39h1M49 145h1M1 138h1M16 103h1M51 94h1M11 66h1M119 110h1M52 47h1M74 104h1M82 84h1M93 135h1M3 49h1M44 88h1M70 141h1M53 140h1M92 162h1M109 53h1M34 40h1M30 38h1M120 47h1M77 148h1M70 130h1M9 19h1" stroke="#fff" stroke-opacity="0.1" stroke-width="1" transform="translate(0 0.5)"/><path d="M97 125h1M17 118h1M127 77h1M24 150h1M29 38h1M23 82h1M88 82h1M10 79h1M44 134h1M75 140h1M113 83h1M112 108h1M7 117h1M87 150h1M106 144h1M101 151h1M57 96h1M65 118h1M47 8h1M83 29h1M43 34h1M107 21h1M127 136h1M109 50h1M99 66h1M96 157h1M35 103h1M11 107h1M39 135h1M45 107h1M18 12h1M56 7h1M32 112h1M57 103h1M93 124h1M74 160h1M41 92h1M84 117h1M1 79h1M70 139h1M63 140h1M54 152h1M93 154h1M102 4h1M111 76h1M106 78h1M106 14h1M25 113h1M128 154h1M9 40h1M48 98h1M31 74h1M60 160h1" stroke="#fff" stroke-opacity="0.3" stroke-width="1" transform="translate(0 0.5)"/><path d="M67 31h1M67 31h1M67 31h2M112 110h1M110 129h1M16 147h1M8 50h2M25 26h2M31 53h1M15 92h1M3 15h1M11 129h2M86 81h2M2 92h1M4 92h2M117 51h1M100 117h1M36 1h1M23 51h1M29 144h1M7 43h1M33 42h1M17 49h1M116 56h1M4 9h1M116 89h1M123 68h1M56 154h1M65 6h1M109 46h2M9 102h1M69 20h1M128 2h2M8 10h1M6 10h1M100 151h2M106 30h2M45 101h1M7 28h1M28 23h1M24 27h1M88 8h1M86 10h1M114 135h2M105 111h1M20 34h1M114 73h1M96 1h1M108 89h1M71 127h1M30 147h2M65 94h1M2 7h2M93 142h1M91 144h2M69 96h1M17 42h1M84 67h1M87 12h1M5 90h2M21 140h1M98 118h1M94 118h2M21 158h1M66 153h2M78 113h1M111 164h1M123 82h1M126 86h2M46 135h1M70 131h1M89 67h2M21 144h1M125 50h2M120 81h1M56 20h1" stroke="#33ff22" stroke-opacity="1" stroke-width="1.6" transform="translate(0 0.5)"/><path d="M79 89h1M107 122h2M105 124h1M110 110h1M112 87h1M53 126h1M53 124h1M53 122h1M64 135h1M126 34h1M73 67h1M75 65h1M62 142h2M16 149h2M101 91h1M99 91h2M95 91h1M33 53h1M67 49h1M1 34h2M88 36h1M17 46h1M17 46h1M17 46h1M10 57h2M52 120h1M97 35h1M3 77h1M7 77h1M58 159h1M53 99h1M35 147h1M104 77h1M106 77h1M106 115h1M122 98h2M20 84h1M44 47h1M50 74h2M48 74h1M21 51h1M86 125h2M88 123h2M65 78h1M69 78h1M71 78h1M3 43h2M27 114h1M125 43h1M125 41h2M35 42h1M23 49h2M40 101h1M114 54h2M6 7h1M80 84h1M67 3h2M123 68h1M60 154h2M35 69h1M35 69h1M61 10h1M16 51h1M121 108h1M127 114h1M50 17h1M44 115h2M42 117h1M5 102h1M7 102h1M27 129h1M106 132h1M106 132h1M126 36h1M124 38h2M6 107h1M36 110h1M45 101h1M47 101h1M49 101h2M70 121h2M72 121h1M53 10h1M110 11h1M129 143h2M112 48h1M7 26h2M7 30h1M119 9h2M119 7h2M105 39h1M114 135h1M4 2h1M16 57h2M18 36h2M12 88h1M12 88h1M12 88h1M43 88h1M112 71h1M101 47h1M119 53h2M121 53h1M23 28h1M68 109h1M93 118h1M95 116h1M99 112h1M63 23h1M117 147h1M117 147h1M43 4h1M108 87h1M19 134h1M71 127h1M28 147h2M110 145h2M63 96h1M59 100h1M33 135h1M68 71h1M70 71h2M93 7h1M111 132h1M50 52h1M69 5h2M125 163h1M77 136h1M77 134h2M13 131h2M9 135h1M54 130h1M15 42h1M46 125h1M48 125h1M7 52h2M3 137h2M7 137h2M9 137h2M29 13h2M23 40h1M5 163h1M85 14h2M27 140h2M25 140h2M23 156h2M25 154h1M82 149h2M41 148h2M81 124h1M83 124h1M85 124h2M100 13h1M15 49h2M17 49h1M54 13h1M75 90h2M69 60h1M96 133h2M92 137h2M90 139h1M73 158h1M75 156h1M121 101h1M100 106h1M107 160h1M109 162h2M121 80h2M5 35h1M9 31h1M46 135h2M91 67h1M102 81h1M15 104h1M49 29h1M9 111h1M97 69h1M94 94h1M125 48h1M113 17h1M113 21h2M122 79h2M118 151h1M118 149h2M98 136h1M43 10h1M45 10h2M33 25h1" stroke="#22ee22" stroke-opacity="1" stroke-width="1.6" transform="translate(0 0.5)"/><path d="M79 87h2M112 89h1M112 93h2M128 64h1M126 34h1M8 52h2M97 91h2M65 51h1M1 32h1M48 120h2M50 120h2M101 39h2M29 54h2M22 84h2M84 127h2M67 78h1M5 43h1M5 17h1M6 25h1M115 81h1M35 69h1M67 4h2M55 131h1M125 112h1M46 113h1M69 20h2M25 131h1M17 142h1M68 103h2M70 103h1M58 67h1M51 101h2M114 46h1M90 6h2M84 12h1M62 14h1M107 113h2M14 59h2M24 30h1M12 88h1M46 152h1M123 53h2M97 114h1M117 147h1M81 18h1M9 134h1M69 156h1M69 156h1M66 71h1M2 7h1M54 52h2M71 96h1M10 8h1M60 136h2M105 28h2M122 75h1M128 120h1M29 11h1M89 10h1M21 131h1M23 131h2M43 65h1M45 160h2M19 49h1M94 135h1M100 83h1M17 106h1M11 111h2M90 157h1M113 19h1M118 147h1M96 134h1M35 25h2" stroke="#c8c840" stroke-opacity="1" stroke-width="1.6" transform="translate(0 0.5)"/><path d="M7 109h2M108 127h1M16 145h1M21 26h1M23 26h1M69 47h2M111 148h1M86 38h2M17 46h2M99 37h1M9 129h2M5 77h1M56 159h2M115 51h2M95 90h2M18 84h1M2 100h1M1 43h1M37 120h1M9 74h2M4 25h1M37 42h1M38 101h1M112 52h1M82 84h1M48 62h1M58 154h2M117 81h2M35 69h1M63 8h1M107 139h1M46 13h2M110 11h1M106 132h2M106 132h2M128 34h1M47 99h1M110 11h1M110 11h1M125 143h1M127 143h2M119 3h1M103 41h1M27 155h1M75 76h2M64 16h1M114 135h1M18 55h1M43 84h1M43 86h1M43 90h1M117 53h2M23 26h2M3 87h1M61 98h1M111 132h1M101 127h1M97 123h1M95 121h1M56 132h1M58 134h2M36 85h2M85 134h2M130 120h2M112 134h1M5 137h1M23 140h2M96 118h2M92 118h1M98 80h1M29 84h1M76 31h1M64 155h1M67 62h1M105 158h2M119 78h1M106 7h2M112 7h2M122 86h1M124 86h2M7 33h2M92 157h1M58 20h1" stroke="#e0e040" stroke-opacity="1" stroke-width="1.6" transform="translate(0 0.5)"/><path d="M106 110h1M108 110h1M2 126h1M112 91h1M77 63h1M111 104h1M8 54h2M26 134h1M1 30h1M17 92h1M8 57h1M1 13h1M-1 11h1M76 136h2M74 136h1M34 1h2M126 136h2M39 120h1M49 99h1M49 97h1M2 25h2M19 49h2M21 49h1M87 96h1M110 50h2M123 68h2M123 68h2M109 35h2M48 59h2M123 110h1M48 15h1M3 102h2M110 13h1M110 15h1M110 17h1M23 133h1M128 0h2M128 -2h1M17 142h1M56 69h1M108 30h1M38 110h2M74 41h2M51 10h1M70 45h2M116 44h1M26 25h1M119 5h1M107 37h1M109 115h1M2 2h1M12 61h1M22 32h1M1 98h2M3 98h1M5 98h2M23 30h1M23 24h2M65 21h1M108 83h2M108 85h1M17 134h1M71 127h2M83 20h2M85 22h1M88 76h1M88 78h2M34 17h1M95 140h2M52 52h2M48 52h1M99 125h2M127 161h1M77 138h1M11 133h1M10 8h1M105 30h1M112 132h1M25 131h1M108 50h2M43 146h1M52 15h1M71 58h2M100 104h1M108 7h1M110 7h1M19 108h2M47 29h1M118 153h1M54 20h2" stroke="#d8d850" stroke-opacity="1" stroke-width="1.6" transform="translate(0 0.5)"/></svg><svg class="a" style="left:753px;top:863px" width="130" height="166"><rect width="130" height="166" fill="#131313"/><path d="M118 72h1M111 3h1M29 87h1M59 5h1M44 107h1M45 140h1M81 9h1M120 47h1M127 21h1M22 73h1M87 146h1M3 18h1M54 106h1M90 126h1M103 53h1M125 60h1M40 154h1M87 81h1M126 150h1M73 122h1M72 106h1M64 36h1M83 31h1M46 95h1M70 54h1M97 62h1M17 139h1M32 6h1M93 22h1M56 66h1M46 130h1M29 38h1M12 65h1M64 60h1M72 128h1M91 135h1M21 105h1M4 22h1M2 87h1M12 9h1M62 147h1M109 63h1M4 34h1M14 60h1M94 108h1M89 126h1M81 136h1M122 110h1M22 106h1M65 155h1M70 7h1M91 60h1M13 120h1M71 102h1M55 0h1M109 75h1M58 9h1M107 125h1M41 13h1M17 148h1M72 98h1M101 115h1M60 151h1M68 139h1M92 69h1M96 157h1M89 133h1M19 28h1M127 126h1M92 145h1M2 155h1M105 67h1M7 2h1M114 124h1M72 60h1M41 10h1M73 151h1M60 130h1M38 31h1M57 5h1M7 144h1M60 48h1M86 103h1M126 18h1" stroke="#fff" stroke-opacity="0.1" stroke-width="1" transform="translate(0 0.5)"/><path d="M49 87h1M38 10h1M93 115h1M2 91h1M9 108h1M69 139h1M15 136h1M97 64h1M101 10h1M73 118h1M78 121h1M88 149h1M35 47h1M65 121h1M4 64h1M12 162h1M63 45h1M89 85h1M80 14h1M58 75h1M48 38h1M17 71h1M80 4h1M95 165h1M129 71h1M61 141h1M119 157h1M50 1h1M46 129h1M107 126h1M73 133h1M61 80h1M48 111h1M49 58h1M78 6h1M74 165h1M93 124h1M93 36h1M66 60h1M59 162h1M99 63h1M47 69h1M99 144h1M110 106h1M95 60h1M109 91h1M1 160h1M77 2h1M22 48h1M83 58h1M19 7h1M89 26h1M7 14h1M113 150h1M82 96h1M85 82h1M108 50h1M88 159h1M62 47h1M100 19h1M24 107h1M102 65h1M109 50h1M7 114h1M103 119h1M34 41h1M6 155h1M13 113h1M113 53h1M65 90h1M2 134h1M21 141h1M96 122h1M118 9h1M70 75h1M52 28h1M11 107h1M110 72h1M120 51h1M126 114h1M10 130h1M37 138h1M120 62h1M12 11h1M14 140h1M128 121h1M24 70h1M111 147h1M3 110h1M121 46h1M115 119h1M122 146h1M84 19h1M108 123h1M6 19h1M25 124h1M90 14h1M59 23h1M121 18h1M83 33h1M62 138h1M7 79h1M67 124h1M109 165h1M6 22h1M7 164h1M43 61h1M3 114h1M77 52h1M99 116h1M101 61h1M76 133h1M116 36h1M6 94h1M51 132h1M88 14h1M17 98h1M124 159h1M13 147h1M76 67h1M52 118h1M2 71h1M52 69h1M37 59h1M31 71h1M65 9h1M74 38h1M12 91h1M113 99h1M50 53h1M83 54h1M33 118h1M0 66h1M75 45h1M36 60h1M117 17h1M81 42h1M62 11h1M105 72h1M82 7h1M88 19h1M110 43h1M45 91h1M44 153h1M129 55h1M47 143h1M88 29h1M35 151h1M123 94h1M71 154h1M106 93h1" stroke="#fff" stroke-opacity="0.2" stroke-width="1" transform="translate(0 0.5)"/><path d="M5 159h1M121 112h1M119 131h1M68 80h1M84 25h1M62 125h1M84 1h1M75 61h1M94 160h1M79 146h1M18 27h1M47 54h1M40 120h1M54 132h1M97 116h1M46 0h1M95 55h1M116 155h1M120 11h1M15 141h1M87 61h1M64 106h1M36 1h1M68 107h1M115 64h1M50 120h1M44 68h1M8 163h1M88 91h1M53 150h1M53 95h1M35 87h1M86 11h1M42 147h1M26 76h1M102 68h1M76 74h1M21 121h1M42 12h1M93 150h1M122 69h1M35 8h1M127 92h1M84 133h1M45 64h1M69 163h1M78 13h1M21 150h1M85 162h1M61 136h1M31 55h1M45 102h1M116 52h1M75 161h1M3 26h1M87 144h1M42 86h1M113 11h1M53 103h1M44 114h1M93 118h1M53 11h1M97 76h1M104 88h1M57 146h1" stroke="#fff" stroke-opacity="0.3" stroke-width="1" transform="translate(0 0.5)"/><path d="M18 136h1M54 22h2M81 105h1M1 68h1M48 115h1M48 117h1M84 136h2M56 25h1M56 109h1M36 27h1M69 106h1M94 7h1M66 122h2M13 143h1M47 44h2M31 3h1M13 116h1M17 116h1M77 89h1M106 92h2M64 157h1M71 96h2M60 81h1M118 31h2M29 155h1M103 52h1M120 50h1M73 133h2M81 91h1M109 130h2M127 134h1M114 116h1M25 107h2M9 142h2M128 135h2M126 22h2M28 141h2M55 121h2M96 63h1M94 63h1M43 149h1M59 65h1M33 14h2M44 62h2M46 64h1M101 142h1M37 48h1M16 162h1M10 168h1M76 108h1M57 41h2M57 39h1M84 140h2M7 98h2M126 52h1M12 57h1M10 57h1M30 70h1M35 160h2M108 106h1M83 133h1M51 25h1M95 139h1M119 7h1M72 150h1M53 64h1M41 159h1M21 136h1M98 111h2M6 47h2M8 47h2M23 40h1M116 34h2M57 115h1M1 76h1M113 137h1M18 41h2M20 43h1M121 135h1M108 54h1M78 27h1M76 25h1M72 21h1" stroke="#e0e040" stroke-opacity="1" stroke-width="1.6" transform="translate(0 0.5)"/><path d="M16 136h2M12 136h2M56 22h1M115 8h2M81 99h1M19 139h1M43 146h1M84 136h1M56 109h1M96 52h1M67 119h1M3 40h1M55 38h2M20 82h1M55 122h1M53 23h1M118 10h1M101 143h2M92 81h1M96 81h2M98 81h1M66 155h2M65 71h1M65 71h2M97 39h2M49 29h1M34 32h1M17 101h1M119 71h1M36 49h2M38 51h1M5 68h1M39 58h1M71 133h1M22 6h1M24 4h1M105 93h2M27 107h2M128 137h1M130 22h1M59 121h1M36 75h2M97 108h2M97 108h1M107 152h1M107 156h1M82 17h2M80 17h1M46 105h2M42 60h1M39 48h2M35 48h1M4 58h1M12 166h2M92 38h2M98 57h2M57 43h1M57 37h1M7 98h1M7 98h1M126 52h1M6 57h2M50 151h2M21 56h1M65 14h2M92 23h2M105 23h1M-2 47h1M127 141h2M87 42h2M59 64h1M17 140h1M92 111h1M77 91h1M5 34h1M19 17h2M40 76h2M38 78h2M122 28h1M99 116h1M55 115h1M84 92h1M86 153h1" stroke="#d8d850" stroke-opacity="1" stroke-width="1.6" transform="translate(0 0.5)"/><path d="M14 136h1M86 71h1M88 69h2M79 97h1M90 16h2M56 27h1M124 35h2M126 35h2M52 77h1M38 29h2M51 121h1M53 121h2M67 119h2M67 119h2M3 40h2M13 143h1M24 40h1M90 71h1M61 35h1M118 10h1M72 72h2M76 72h1M107 151h1M101 145h2M45 96h2M83 97h1M85 97h1M7 121h2M11 37h1M117 71h1M33 147h1M69 98h2M49 149h1M73 3h2M28 124h1M7 73h1M3 68h2M39 52h1M39 56h1M80 24h1M75 133h1M94 111h1M103 93h1M88 98h1M29 107h1M116 131h1M118 131h1M126 165h2M128 167h2M128 139h1M75 2h2M24 131h1M61 121h2M38 77h1M40 79h2M44 103h1M123 88h1M94 87h1M96 87h1M49 76h1M49 76h1M4 60h1M92 38h1M104 63h2M24 9h2M29 132h1M30 70h1M33 86h1M75 95h1M79 147h2M32 124h2M15 86h2M124 43h1M85 42h2M24 146h1M63 60h2M94 111h2M105 111h1M79 91h1M25 97h1M3 34h1M19 15h1M10 47h2M122 33h1M99 116h2M126 74h1M53 115h1M12 4h1M99 34h2M101 34h1M11 65h1M74 23h1" stroke="#33ff22" stroke-opacity="1" stroke-width="1.6" transform="translate(0 0.5)"/><path d="M16 127h1M38 111h1M40 109h1M107 77h2M109 75h1M117 6h2M32 137h1M36 137h1M31 72h1M16 104h1M88 18h2M56 109h1M34 25h1M49 121h1M4 126h2M6 126h2M92 7h1M3 40h2M53 29h1M59 35h1M55 38h1M13 143h2M26 40h2M123 70h1M105 150h1M53 122h2M20 143h1M70 72h1M74 72h1M27 3h1M94 81h1M106 90h2M65 71h1M99 37h1M36 32h2M13 35h1M7 99h2M9 99h1M51 149h1M122 66h2M71 5h1M75 1h2M60 79h2M120 29h2M27 153h2M45 38h1M1 79h2M3 77h1M5 75h1M1 68h1M122 50h2M118 50h1M4 162h1M39 54h1M114 96h2M112 96h2M94 111h2M125 134h2M129 134h1M14 128h1M12 126h1M26 2h1M99 66h1M101 66h1M44 7h1M23 107h1M11 142h1M15 142h2M124 163h1M124 22h1M128 22h1M99 71h1M22 129h1M57 121h2M104 136h1M97 108h2M45 149h2M41 149h1M107 150h1M59 47h2M35 14h1M37 14h2M48 66h1M125 90h1M103 144h2M14 113h2M11 144h1M4 62h1M4 56h1M14 164h1M100 59h1M74 108h2M115 153h2M113 68h2M57 117h1M7 98h2M126 52h1M126 52h2M8 57h1M19 56h1M23 56h1M24 119h1M75 91h1M97 91h1M106 104h1M32 124h1M79 11h2M13 86h1M67 16h2M11 23h1M103 74h1M99 74h1M103 23h2M69 83h2M69 83h2M2 51h1M0 49h2M-4 45h1M123 38h1M57 74h2M53 23h1M49 27h2M125 141h2M109 47h1M122 45h2M25 56h1M25 56h1M84 84h2M86 84h1M22 146h1M98 44h2M63 60h1M63 60h1M57 64h2M39 157h1M19 138h1M43 154h2M43 154h1M100 99h2M96 111h2M88 55h2M102 107h1M19 19h1M19 13h1M42 74h1M77 139h1M120 30h2M118 32h1M106 70h1M124 33h1M51 115h1M12 2h1M12 6h1M78 42h2M55 27h1M59 31h1M112 27h2M84 155h2" stroke="#22ee22" stroke-opacity="1" stroke-width="1.6" transform="translate(0 0.5)"/><path d="M90 67h1M83 105h1M30 137h1M34 137h2M63 77h1M1 66h2M93 18h2M48 119h1M48 121h1M84 136h2M69 106h2M2 126h1M68 60h1M66 124h2M67 119h1M55 31h1M57 33h2M20 82h1M123 70h1M51 122h1M118 10h1M108 77h2M29 3h1M15 116h2M38 32h1M32 32h2M47 149h1M53 149h1M105 52h1M16 130h2M86 98h1M13 142h1M127 35h1M24 149h1M26 133h2M102 134h2M7 81h1M107 154h1M49 74h1M51 76h1M48 107h2M51 93h2M54 161h2M11 142h2M11 146h1M33 48h2M102 61h1M102 124h1M25 56h1M30 70h1M75 93h2M99 93h1M77 145h1M49 23h1M69 18h1M36 20h1M101 74h2M90 23h1M71 102h1M125 38h1M111 47h2M118 49h1M120 47h2M121 7h1M96 44h2M55 64h1M43 161h1M37 155h1M86 55h1M85 66h1M81 91h1M104 107h1M36 80h1M120 33h2M99 116h2M117 152h1M117 150h2M57 29h2M110 25h1M114 29h2M116 31h2M119 133h1" stroke="#c8c840" stroke-opacity="1" stroke-width="1.6" transform="translate(0 0.5)"/></svg><svg class="a" style="left:916px;top:863px" width="130" height="166"><rect width="130" height="166" fill="#131313"/><path d="M100 14h1M68 93h1M68 131h1M32 146h1M5 73h1M62 71h1M27 42h1M68 57h1M128 27h1M92 43h1M77 41h1M5 73h1M22 130h1M103 154h1M94 36h1M46 62h1M50 62h1M35 89h1M99 135h1M98 48h1M108 155h1M49 156h1M43 42h1M76 131h1M69 125h1M81 133h1M28 51h1M96 29h1M21 47h1M72 154h1M121 92h1M71 140h1M126 33h1M22 63h1M13 117h1M26 51h1M87 63h1M53 151h1M12 145h1M16 32h1M104 133h1M28 76h1M66 98h1M41 15h1M91 128h1M22 140h1M66 69h1M98 25h1M94 96h1M15 143h1M94 33h1M89 19h1M55 87h1M67 82h1M27 95h1M67 18h1M15 84h1M114 71h1M2 74h1M83 156h1M17 47h1M53 161h1M65 13h1M118 105h1M107 85h1M128 69h1M128 86h1M101 32h1M75 109h1M39 99h1M20 152h1M28 146h1M81 19h1M22 126h1M66 2h1M47 118h1M86 113h1M7 133h1M15 78h1M87 2h1M125 53h1M20 75h1M30 151h1M80 52h1M68 155h1M94 136h1M41 6h1" stroke="#fff" stroke-opacity="0.1" stroke-width="1" transform="translate(0 0.5)"/><path d="M112 135h1M102 19h1M51 60h1M82 40h1M11 69h1M79 23h1M87 67h1M121 49h1M2 157h1M63 94h1M87 140h1M95 4h1M78 33h1M44 155h1M123 29h1M75 49h1M58 154h1M25 144h1M111 120h1M65 17h1M62 32h1M19 42h1M91 92h1M69 105h1M84 7h1M115 66h1M60 42h1M77 147h1M75 82h1M122 132h1M46 3h1M55 21h1M51 128h1M29 36h1M114 1h1M72 151h1M107 72h1M38 99h1M113 11h1M95 43h1M15 41h1M17 165h1M96 38h1M92 3h1M70 126h1M77 15h1M99 3h1M65 37h1M108 70h1M120 158h1M117 46h1M126 36h1M33 84h1M20 81h1M111 39h1M31 129h1M82 27h1M76 51h1M34 16h1M31 112h1M87 54h1M10 156h1M11 92h1M109 93h1M6 140h1" stroke="#fff" stroke-opacity="0.3" stroke-width="1" transform="translate(0 0.5)"/><path d="M126 53h1M4 56h1M124 114h1M129 158h1M45 53h1M26 125h1M103 90h1M67 68h1M62 124h1M75 45h1M35 26h1M84 46h1M50 34h1M77 40h1M125 137h1M24 80h1M97 123h1M23 76h1M93 63h1M65 103h1M49 41h1M106 149h1M118 36h1M52 12h1M115 50h1M88 66h1M1 75h1M101 163h1M113 37h1M116 66h1M96 93h1M15 158h1M67 50h1M116 96h1M4 144h1M109 24h1M71 100h1M92 85h1M59 22h1M101 91h1M43 164h1M45 98h1M14 139h1M2 106h1M106 156h1M117 32h1M14 40h1M105 41h1M95 48h1M11 0h1M74 164h1M109 61h1M119 82h1M27 27h1M10 135h1M31 157h1M87 143h1M114 8h1M12 97h1M101 46h1M16 139h1M50 140h1M67 124h1M128 53h1M103 40h1M102 68h1M63 130h1M121 120h1M99 43h1M0 83h1M89 159h1M10 151h1M104 42h1M43 165h1M59 156h1M37 78h1M5 98h1M60 129h1M77 136h1M71 147h1M125 161h1M77 130h1M117 74h1M83 66h1M119 10h1M58 63h1M20 59h1M120 47h1M28 123h1M84 142h1M128 70h1M39 111h1M7 17h1M69 6h1M77 38h1M49 102h1M122 130h1M94 76h1M57 27h1M41 4h1M26 143h1M2 66h1M126 78h1M1 27h1M106 132h1M81 124h1M90 44h1M9 18h1M18 117h1M98 161h1M117 70h1M95 55h1M58 134h1M10 142h1M101 20h1M23 124h1M17 8h1M47 62h1M67 112h1M5 85h1M33 2h1M97 68h1M30 148h1M47 122h1M35 124h1M100 121h1M17 101h1M91 26h1M6 137h1M42 110h1M73 117h1M129 116h1M94 76h1M113 74h1M63 70h1M75 155h1M128 24h1M126 92h1M122 15h1M47 160h1M69 146h1M33 132h1M117 150h1M47 127h1M49 84h1M15 127h1M97 35h1M20 37h1" stroke="#fff" stroke-opacity="0.2" stroke-width="1" transform="translate(0 0.5)"/><path d="M127 10h1M47 92h2M123 108h1M111 11h2M111 13h1M116 66h1M54 103h1M50 103h1M13 35h1M28 125h1M119 70h1M80 4h1M77 91h2M75 106h2M37 164h1M25 77h1M75 6h1M23 129h2M93 98h1M7 86h2M5 84h2M3 82h2M1 80h2M94 149h1M106 9h2M49 10h1M77 146h2M79 146h1M81 146h1M74 95h2M114 94h1M116 94h1M25 31h1M123 158h2M18 37h1M114 153h1M116 155h1M41 23h2M43 23h1M80 157h1M21 50h1M25 50h1M24 92h2M24 92h2M102 2h2M108 33h1M110 31h1M61 27h2M15 69h2M29 162h1M29 160h1M29 158h2M8 8h1M4 112h1M83 79h1M81 79h2M52 143h1M44 30h1M49 48h2M47 48h1M48 31h1M46 33h1M31 83h1M29 83h1M27 83h1M75 4h2M77 4h1M54 90h1M115 3h1M77 45h2M-2 88h2M62 28h2M93 13h1M93 13h2M91 78h1M93 78h1M2 31h1M19 26h1M17 26h2M36 90h1M36 92h2M114 155h1M56 72h1M26 136h2M51 152h1M-2 35h2M119 22h2M121 20h1M29 58h1M19 135h2M19 135h1M50 31h1M50 31h1M108 163h1M71 65h2M73 67h1M75 69h1M77 71h1M105 48h1M107 46h1M109 44h2M121 91h1M76 39h2M71 110h1M3 1h1M30 83h1M88 67h1M15 94h1M126 71h1M97 98h1M123 27h1M4 36h2M72 160h2M76 160h2M78 160h1M18 46h2M48 141h1M115 134h2M115 136h2M113 141h1M82 67h1M5 34h2M93 107h1M50 116h2M52 118h1M9 8h2M15 11h1M78 37h1M112 50h1M37 128h1M37 126h1M37 124h1M14 104h2M2 133h1M100 112h1M115 139h1M116 66h1M69 138h1M8 31h1M2 53h1M4 51h2M58 163h2M97 21h1M120 98h2M75 8h1M10 143h1M9 129h1M41 10h1M26 97h1M28 97h1M15 73h1M29 43h1M109 21h1M55 79h2M36 41h2M51 161h2M106 27h2M108 25h1M20 140h1M24 144h2M86 113h2M84 111h1M82 109h1M13 90h1M13 90h2M51 131h1M14 43h2" stroke="#22ee22" stroke-opacity="1" stroke-width="1.6" transform="translate(0 0.5)"/><path d="M129 12h2M52 103h1M48 103h1M19 152h2M30 125h1M23 127h2M78 4h2M39 166h2M112 80h1M21 73h1M69 -0h2M109 86h1M28 68h1M38 139h2M36 111h2M121 160h2M125 156h1M127 154h2M12 37h1M44 102h2M60 139h2M62 139h1M24 92h1M100 4h1M90 40h2M90 38h2M37 4h2M82 44h1M104 74h2M54 90h2M90 105h1M2 88h2M13 53h1M92 161h1M110 147h1M118 155h1M38 43h2M24 136h1M101 23h2M51 148h1M4 41h1M76 88h1M95 8h1M64 91h1M115 91h1M28 85h1M96 28h1M17 94h1M124 71h2M48 141h1M22 115h1M123 145h1M111 143h2M80 67h2M74 33h1M122 96h1M118 140h1M11 8h1M13 8h2M27 151h1M72 140h1M105 31h1M85 147h1M37 130h2M89 92h1M77 28h2M54 33h1M11 72h2M30 79h2M99 21h1M77 8h1M57 51h1M9 125h1M66 100h1M76 137h1M107 21h1M53 61h1M34 43h2M49 163h1M110 107h1M108 109h2M72 116h1M64 118h1M63 126h1M97 83h1" stroke="#e0e040" stroke-opacity="1" stroke-width="1.6" transform="translate(0 0.5)"/><path d="M43 71h2M81 34h1M123 110h1M120 66h1M34 76h1M44 80h1M46 80h1M23 127h2M104 28h1M63 135h1M76 4h2M71 90h1M73 92h1M2 101h1M4 103h1M118 18h2M51 62h1M59 123h2M21 131h2M25 127h1M92 124h1M24 100h1M46 116h2M34 74h2M32 72h1M51 12h1M74 95h1M112 94h1M16 37h2M14 37h2M84 69h1M105 140h1M39 23h1M76 161h1M90 42h2M90 36h2M24 91h1M26 91h1M50 143h1M41 8h1M43 10h1M46 28h1M25 83h2M60 143h2M58 143h1M106 72h1M110 87h2M21 53h2M54 90h1M78 31h2M90 105h2M113 3h2M109 149h1M2 130h1M4 33h1M24 95h1M26 95h1M36 96h1M112 155h2M36 43h1M40 43h2M28 136h1M99 23h1M-0 37h2M29 58h1M19 135h2M19 135h1M97 8h2M38 60h1M117 91h1M9 145h1M121 25h1M4 36h1M47 18h1M63 139h1M24 115h2M11 7h1M114 30h1M82 163h2M82 165h1M103 31h2M89 92h1M16 102h1M0 133h1M-2 133h2M115 141h2M93 53h1M30 75h1M93 21h1M39 5h2M68 102h1M30 97h1M99 61h1M57 81h1M59 83h1M70 114h1M95 83h1M12 41h2" stroke="#c8c840" stroke-opacity="1" stroke-width="1.6" transform="translate(0 0.5)"/><path d="M79 36h1M45 90h1M118 66h1M102 28h2M120 18h2M51 60h1M57 123h2M58 50h1M60 50h2M27 79h1M73 4h1M91 98h1M30 70h1M38 137h1M87 10h2M27 31h1M84 65h1M85 145h1M78 159h2M77 156h2M79 154h1M61 27h1M111 49h1M2 114h2M48 143h1M39 6h1M42 32h1M48 26h2M51 48h1M45 48h1M108 70h2M54 90h1M38 45h2M36 45h2M109 149h1M4 130h1M13 55h1M93 13h1M90 161h1M95 78h2M36 94h2M1 76h2M34 43h1M56 72h2M22 136h1M51 150h1M17 77h2M43 97h2M103 50h1M119 91h2M24 89h2M86 67h1M41 2h2M74 160h1M48 114h1M76 35h1M85 145h2M41 157h1M89 92h1M-4 133h1M81 28h1M79 28h2M98 114h1M56 33h1M58 165h1M70 87h1M30 77h1M124 98h1M45 106h2M97 61h1M111 21h1M88 22h1M22 142h1M68 118h2M66 118h1M88 115h2M114 66h1M116 66h1M51 131h1M51 131h2" stroke="#d8d850" stroke-opacity="1" stroke-width="1.6" transform="translate(0 0.5)"/><path d="M23 127h1M73 87h1M75 89h1M55 123h1M23 75h1M71 2h1M84 67h1M112 151h1M83 143h2M23 50h2M27 50h1M61 27h1M30 64h1M7 74h1M102 76h1M76 161h1M120 81h1M75 47h1M-0 88h1M-4 88h1M6 35h1M20 95h2M22 95h2M17 59h1M116 155h1M56 72h2M27 159h1M27 159h1M2 39h1M19 77h1M60 119h2M60 119h1M45 97h1M12 115h1M93 8h1M99 8h1M78 39h1M73 110h1M94 64h1M96 66h1M5 1h1M1 1h1M26 87h2M90 67h1M49 18h2M67 94h2M112 30h1M120 140h1M117 156h1M25 151h1M89 92h2M75 28h2M93 51h1M93 55h1M95 21h1M122 98h1M31 56h1M9 127h2M46 45h1M37 5h1M105 3h1M105 3h2M43 108h1M95 61h1M78 139h2M113 21h1M53 77h2M90 24h1M110 23h1M106 111h1M74 118h2M76 120h1M13 90h1" stroke="#33ff22" stroke-opacity="1" stroke-width="1.6" transform="translate(0 0.5)"/></svg><svg class="a" style="left:1080px;top:863px" width="130" height="166"><rect width="130" height="166" fill="#131313"/><path d="M35 10h1M115 33h1M5 128h1M46 89h1M2 48h1M25 35h1M13 105h1M12 64h1M17 49h1M19 87h1M89 6h1M83 27h1M95 39h1M66 159h1M93 134h1M49 137h1M86 1h1M120 43h1M71 49h1M94 35h1M128 73h1M59 35h1M75 56h1M101 34h1M58 52h1M42 155h1M16 64h1M74 110h1M103 23h1M4 121h1M48 163h1M15 128h1M102 80h1M29 10h1M85 120h1M66 92h1M76 98h1M2 70h1M85 105h1M95 84h1M50 82h1M97 159h1M115 165h1M116 153h1M74 105h1M39 15h1M110 68h1M44 77h1M15 138h1M50 59h1M34 59h1M37 52h1M78 105h1M57 4h1M93 1h1M80 155h1M87 16h1M13 120h1M25 104h1M100 111h1M20 147h1M54 73h1M47 55h1M111 113h1M90 164h1M123 37h1M18 23h1M30 140h1M127 134h1M79 32h1M67 111h1M59 15h1M90 101h1M114 92h1M105 106h1M38 132h1M63 99h1M15 121h1M25 49h1M102 89h1M90 120h1M107 109h1M44 150h1M76 148h1M62 92h1M60 11h1M7 80h1M123 76h1M49 148h1M40 42h1M79 99h1" stroke="#fff" stroke-opacity="0.1" stroke-width="1" transform="translate(0 0.5)"/><path d="M44 86h1M31 128h1M36 8h1M10 38h1M27 94h1M44 1h1M25 143h1M118 99h1M69 137h1M84 39h1M96 6h1M32 63h1M39 53h1M100 94h1M47 101h1M19 36h1M28 28h1M19 121h1M104 50h1M57 164h1M83 87h1M121 120h1M80 85h1M40 72h1M15 66h1M53 53h1M40 160h1M96 126h1M38 141h1M50 46h1M124 24h1M65 110h1M93 41h1M124 60h1M85 69h1M26 41h1M49 151h1M125 100h1M80 54h1M107 80h1M31 134h1M51 131h1M115 33h1M46 105h1M10 61h1M88 6h1M101 30h1M99 145h1M65 158h1M94 78h1M18 11h1M50 79h1M22 7h1M53 43h1M78 85h1M33 67h1M88 30h1M56 104h1M17 71h1M28 119h1M10 4h1M126 84h1M108 119h1M28 88h1M64 1h1M43 81h1M126 38h1M107 151h1M10 72h1M30 117h1M71 106h1M16 37h1M79 30h1M66 150h1M7 140h1M92 62h1M120 29h1M65 83h1M32 136h1M11 157h1M70 23h1M77 118h1M68 63h1M128 151h1M115 63h1M119 163h1M116 100h1M106 98h1M121 123h1M103 41h1M81 94h1M76 146h1M40 65h1M73 153h1M113 65h1M35 1h1M43 105h1M85 36h1M69 119h1M115 85h1M89 89h1M108 121h1M84 133h1M112 80h1M6 88h1M67 53h1M19 52h1M129 88h1M24 111h1M22 115h1M74 138h1M112 73h1M56 160h1M30 45h1M123 46h1M114 20h1M78 44h1M24 73h1M114 47h1M104 74h1M117 68h1M91 12h1M79 55h1M9 86h1M119 16h1M128 69h1M29 43h1M50 50h1M115 145h1M124 0h1M11 83h1M47 15h1M115 107h1M88 83h1M123 43h1M49 118h1M116 10h1M54 156h1M32 26h1M70 153h1M14 103h1M12 110h1" stroke="#fff" stroke-opacity="0.2" stroke-width="1" transform="translate(0 0.5)"/><path d="M64 108h1M78 66h1M110 147h1M52 159h1M8 139h1M98 24h1M60 37h1M86 83h1M1 94h1M44 58h1M48 146h1M128 27h1M45 59h1M64 111h1M8 15h1M58 2h1M41 27h1M64 131h1M14 18h1M79 23h1M74 32h1M28 144h1M50 123h1M40 47h1M6 118h1M99 65h1M97 41h1M6 134h1M124 16h1M42 164h1M46 107h1M35 42h1M82 129h1M89 37h1M106 3h1M4 76h1M9 43h1M122 48h1M34 27h1M112 120h1M111 157h1M122 153h1M47 84h1M71 93h1M64 126h1M104 109h1M105 84h1M9 141h1M74 83h1M75 42h1M45 60h1M55 20h1M39 60h1M84 83h1M116 120h1M20 22h1M94 62h1M26 161h1M46 74h1M119 101h1M103 8h1M104 125h1M20 70h1M41 134h1M18 87h1M126 56h1M66 25h1" stroke="#fff" stroke-opacity="0.3" stroke-width="1" transform="translate(0 0.5)"/><path d="M22 39h2M20 37h1M16 33h2M91 22h1M29 116h1M107 75h2M71 13h1M7 69h1M54 137h1M27 70h2M113 8h2M44 68h1M44 70h2M44 72h1M95 22h1M61 37h1M67 37h1M90 58h2M82 121h1M59 37h1M91 126h1M71 81h1M69 79h2M71 47h2M82 36h1M15 126h2M64 139h1M66 93h1M56 153h2M58 153h1M60 153h1M88 103h1M25 84h1M51 104h2M18 122h2M117 129h1M94 97h1M31 16h2M35 12h1M122 25h1M91 145h1M93 145h2M80 122h2M82 124h2M110 111h1M59 149h1M124 91h1M70 150h2M37 69h1M39 69h1M56 144h1M57 48h2M124 87h1M124 85h1M44 49h1M2 153h1M4 151h1M8 147h2M56 154h1M53 128h1M12 17h1M77 93h2M81 89h1M53 49h1M85 32h2M30 17h1M26 13h2M18 58h1M94 110h1M54 35h2M125 114h1M123 112h2M29 56h1M29 56h1M33 28h2M64 41h1M116 27h1M24 85h2M26 87h2M71 148h1M75 152h1M60 47h2M60 47h2M60 47h2M126 83h2M26 86h1M126 94h2M63 119h1M87 129h1M39 150h1M71 120h2M36 142h1M56 125h2M58 125h2M33 105h1M45 68h2M128 118h1M56 35h1M86 135h1M33 14h1M35 14h1M49 121h2M106 32h2M102 36h1M100 38h1M55 121h1M48 80h1M6 136h2M8 136h1M125 55h1M91 107h2M63 122h1M24 55h2M26 55h1M41 113h1M96 80h1M98 80h2M82 56h2M34 7h1M65 120h1M12 62h1M79 91h1M65 39h1M80 64h1M105 135h1M63 109h1M67 105h2M63 3h2M73 114h1M7 72h1M71 20h1M73 20h1M77 20h1M26 123h1M118 8h1M71 65h1M24 143h1M32 143h1M32 143h1M114 84h1M127 30h2M114 134h2M2 67h1M87 122h1M87 124h1M87 126h1M23 145h1M21 147h1M113 36h1M127 116h1M20 132h1M18 130h2M85 129h1M87 129h1M69 140h1M101 30h1M84 109h1M82 109h1M72 62h1M57 60h1M61 64h2M101 82h1M97 86h1" stroke="#22ee22" stroke-opacity="1" stroke-width="1.6" transform="translate(0 0.5)"/><path d="M18 35h1M73 11h2M62 75h1M55 104h2M123 123h1M44 66h2M14 92h1M84 121h1M102 114h1M72 133h1M67 43h1M69 45h2M96 158h2M32 151h1M64 95h1M62 93h1M62 153h1M88 103h1M88 103h2M88 103h2M27 86h1M53 104h1M59 2h1M110 111h1M110 111h1M59 149h2M59 149h2M16 61h1M124 89h2M56 152h2M56 148h1M68 75h2M28 15h2M20 58h1M22 30h1M99 91h1M88 104h1M64 39h2M114 29h1M22 161h1M73 150h2M39 69h1M28 86h2M111 109h1M122 54h1M89 129h1M69 120h1M73 120h1M34 142h2M113 147h1M115 147h1M35 78h1M124 149h2M124 149h1M49 7h1M14 127h1M40 102h2M55 121h2M55 121h1M10 136h2M63 120h1M84 56h1M120 133h1M126 25h1M67 120h1M128 13h2M82 64h1M65 107h2M71 34h1M3 68h1M9 74h1M98 114h2M23 34h1M57 96h1M28 153h2M7 54h1M17 151h2M127 116h2M127 116h1M16 128h2M67 140h1M62 47h1M58 14h1M54 80h1M125 91h1M69 93h2M44 159h2M55 114h2M70 60h1M86 38h2" stroke="#e0e040" stroke-opacity="1" stroke-width="1.6" transform="translate(0 0.5)"/><path d="M93 24h1M80 50h2M64 75h1M54 137h1M123 119h2M123 121h1M119 62h1M39 70h1M102 114h1M72 129h2M95 148h2M13 126h1M32 153h1M68 91h1M89 96h2M32 33h2M42 46h2M89 148h1M115 129h2M20 91h1M120 25h2M61 2h2M27 125h2M65 52h2M65 52h2M122 93h2M66 98h1M124 76h1M51 48h2M104 127h1M56 150h1M1 57h1M84 133h1M23 97h1M79 91h1M92 108h1M64 43h2M38 29h1M9 144h2M39 150h2M109 44h1M38 142h1M117 147h1M58 35h2M29 14h1M47 7h1M16 125h1M96 17h2M85 107h2M43 113h1M45 113h2M94 80h2M60 109h1M32 7h1M126 13h1M122 13h1M86 73h1M61 111h1M59 7h1M105 33h2M41 39h1M41 39h1M22 143h1M26 143h1M125 28h1M118 102h1M120 104h1M36 64h1M111 38h2M18 70h1M83 129h1M89 129h2M78 44h1M103 30h1M64 47h1M60 47h1M58 47h2M58 70h2M60 16h2M86 109h1M123 89h1M69 91h1M34 151h2M99 84h2M95 88h2" stroke="#c8c840" stroke-opacity="1" stroke-width="1.6" transform="translate(0 0.5)"/><path d="M29 116h1M29 116h1M29 116h1M105 75h1M103 75h1M75 9h1M123 117h2M111 10h1M72 131h1M14 77h1M75 124h1M96 45h1M110 96h2M27 4h2M18 89h1M90 97h2M33 14h2M18 61h1M64 100h2M68 96h1M72 150h1M61 5h2M81 59h2M53 48h1M42 49h1M6 149h1M68 77h2M32 19h2M97 91h2M29 56h1M29 56h1M98 142h2M96 140h2M24 161h1M28 89h2M64 1h2M66 1h1M77 154h1M60 47h1M111 109h1M3 138h2M54 125h1M111 147h2M130 116h2M40 69h2M124 149h2M12 129h1M49 121h1M104 34h2M50 36h1M55 121h2M89 107h1M63 118h1M100 80h1M120 131h1M69 120h2M124 13h1M33 119h1M122 118h2M54 77h1M61 5h1M34 141h1M20 143h1M59 96h2M61 96h1M63 96h1M9 54h1M105 30h1M50 80h1M60 66h2M41 41h1M43 41h1M88 38h2" stroke="#33ff22" stroke-opacity="1" stroke-width="1.6" transform="translate(0 0.5)"/><path d="M23 158h1M119 58h2M119 60h2M93 20h1M63 37h2M65 37h1M92 58h1M67 90h2M75 122h2M96 158h1M96 158h1M112 148h2M114 152h2M20 91h1M50 116h1M44 46h1M91 146h2M90 96h1M88 97h1M92 97h1M37 10h2M87 145h1M89 145h1M78 120h1M110 111h2M59 149h1M21 25h2M126 74h1M55 48h2M104 127h1M3 57h2M25 95h2M53 49h1M56 156h2M83 32h1M83 104h2M90 106h1M52 37h1M3 39h1M127 116h1M44 30h1M76 112h2M78 110h1M124 83h2M27 12h1M5 140h2M7 142h1M12 128h2M85 129h1M111 44h1M31 14h2M11 90h1M49 121h1M50 36h1M48 82h1M4 136h1M94 19h1M127 55h1M87 107h1M47 113h1M120 135h1M63 59h1M40 29h2M10 60h2M67 139h2M103 135h1M5 70h1M75 20h2M28 121h2M26 152h1M19 149h1M14 70h1M16 70h1M52 80h1M88 109h1M69 89h1M34 153h2M55 58h1M59 62h1" stroke="#d8d850" stroke-opacity="1" stroke-width="1.6" transform="translate(0 0.5)"/></svg><div class="t" style="left:1335px;top:874px;font-size:29px;color:#111;word-spacing:3.5px">Mean : - ± - nm</div><div class="t" style="left:1335px;top:918px;font-size:29px;color:#111;word-spacing:3.5px">Mode : - ± - nm</div><div class="t" style="left:1611px;top:874px;font-size:29px;color:#111;word-spacing:2.8px">D10 : - ± - nm</div><div class="t" style="left:1611px;top:918px;font-size:29px;color:#111;word-spacing:2.8px">D50 : - ± - nm</div><div class="t" style="left:1611px;top:962px;font-size:29px;color:#111;word-spacing:2.8px">D90 : - ± - nm</div><div class="a" style="left:0;top:0;width:1908px;height:1034px;border:1px solid #6a6a6a;pointer-events:none"></div></body></html>
